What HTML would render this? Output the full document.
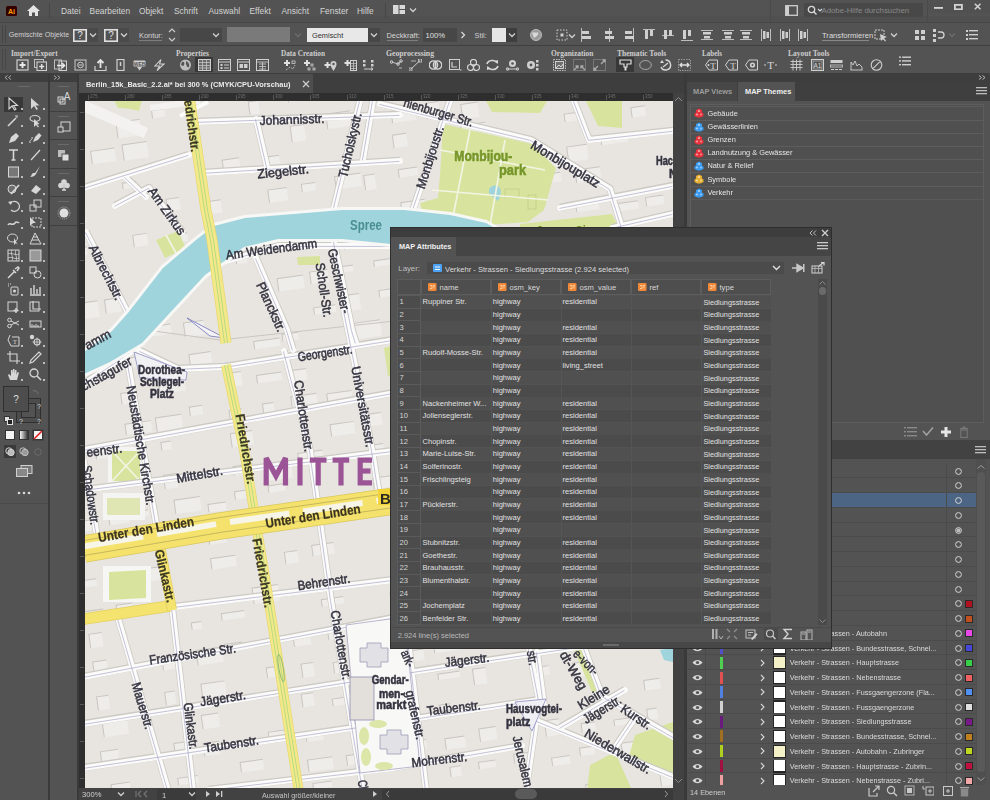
<!DOCTYPE html>
<html><head><meta charset="utf-8">
<style>
*{margin:0;padding:0;box-sizing:border-box}
html,body{width:990px;height:800px;overflow:hidden;background:#535353;font-family:"Liberation Sans",sans-serif;color:#d6d6d6}
.a{position:absolute}
.t{position:absolute;white-space:nowrap;line-height:1}
#menubar{left:0;top:0;width:990px;height:21px;background:#535353}
#ctrl{left:0;top:22px;width:990px;height:23px;background:#535353}
#mapbar{left:0;top:46px;width:990px;height:27px;background:#535353}
.sep{background:#3c3c3c}
</style></head><body>
<!-- separators -->
<div class="a sep" style="left:0;top:21px;width:990px;height:1px"></div>
<div class="a sep" style="left:0;top:45px;width:990px;height:1px"></div>
<div class="a" id="menubar"></div>
<div class="a" id="ctrl"></div>
<div class="a" id="mapbar"></div>
<!-- dark strip below toolbars -->
<div class="a" style="left:0;top:73px;width:990px;height:9px;background:#3e3e3e"></div>
<!-- left tool panel -->
<div class="a" style="left:0;top:82px;width:48px;height:718px;background:#535353"></div>
<div class="a" style="left:48px;top:73px;width:2px;height:727px;background:#3a3a3a"></div>
<div class="a" style="left:50px;top:82px;width:27px;height:718px;background:#535353"></div>
<div class="a" style="left:77px;top:73px;width:2px;height:727px;background:#3a3a3a"></div>
<!-- doc area -->
<div class="a" style="left:79px;top:73px;width:605px;height:20px;background:#3e3e3e"></div>
<div class="a" style="left:79px;top:74px;width:234px;height:19px;background:#4e4e4e"></div>
<div class="a" style="left:79px;top:93px;width:605px;height:8px;background:#2e2e2e"></div>
<div class="a" style="left:79px;top:93px;width:6px;height:695px;background:#2e2e2e"></div>
<svg class="a" style="left:85px;top:101px" width="588" height="687" viewBox="85 101 588 687">
<rect x="0" y="0" width="990" height="800" fill="#e8e5e1"/>
<g transform="rotate(-8 380 450)">
<rect x="61" y="145" width="12" height="14" fill="#eeedea"/>
<polyline points="61,159 61,145 73,145" fill="none" stroke="#c9c5c0" stroke-width="1"/>
<rect x="60" y="171" width="26" height="9" fill="#eeedea"/>
<polyline points="60,180 60,171 86,171" fill="none" stroke="#c9c5c0" stroke-width="1"/>
<rect x="61" y="208" width="12" height="9" fill="#eeedea"/>
<polyline points="61,217 61,208 73,208" fill="none" stroke="#c9c5c0" stroke-width="1"/>
<rect x="60" y="239" width="13" height="9" fill="#eeedea"/>
<polyline points="60,248 60,239 73,239" fill="none" stroke="#c9c5c0" stroke-width="1"/>
<rect x="60" y="268" width="11" height="9" fill="#eeedea"/>
<polyline points="60,277 60,268 71,268" fill="none" stroke="#c9c5c0" stroke-width="1"/>
<rect x="62" y="298" width="19" height="12" fill="#eeedea"/>
<polyline points="62,310 62,298 81,298" fill="none" stroke="#c9c5c0" stroke-width="1"/>
<rect x="63" y="385" width="15" height="7" fill="#eeedea"/>
<polyline points="63,392 63,385 78,385" fill="none" stroke="#c9c5c0" stroke-width="1"/>
<rect x="63" y="447" width="11" height="15" fill="#eeedea"/>
<polyline points="63,462 63,447 74,447" fill="none" stroke="#c9c5c0" stroke-width="1"/>
<rect x="67" y="479" width="23" height="11" fill="#eeedea"/>
<polyline points="67,490 67,479 90,479" fill="none" stroke="#c9c5c0" stroke-width="1"/>
<rect x="63" y="502" width="21" height="10" fill="#eeedea"/>
<polyline points="63,512 63,502 84,502" fill="none" stroke="#c9c5c0" stroke-width="1"/>
<rect x="64" y="538" width="17" height="7" fill="#eeedea"/>
<polyline points="64,545 64,538 81,538" fill="none" stroke="#c9c5c0" stroke-width="1"/>
<rect x="64" y="569" width="20" height="13" fill="#eeedea"/>
<polyline points="64,582 64,569 84,569" fill="none" stroke="#c9c5c0" stroke-width="1"/>
<rect x="66" y="592" width="13" height="14" fill="#eeedea"/>
<polyline points="66,606 66,592 79,592" fill="none" stroke="#c9c5c0" stroke-width="1"/>
<rect x="66" y="620" width="14" height="13" fill="#eeedea"/>
<polyline points="66,633 66,620 80,620" fill="none" stroke="#c9c5c0" stroke-width="1"/>
<rect x="65" y="655" width="12" height="14" fill="#eeedea"/>
<polyline points="65,669 65,655 77,655" fill="none" stroke="#c9c5c0" stroke-width="1"/>
<rect x="67" y="681" width="25" height="15" fill="#eeedea"/>
<polyline points="67,696 67,681 92,681" fill="none" stroke="#c9c5c0" stroke-width="1"/>
<rect x="61" y="710" width="18" height="13" fill="#eeedea"/>
<polyline points="61,723 61,710 79,710" fill="none" stroke="#c9c5c0" stroke-width="1"/>
<rect x="67" y="744" width="19" height="16" fill="#eeedea"/>
<polyline points="67,760 67,744 86,744" fill="none" stroke="#c9c5c0" stroke-width="1"/>
<rect x="67" y="775" width="21" height="6" fill="#eeedea"/>
<polyline points="67,781 67,775 88,775" fill="none" stroke="#c9c5c0" stroke-width="1"/>
<rect x="100" y="146" width="14" height="9" fill="#eeedea"/>
<polyline points="100,155 100,146 114,146" fill="none" stroke="#c9c5c0" stroke-width="1"/>
<rect x="96" y="177" width="25" height="7" fill="#eeedea"/>
<polyline points="96,184 96,177 121,177" fill="none" stroke="#c9c5c0" stroke-width="1"/>
<rect x="100" y="208" width="18" height="8" fill="#eeedea"/>
<polyline points="100,216 100,208 118,208" fill="none" stroke="#c9c5c0" stroke-width="1"/>
<rect x="100" y="263" width="21" height="16" fill="#eeedea"/>
<polyline points="100,279 100,263 121,263" fill="none" stroke="#c9c5c0" stroke-width="1"/>
<rect x="98" y="410" width="15" height="10" fill="#eeedea"/>
<polyline points="98,420 98,410 113,410" fill="none" stroke="#c9c5c0" stroke-width="1"/>
<rect x="102" y="479" width="20" height="8" fill="#eeedea"/>
<polyline points="102,487 102,479 122,479" fill="none" stroke="#c9c5c0" stroke-width="1"/>
<rect x="102" y="506" width="11" height="13" fill="#eeedea"/>
<polyline points="102,519 102,506 113,506" fill="none" stroke="#c9c5c0" stroke-width="1"/>
<rect x="101" y="540" width="22" height="7" fill="#eeedea"/>
<polyline points="101,547 101,540 123,540" fill="none" stroke="#c9c5c0" stroke-width="1"/>
<rect x="97" y="567" width="16" height="7" fill="#eeedea"/>
<polyline points="97,574 97,567 113,567" fill="none" stroke="#c9c5c0" stroke-width="1"/>
<rect x="97" y="779" width="10" height="7" fill="#eeedea"/>
<polyline points="97,786 97,779 107,779" fill="none" stroke="#c9c5c0" stroke-width="1"/>
<rect x="99" y="807" width="18" height="11" fill="#eeedea"/>
<polyline points="99,818 99,807 117,807" fill="none" stroke="#c9c5c0" stroke-width="1"/>
<rect x="135" y="114" width="24" height="13" fill="#eeedea"/>
<polyline points="135,127 135,114 159,114" fill="none" stroke="#c9c5c0" stroke-width="1"/>
<rect x="128" y="263" width="15" height="14" fill="#eeedea"/>
<polyline points="128,277 128,263 143,263" fill="none" stroke="#c9c5c0" stroke-width="1"/>
<rect x="130" y="298" width="26" height="11" fill="#eeedea"/>
<polyline points="130,309 130,298 156,298" fill="none" stroke="#c9c5c0" stroke-width="1"/>
<rect x="129" y="324" width="26" height="10" fill="#eeedea"/>
<polyline points="129,334 129,324 155,324" fill="none" stroke="#c9c5c0" stroke-width="1"/>
<rect x="131" y="358" width="15" height="11" fill="#eeedea"/>
<polyline points="131,369 131,358 146,358" fill="none" stroke="#c9c5c0" stroke-width="1"/>
<rect x="131" y="389" width="26" height="11" fill="#eeedea"/>
<polyline points="131,400 131,389 157,389" fill="none" stroke="#c9c5c0" stroke-width="1"/>
<rect x="134" y="413" width="16" height="9" fill="#eeedea"/>
<polyline points="134,422 134,413 150,413" fill="none" stroke="#c9c5c0" stroke-width="1"/>
<rect x="132" y="477" width="10" height="6" fill="#eeedea"/>
<polyline points="132,483 132,477 142,477" fill="none" stroke="#c9c5c0" stroke-width="1"/>
<rect x="133" y="535" width="21" height="13" fill="#eeedea"/>
<polyline points="133,548 133,535 154,535" fill="none" stroke="#c9c5c0" stroke-width="1"/>
<rect x="135" y="629" width="20" height="9" fill="#eeedea"/>
<polyline points="135,638 135,629 155,629" fill="none" stroke="#c9c5c0" stroke-width="1"/>
<rect x="133" y="660" width="10" height="13" fill="#eeedea"/>
<polyline points="133,673 133,660 143,660" fill="none" stroke="#c9c5c0" stroke-width="1"/>
<rect x="135" y="712" width="22" height="9" fill="#eeedea"/>
<polyline points="135,721 135,712 157,712" fill="none" stroke="#c9c5c0" stroke-width="1"/>
<rect x="134" y="747" width="20" height="7" fill="#eeedea"/>
<polyline points="134,754 134,747 154,747" fill="none" stroke="#c9c5c0" stroke-width="1"/>
<rect x="130" y="772" width="12" height="8" fill="#eeedea"/>
<polyline points="130,780 130,772 142,772" fill="none" stroke="#c9c5c0" stroke-width="1"/>
<rect x="164" y="89" width="24" height="16" fill="#eeedea"/>
<polyline points="164,105 164,89 188,89" fill="none" stroke="#c9c5c0" stroke-width="1"/>
<rect x="167" y="112" width="25" height="16" fill="#eeedea"/>
<polyline points="167,128 167,112 192,112" fill="none" stroke="#c9c5c0" stroke-width="1"/>
<rect x="162" y="150" width="14" height="6" fill="#eeedea"/>
<polyline points="162,156 162,150 176,150" fill="none" stroke="#c9c5c0" stroke-width="1"/>
<rect x="165" y="203" width="14" height="12" fill="#eeedea"/>
<polyline points="165,215 165,203 179,203" fill="none" stroke="#c9c5c0" stroke-width="1"/>
<rect x="170" y="296" width="20" height="10" fill="#eeedea"/>
<polyline points="170,306 170,296 190,296" fill="none" stroke="#c9c5c0" stroke-width="1"/>
<rect x="169" y="330" width="11" height="11" fill="#eeedea"/>
<polyline points="169,341 169,330 180,330" fill="none" stroke="#c9c5c0" stroke-width="1"/>
<rect x="170" y="352" width="26" height="12" fill="#eeedea"/>
<polyline points="170,364 170,352 196,352" fill="none" stroke="#c9c5c0" stroke-width="1"/>
<rect x="162" y="387" width="26" height="14" fill="#eeedea"/>
<polyline points="162,401 162,387 188,387" fill="none" stroke="#c9c5c0" stroke-width="1"/>
<rect x="164" y="412" width="10" height="8" fill="#eeedea"/>
<polyline points="164,420 164,412 174,412" fill="none" stroke="#c9c5c0" stroke-width="1"/>
<rect x="162" y="445" width="13" height="14" fill="#eeedea"/>
<polyline points="162,459 162,445 175,445" fill="none" stroke="#c9c5c0" stroke-width="1"/>
<rect x="169" y="471" width="26" height="14" fill="#eeedea"/>
<polyline points="169,485 169,471 195,471" fill="none" stroke="#c9c5c0" stroke-width="1"/>
<rect x="165" y="504" width="11" height="9" fill="#eeedea"/>
<polyline points="165,513 165,504 176,504" fill="none" stroke="#c9c5c0" stroke-width="1"/>
<rect x="169" y="595" width="10" height="7" fill="#eeedea"/>
<polyline points="169,602 169,595 179,595" fill="none" stroke="#c9c5c0" stroke-width="1"/>
<rect x="170" y="623" width="26" height="15" fill="#eeedea"/>
<polyline points="170,638 170,623 196,623" fill="none" stroke="#c9c5c0" stroke-width="1"/>
<rect x="170" y="657" width="24" height="14" fill="#eeedea"/>
<polyline points="170,671 170,657 194,657" fill="none" stroke="#c9c5c0" stroke-width="1"/>
<rect x="166" y="688" width="17" height="14" fill="#eeedea"/>
<polyline points="166,702 166,688 183,688" fill="none" stroke="#c9c5c0" stroke-width="1"/>
<rect x="164" y="716" width="16" height="13" fill="#eeedea"/>
<polyline points="164,729 164,716 180,716" fill="none" stroke="#c9c5c0" stroke-width="1"/>
<rect x="165" y="776" width="12" height="16" fill="#eeedea"/>
<polyline points="165,792 165,776 177,776" fill="none" stroke="#c9c5c0" stroke-width="1"/>
<rect x="201" y="82" width="13" height="8" fill="#eeedea"/>
<polyline points="201,90 201,82 214,82" fill="none" stroke="#c9c5c0" stroke-width="1"/>
<rect x="203" y="172" width="13" height="12" fill="#eeedea"/>
<polyline points="203,184 203,172 216,172" fill="none" stroke="#c9c5c0" stroke-width="1"/>
<rect x="202" y="208" width="17" height="8" fill="#eeedea"/>
<polyline points="202,216 202,208 219,208" fill="none" stroke="#c9c5c0" stroke-width="1"/>
<rect x="201" y="235" width="23" height="9" fill="#eeedea"/>
<polyline points="201,244 201,235 224,235" fill="none" stroke="#c9c5c0" stroke-width="1"/>
<rect x="203" y="297" width="20" height="14" fill="#eeedea"/>
<polyline points="203,311 203,297 223,297" fill="none" stroke="#c9c5c0" stroke-width="1"/>
<rect x="204" y="329" width="22" height="11" fill="#eeedea"/>
<polyline points="204,340 204,329 226,329" fill="none" stroke="#c9c5c0" stroke-width="1"/>
<rect x="197" y="381" width="13" height="9" fill="#eeedea"/>
<polyline points="197,390 197,381 210,381" fill="none" stroke="#c9c5c0" stroke-width="1"/>
<rect x="202" y="480" width="18" height="8" fill="#eeedea"/>
<polyline points="202,488 202,480 220,480" fill="none" stroke="#c9c5c0" stroke-width="1"/>
<rect x="198" y="508" width="18" height="12" fill="#eeedea"/>
<polyline points="198,520 198,508 216,508" fill="none" stroke="#c9c5c0" stroke-width="1"/>
<rect x="197" y="534" width="25" height="11" fill="#eeedea"/>
<polyline points="197,545 197,534 222,534" fill="none" stroke="#c9c5c0" stroke-width="1"/>
<rect x="200" y="590" width="23" height="7" fill="#eeedea"/>
<polyline points="200,597 200,590 223,590" fill="none" stroke="#c9c5c0" stroke-width="1"/>
<rect x="199" y="621" width="18" height="7" fill="#eeedea"/>
<polyline points="199,628 199,621 217,621" fill="none" stroke="#c9c5c0" stroke-width="1"/>
<rect x="198" y="740" width="23" height="10" fill="#eeedea"/>
<polyline points="198,750 198,740 221,740" fill="none" stroke="#c9c5c0" stroke-width="1"/>
<rect x="198" y="774" width="17" height="7" fill="#eeedea"/>
<polyline points="198,781 198,774 215,774" fill="none" stroke="#c9c5c0" stroke-width="1"/>
<rect x="238" y="180" width="19" height="13" fill="#eeedea"/>
<polyline points="238,193 238,180 257,180" fill="none" stroke="#c9c5c0" stroke-width="1"/>
<rect x="237" y="353" width="16" height="14" fill="#eeedea"/>
<polyline points="237,367 237,353 253,353" fill="none" stroke="#c9c5c0" stroke-width="1"/>
<rect x="236" y="390" width="13" height="16" fill="#eeedea"/>
<polyline points="236,406 236,390 249,390" fill="none" stroke="#c9c5c0" stroke-width="1"/>
<rect x="234" y="413" width="22" height="14" fill="#eeedea"/>
<polyline points="234,427 234,413 256,413" fill="none" stroke="#c9c5c0" stroke-width="1"/>
<rect x="232" y="446" width="20" height="9" fill="#eeedea"/>
<polyline points="232,455 232,446 252,446" fill="none" stroke="#c9c5c0" stroke-width="1"/>
<rect x="230" y="471" width="11" height="8" fill="#eeedea"/>
<polyline points="230,479 230,471 241,471" fill="none" stroke="#c9c5c0" stroke-width="1"/>
<rect x="232" y="500" width="18" height="12" fill="#eeedea"/>
<polyline points="232,512 232,500 250,500" fill="none" stroke="#c9c5c0" stroke-width="1"/>
<rect x="234" y="569" width="26" height="16" fill="#eeedea"/>
<polyline points="234,585 234,569 260,569" fill="none" stroke="#c9c5c0" stroke-width="1"/>
<rect x="237" y="650" width="15" height="10" fill="#eeedea"/>
<polyline points="237,660 237,650 252,650" fill="none" stroke="#c9c5c0" stroke-width="1"/>
<rect x="230" y="714" width="20" height="9" fill="#eeedea"/>
<polyline points="230,723 230,714 250,714" fill="none" stroke="#c9c5c0" stroke-width="1"/>
<rect x="264" y="141" width="17" height="14" fill="#eeedea"/>
<polyline points="264,155 264,141 281,141" fill="none" stroke="#c9c5c0" stroke-width="1"/>
<rect x="264" y="234" width="11" height="12" fill="#eeedea"/>
<polyline points="264,246 264,234 275,234" fill="none" stroke="#c9c5c0" stroke-width="1"/>
<rect x="270" y="325" width="26" height="8" fill="#eeedea"/>
<polyline points="270,333 270,325 296,325" fill="none" stroke="#c9c5c0" stroke-width="1"/>
<rect x="268" y="359" width="25" height="8" fill="#eeedea"/>
<polyline points="268,367 268,359 293,359" fill="none" stroke="#c9c5c0" stroke-width="1"/>
<rect x="270" y="388" width="11" height="14" fill="#eeedea"/>
<polyline points="270,402 270,388 281,388" fill="none" stroke="#c9c5c0" stroke-width="1"/>
<rect x="264" y="450" width="26" height="15" fill="#eeedea"/>
<polyline points="264,465 264,450 290,450" fill="none" stroke="#c9c5c0" stroke-width="1"/>
<rect x="264" y="470" width="17" height="7" fill="#eeedea"/>
<polyline points="264,477 264,470 281,470" fill="none" stroke="#c9c5c0" stroke-width="1"/>
<rect x="271" y="538" width="13" height="12" fill="#eeedea"/>
<polyline points="271,550 271,538 284,538" fill="none" stroke="#c9c5c0" stroke-width="1"/>
<rect x="268" y="620" width="17" height="13" fill="#eeedea"/>
<polyline points="268,633 268,620 285,620" fill="none" stroke="#c9c5c0" stroke-width="1"/>
<rect x="272" y="651" width="12" height="14" fill="#eeedea"/>
<polyline points="272,665 272,651 284,651" fill="none" stroke="#c9c5c0" stroke-width="1"/>
<rect x="268" y="681" width="12" height="13" fill="#eeedea"/>
<polyline points="268,694 268,681 280,681" fill="none" stroke="#c9c5c0" stroke-width="1"/>
<rect x="267" y="720" width="17" height="9" fill="#eeedea"/>
<polyline points="267,729 267,720 284,720" fill="none" stroke="#c9c5c0" stroke-width="1"/>
<rect x="265" y="747" width="25" height="12" fill="#eeedea"/>
<polyline points="265,759 265,747 290,747" fill="none" stroke="#c9c5c0" stroke-width="1"/>
<rect x="267" y="771" width="19" height="6" fill="#eeedea"/>
<polyline points="267,777 267,771 286,771" fill="none" stroke="#c9c5c0" stroke-width="1"/>
<rect x="268" y="809" width="20" height="10" fill="#eeedea"/>
<polyline points="268,819 268,809 288,809" fill="none" stroke="#c9c5c0" stroke-width="1"/>
<rect x="298" y="87" width="10" height="13" fill="#eeedea"/>
<polyline points="298,100 298,87 308,87" fill="none" stroke="#c9c5c0" stroke-width="1"/>
<rect x="305" y="144" width="16" height="16" fill="#eeedea"/>
<polyline points="305,160 305,144 321,144" fill="none" stroke="#c9c5c0" stroke-width="1"/>
<rect x="305" y="177" width="19" height="13" fill="#eeedea"/>
<polyline points="305,190 305,177 324,177" fill="none" stroke="#c9c5c0" stroke-width="1"/>
<rect x="299" y="207" width="16" height="10" fill="#eeedea"/>
<polyline points="299,217 299,207 315,207" fill="none" stroke="#c9c5c0" stroke-width="1"/>
<rect x="302" y="266" width="26" height="13" fill="#eeedea"/>
<polyline points="302,279 302,266 328,266" fill="none" stroke="#c9c5c0" stroke-width="1"/>
<rect x="299" y="322" width="16" height="7" fill="#eeedea"/>
<polyline points="299,329 299,322 315,322" fill="none" stroke="#c9c5c0" stroke-width="1"/>
<rect x="300" y="359" width="18" height="11" fill="#eeedea"/>
<polyline points="300,370 300,359 318,359" fill="none" stroke="#c9c5c0" stroke-width="1"/>
<rect x="299" y="385" width="26" height="10" fill="#eeedea"/>
<polyline points="299,395 299,385 325,385" fill="none" stroke="#c9c5c0" stroke-width="1"/>
<rect x="298" y="442" width="25" height="12" fill="#eeedea"/>
<polyline points="298,454 298,442 323,442" fill="none" stroke="#c9c5c0" stroke-width="1"/>
<rect x="302" y="502" width="24" height="12" fill="#eeedea"/>
<polyline points="302,514 302,502 326,502" fill="none" stroke="#c9c5c0" stroke-width="1"/>
<rect x="299" y="535" width="22" height="11" fill="#eeedea"/>
<polyline points="299,546 299,535 321,535" fill="none" stroke="#c9c5c0" stroke-width="1"/>
<rect x="301" y="590" width="22" height="7" fill="#eeedea"/>
<polyline points="301,597 301,590 323,590" fill="none" stroke="#c9c5c0" stroke-width="1"/>
<rect x="303" y="621" width="19" height="10" fill="#eeedea"/>
<polyline points="303,631 303,621 322,621" fill="none" stroke="#c9c5c0" stroke-width="1"/>
<rect x="304" y="654" width="12" height="11" fill="#eeedea"/>
<polyline points="304,665 304,654 316,654" fill="none" stroke="#c9c5c0" stroke-width="1"/>
<rect x="298" y="690" width="18" height="7" fill="#eeedea"/>
<polyline points="298,697 298,690 316,690" fill="none" stroke="#c9c5c0" stroke-width="1"/>
<rect x="304" y="748" width="17" height="10" fill="#eeedea"/>
<polyline points="304,758 304,748 321,748" fill="none" stroke="#c9c5c0" stroke-width="1"/>
<rect x="304" y="808" width="23" height="6" fill="#eeedea"/>
<polyline points="304,814 304,808 327,808" fill="none" stroke="#c9c5c0" stroke-width="1"/>
<rect x="338" y="87" width="12" height="6" fill="#eeedea"/>
<polyline points="338,93 338,87 350,87" fill="none" stroke="#c9c5c0" stroke-width="1"/>
<rect x="336" y="117" width="14" height="16" fill="#eeedea"/>
<polyline points="336,133 336,117 350,117" fill="none" stroke="#c9c5c0" stroke-width="1"/>
<rect x="339" y="176" width="14" height="8" fill="#eeedea"/>
<polyline points="339,184 339,176 353,176" fill="none" stroke="#c9c5c0" stroke-width="1"/>
<rect x="335" y="264" width="18" height="12" fill="#eeedea"/>
<polyline points="335,276 335,264 353,264" fill="none" stroke="#c9c5c0" stroke-width="1"/>
<rect x="334" y="300" width="22" height="7" fill="#eeedea"/>
<polyline points="334,307 334,300 356,300" fill="none" stroke="#c9c5c0" stroke-width="1"/>
<rect x="335" y="387" width="25" height="14" fill="#eeedea"/>
<polyline points="335,401 335,387 360,387" fill="none" stroke="#c9c5c0" stroke-width="1"/>
<rect x="334" y="418" width="24" height="12" fill="#eeedea"/>
<polyline points="334,430 334,418 358,418" fill="none" stroke="#c9c5c0" stroke-width="1"/>
<rect x="338" y="626" width="10" height="12" fill="#eeedea"/>
<polyline points="338,638 338,626 348,626" fill="none" stroke="#c9c5c0" stroke-width="1"/>
<rect x="336" y="655" width="16" height="12" fill="#eeedea"/>
<polyline points="336,667 336,655 352,655" fill="none" stroke="#c9c5c0" stroke-width="1"/>
<rect x="337" y="682" width="25" height="10" fill="#eeedea"/>
<polyline points="337,692 337,682 362,682" fill="none" stroke="#c9c5c0" stroke-width="1"/>
<rect x="335" y="711" width="26" height="16" fill="#eeedea"/>
<polyline points="335,727 335,711 361,711" fill="none" stroke="#c9c5c0" stroke-width="1"/>
<rect x="336" y="800" width="24" height="12" fill="#eeedea"/>
<polyline points="336,812 336,800 360,800" fill="none" stroke="#c9c5c0" stroke-width="1"/>
<rect x="373" y="110" width="25" height="15" fill="#eeedea"/>
<polyline points="373,125 373,110 398,110" fill="none" stroke="#c9c5c0" stroke-width="1"/>
<rect x="373" y="173" width="26" height="13" fill="#eeedea"/>
<polyline points="373,186 373,173 399,173" fill="none" stroke="#c9c5c0" stroke-width="1"/>
<rect x="368" y="208" width="17" height="8" fill="#eeedea"/>
<polyline points="368,216 368,208 385,208" fill="none" stroke="#c9c5c0" stroke-width="1"/>
<rect x="373" y="231" width="13" height="16" fill="#eeedea"/>
<polyline points="373,247 373,231 386,231" fill="none" stroke="#c9c5c0" stroke-width="1"/>
<rect x="368" y="263" width="11" height="6" fill="#eeedea"/>
<polyline points="368,269 368,263 379,263" fill="none" stroke="#c9c5c0" stroke-width="1"/>
<rect x="370" y="292" width="11" height="16" fill="#eeedea"/>
<polyline points="370,308 370,292 381,292" fill="none" stroke="#c9c5c0" stroke-width="1"/>
<rect x="372" y="321" width="26" height="16" fill="#eeedea"/>
<polyline points="372,337 372,321 398,321" fill="none" stroke="#c9c5c0" stroke-width="1"/>
<rect x="370" y="413" width="16" height="12" fill="#eeedea"/>
<polyline points="370,425 370,413 386,413" fill="none" stroke="#c9c5c0" stroke-width="1"/>
<rect x="374" y="444" width="10" height="6" fill="#eeedea"/>
<polyline points="374,450 374,444 384,444" fill="none" stroke="#c9c5c0" stroke-width="1"/>
<rect x="369" y="477" width="18" height="11" fill="#eeedea"/>
<polyline points="369,488 369,477 387,477" fill="none" stroke="#c9c5c0" stroke-width="1"/>
<rect x="372" y="510" width="17" height="6" fill="#eeedea"/>
<polyline points="372,516 372,510 389,510" fill="none" stroke="#c9c5c0" stroke-width="1"/>
<rect x="370" y="593" width="23" height="7" fill="#eeedea"/>
<polyline points="370,600 370,593 393,593" fill="none" stroke="#c9c5c0" stroke-width="1"/>
<rect x="373" y="620" width="21" height="9" fill="#eeedea"/>
<polyline points="373,629 373,620 394,620" fill="none" stroke="#c9c5c0" stroke-width="1"/>
<rect x="372" y="653" width="23" height="11" fill="#eeedea"/>
<polyline points="372,664 372,653 395,653" fill="none" stroke="#c9c5c0" stroke-width="1"/>
<rect x="373" y="743" width="12" height="9" fill="#eeedea"/>
<polyline points="373,752 373,743 385,743" fill="none" stroke="#c9c5c0" stroke-width="1"/>
<rect x="369" y="804" width="17" height="13" fill="#eeedea"/>
<polyline points="369,817 369,804 386,804" fill="none" stroke="#c9c5c0" stroke-width="1"/>
<rect x="407" y="89" width="19" height="7" fill="#eeedea"/>
<polyline points="407,96 407,89 426,89" fill="none" stroke="#c9c5c0" stroke-width="1"/>
<rect x="402" y="176" width="11" height="15" fill="#eeedea"/>
<polyline points="402,191 402,176 413,176" fill="none" stroke="#c9c5c0" stroke-width="1"/>
<rect x="400" y="262" width="23" height="6" fill="#eeedea"/>
<polyline points="400,268 400,262 423,262" fill="none" stroke="#c9c5c0" stroke-width="1"/>
<rect x="401" y="292" width="20" height="7" fill="#eeedea"/>
<polyline points="401,299 401,292 421,292" fill="none" stroke="#c9c5c0" stroke-width="1"/>
<rect x="404" y="390" width="24" height="6" fill="#eeedea"/>
<polyline points="404,396 404,390 428,390" fill="none" stroke="#c9c5c0" stroke-width="1"/>
<rect x="407" y="412" width="21" height="11" fill="#eeedea"/>
<polyline points="407,423 407,412 428,412" fill="none" stroke="#c9c5c0" stroke-width="1"/>
<rect x="403" y="536" width="13" height="14" fill="#eeedea"/>
<polyline points="403,550 403,536 416,536" fill="none" stroke="#c9c5c0" stroke-width="1"/>
<rect x="401" y="560" width="19" height="12" fill="#eeedea"/>
<polyline points="401,572 401,560 420,560" fill="none" stroke="#c9c5c0" stroke-width="1"/>
<rect x="408" y="597" width="16" height="11" fill="#eeedea"/>
<polyline points="408,608 408,597 424,597" fill="none" stroke="#c9c5c0" stroke-width="1"/>
<rect x="406" y="653" width="25" height="6" fill="#eeedea"/>
<polyline points="406,659 406,653 431,653" fill="none" stroke="#c9c5c0" stroke-width="1"/>
<rect x="406" y="680" width="22" height="6" fill="#eeedea"/>
<polyline points="406,686 406,680 428,680" fill="none" stroke="#c9c5c0" stroke-width="1"/>
<rect x="403" y="711" width="11" height="10" fill="#eeedea"/>
<polyline points="403,721 403,711 414,711" fill="none" stroke="#c9c5c0" stroke-width="1"/>
<rect x="404" y="745" width="20" height="11" fill="#eeedea"/>
<polyline points="404,756 404,745 424,745" fill="none" stroke="#c9c5c0" stroke-width="1"/>
<rect x="405" y="774" width="11" height="10" fill="#eeedea"/>
<polyline points="405,784 405,774 416,774" fill="none" stroke="#c9c5c0" stroke-width="1"/>
<rect x="437" y="81" width="12" height="6" fill="#eeedea"/>
<polyline points="437,87 437,81 449,81" fill="none" stroke="#c9c5c0" stroke-width="1"/>
<rect x="438" y="116" width="24" height="12" fill="#eeedea"/>
<polyline points="438,128 438,116 462,116" fill="none" stroke="#c9c5c0" stroke-width="1"/>
<rect x="436" y="140" width="14" height="13" fill="#eeedea"/>
<polyline points="436,153 436,140 450,140" fill="none" stroke="#c9c5c0" stroke-width="1"/>
<rect x="437" y="175" width="19" height="8" fill="#eeedea"/>
<polyline points="437,183 437,175 456,175" fill="none" stroke="#c9c5c0" stroke-width="1"/>
<rect x="435" y="208" width="24" height="11" fill="#eeedea"/>
<polyline points="435,219 435,208 459,208" fill="none" stroke="#c9c5c0" stroke-width="1"/>
<rect x="435" y="270" width="17" height="12" fill="#eeedea"/>
<polyline points="435,282 435,270 452,270" fill="none" stroke="#c9c5c0" stroke-width="1"/>
<rect x="440" y="321" width="20" height="8" fill="#eeedea"/>
<polyline points="440,329 440,321 460,321" fill="none" stroke="#c9c5c0" stroke-width="1"/>
<rect x="435" y="353" width="18" height="15" fill="#eeedea"/>
<polyline points="435,368 435,353 453,353" fill="none" stroke="#c9c5c0" stroke-width="1"/>
<rect x="437" y="412" width="24" height="8" fill="#eeedea"/>
<polyline points="437,420 437,412 461,412" fill="none" stroke="#c9c5c0" stroke-width="1"/>
<rect x="435" y="444" width="17" height="14" fill="#eeedea"/>
<polyline points="435,458 435,444 452,444" fill="none" stroke="#c9c5c0" stroke-width="1"/>
<rect x="438" y="503" width="21" height="10" fill="#eeedea"/>
<polyline points="438,513 438,503 459,503" fill="none" stroke="#c9c5c0" stroke-width="1"/>
<rect x="437" y="532" width="15" height="9" fill="#eeedea"/>
<polyline points="437,541 437,532 452,532" fill="none" stroke="#c9c5c0" stroke-width="1"/>
<rect x="435" y="596" width="16" height="11" fill="#eeedea"/>
<polyline points="435,607 435,596 451,596" fill="none" stroke="#c9c5c0" stroke-width="1"/>
<rect x="441" y="680" width="13" height="16" fill="#eeedea"/>
<polyline points="441,696 441,680 454,680" fill="none" stroke="#c9c5c0" stroke-width="1"/>
<rect x="439" y="740" width="17" height="13" fill="#eeedea"/>
<polyline points="439,753 439,740 456,740" fill="none" stroke="#c9c5c0" stroke-width="1"/>
<rect x="434" y="773" width="17" height="7" fill="#eeedea"/>
<polyline points="434,780 434,773 451,773" fill="none" stroke="#c9c5c0" stroke-width="1"/>
<rect x="439" y="808" width="16" height="7" fill="#eeedea"/>
<polyline points="439,815 439,808 455,808" fill="none" stroke="#c9c5c0" stroke-width="1"/>
<rect x="472" y="90" width="24" height="15" fill="#eeedea"/>
<polyline points="472,105 472,90 496,90" fill="none" stroke="#c9c5c0" stroke-width="1"/>
<rect x="473" y="113" width="13" height="16" fill="#eeedea"/>
<polyline points="473,129 473,113 486,113" fill="none" stroke="#c9c5c0" stroke-width="1"/>
<rect x="471" y="230" width="11" height="15" fill="#eeedea"/>
<polyline points="471,245 471,230 482,230" fill="none" stroke="#c9c5c0" stroke-width="1"/>
<rect x="473" y="262" width="23" height="16" fill="#eeedea"/>
<polyline points="473,278 473,262 496,262" fill="none" stroke="#c9c5c0" stroke-width="1"/>
<rect x="468" y="297" width="12" height="9" fill="#eeedea"/>
<polyline points="468,306 468,297 480,297" fill="none" stroke="#c9c5c0" stroke-width="1"/>
<rect x="469" y="326" width="12" height="12" fill="#eeedea"/>
<polyline points="469,338 469,326 481,326" fill="none" stroke="#c9c5c0" stroke-width="1"/>
<rect x="476" y="351" width="14" height="16" fill="#eeedea"/>
<polyline points="476,367 476,351 490,351" fill="none" stroke="#c9c5c0" stroke-width="1"/>
<rect x="474" y="384" width="22" height="10" fill="#eeedea"/>
<polyline points="474,394 474,384 496,384" fill="none" stroke="#c9c5c0" stroke-width="1"/>
<rect x="472" y="419" width="23" height="6" fill="#eeedea"/>
<polyline points="472,425 472,419 495,419" fill="none" stroke="#c9c5c0" stroke-width="1"/>
<rect x="468" y="445" width="23" height="12" fill="#eeedea"/>
<polyline points="468,457 468,445 491,445" fill="none" stroke="#c9c5c0" stroke-width="1"/>
<rect x="471" y="470" width="22" height="12" fill="#eeedea"/>
<polyline points="471,482 471,470 493,470" fill="none" stroke="#c9c5c0" stroke-width="1"/>
<rect x="469" y="501" width="15" height="12" fill="#eeedea"/>
<polyline points="469,513 469,501 484,501" fill="none" stroke="#c9c5c0" stroke-width="1"/>
<rect x="470" y="532" width="21" height="13" fill="#eeedea"/>
<polyline points="470,545 470,532 491,532" fill="none" stroke="#c9c5c0" stroke-width="1"/>
<rect x="473" y="598" width="22" height="7" fill="#eeedea"/>
<polyline points="473,605 473,598 495,598" fill="none" stroke="#c9c5c0" stroke-width="1"/>
<rect x="470" y="770" width="16" height="10" fill="#eeedea"/>
<polyline points="470,780 470,770 486,770" fill="none" stroke="#c9c5c0" stroke-width="1"/>
<rect x="468" y="809" width="25" height="11" fill="#eeedea"/>
<polyline points="468,820 468,809 493,809" fill="none" stroke="#c9c5c0" stroke-width="1"/>
<rect x="504" y="90" width="22" height="7" fill="#eeedea"/>
<polyline points="504,97 504,90 526,90" fill="none" stroke="#c9c5c0" stroke-width="1"/>
<rect x="508" y="119" width="17" height="15" fill="#eeedea"/>
<polyline points="508,134 508,119 525,119" fill="none" stroke="#c9c5c0" stroke-width="1"/>
<rect x="505" y="140" width="25" height="8" fill="#eeedea"/>
<polyline points="505,148 505,140 530,140" fill="none" stroke="#c9c5c0" stroke-width="1"/>
<rect x="508" y="175" width="26" height="8" fill="#eeedea"/>
<polyline points="508,183 508,175 534,175" fill="none" stroke="#c9c5c0" stroke-width="1"/>
<rect x="510" y="270" width="16" height="6" fill="#eeedea"/>
<polyline points="510,276 510,270 526,270" fill="none" stroke="#c9c5c0" stroke-width="1"/>
<rect x="509" y="328" width="13" height="12" fill="#eeedea"/>
<polyline points="509,340 509,328 522,328" fill="none" stroke="#c9c5c0" stroke-width="1"/>
<rect x="508" y="354" width="19" height="16" fill="#eeedea"/>
<polyline points="508,370 508,354 527,354" fill="none" stroke="#c9c5c0" stroke-width="1"/>
<rect x="507" y="387" width="23" height="12" fill="#eeedea"/>
<polyline points="507,399 507,387 530,387" fill="none" stroke="#c9c5c0" stroke-width="1"/>
<rect x="502" y="419" width="15" height="6" fill="#eeedea"/>
<polyline points="502,425 502,419 517,419" fill="none" stroke="#c9c5c0" stroke-width="1"/>
<rect x="509" y="449" width="24" height="9" fill="#eeedea"/>
<polyline points="509,458 509,449 533,449" fill="none" stroke="#c9c5c0" stroke-width="1"/>
<rect x="509" y="476" width="24" height="8" fill="#eeedea"/>
<polyline points="509,484 509,476 533,476" fill="none" stroke="#c9c5c0" stroke-width="1"/>
<rect x="510" y="568" width="12" height="13" fill="#eeedea"/>
<polyline points="510,581 510,568 522,568" fill="none" stroke="#c9c5c0" stroke-width="1"/>
<rect x="504" y="591" width="11" height="16" fill="#eeedea"/>
<polyline points="504,607 504,591 515,591" fill="none" stroke="#c9c5c0" stroke-width="1"/>
<rect x="503" y="620" width="20" height="14" fill="#eeedea"/>
<polyline points="503,634 503,620 523,620" fill="none" stroke="#c9c5c0" stroke-width="1"/>
<rect x="504" y="650" width="22" height="16" fill="#eeedea"/>
<polyline points="504,666 504,650 526,650" fill="none" stroke="#c9c5c0" stroke-width="1"/>
<rect x="504" y="687" width="13" height="9" fill="#eeedea"/>
<polyline points="504,696 504,687 517,687" fill="none" stroke="#c9c5c0" stroke-width="1"/>
<rect x="505" y="741" width="15" height="16" fill="#eeedea"/>
<polyline points="505,757 505,741 520,741" fill="none" stroke="#c9c5c0" stroke-width="1"/>
<rect x="507" y="779" width="18" height="8" fill="#eeedea"/>
<polyline points="507,787 507,779 525,779" fill="none" stroke="#c9c5c0" stroke-width="1"/>
<rect x="544" y="87" width="14" height="10" fill="#eeedea"/>
<polyline points="544,97 544,87 558,87" fill="none" stroke="#c9c5c0" stroke-width="1"/>
<rect x="536" y="173" width="20" height="11" fill="#eeedea"/>
<polyline points="536,184 536,173 556,173" fill="none" stroke="#c9c5c0" stroke-width="1"/>
<rect x="538" y="264" width="20" height="12" fill="#eeedea"/>
<polyline points="538,276 538,264 558,264" fill="none" stroke="#c9c5c0" stroke-width="1"/>
<rect x="544" y="328" width="21" height="13" fill="#eeedea"/>
<polyline points="544,341 544,328 565,328" fill="none" stroke="#c9c5c0" stroke-width="1"/>
<rect x="544" y="360" width="13" height="10" fill="#eeedea"/>
<polyline points="544,370 544,360 557,360" fill="none" stroke="#c9c5c0" stroke-width="1"/>
<rect x="542" y="385" width="21" height="10" fill="#eeedea"/>
<polyline points="542,395 542,385 563,385" fill="none" stroke="#c9c5c0" stroke-width="1"/>
<rect x="537" y="417" width="21" height="11" fill="#eeedea"/>
<polyline points="537,428 537,417 558,417" fill="none" stroke="#c9c5c0" stroke-width="1"/>
<rect x="544" y="474" width="11" height="10" fill="#eeedea"/>
<polyline points="544,484 544,474 555,474" fill="none" stroke="#c9c5c0" stroke-width="1"/>
<rect x="536" y="533" width="20" height="6" fill="#eeedea"/>
<polyline points="536,539 536,533 556,533" fill="none" stroke="#c9c5c0" stroke-width="1"/>
<rect x="544" y="595" width="23" height="12" fill="#eeedea"/>
<polyline points="544,607 544,595 567,595" fill="none" stroke="#c9c5c0" stroke-width="1"/>
<rect x="539" y="629" width="14" height="13" fill="#eeedea"/>
<polyline points="539,642 539,629 553,629" fill="none" stroke="#c9c5c0" stroke-width="1"/>
<rect x="536" y="659" width="10" height="6" fill="#eeedea"/>
<polyline points="536,665 536,659 546,659" fill="none" stroke="#c9c5c0" stroke-width="1"/>
<rect x="541" y="688" width="13" height="14" fill="#eeedea"/>
<polyline points="541,702 541,688 554,688" fill="none" stroke="#c9c5c0" stroke-width="1"/>
<rect x="541" y="749" width="14" height="9" fill="#eeedea"/>
<polyline points="541,758 541,749 555,749" fill="none" stroke="#c9c5c0" stroke-width="1"/>
<rect x="536" y="773" width="15" height="8" fill="#eeedea"/>
<polyline points="536,781 536,773 551,773" fill="none" stroke="#c9c5c0" stroke-width="1"/>
<rect x="537" y="810" width="24" height="7" fill="#eeedea"/>
<polyline points="537,817 537,810 561,810" fill="none" stroke="#c9c5c0" stroke-width="1"/>
<rect x="574" y="110" width="18" height="12" fill="#eeedea"/>
<polyline points="574,122 574,110 592,110" fill="none" stroke="#c9c5c0" stroke-width="1"/>
<rect x="577" y="179" width="21" height="15" fill="#eeedea"/>
<polyline points="577,194 577,179 598,179" fill="none" stroke="#c9c5c0" stroke-width="1"/>
<rect x="572" y="200" width="25" height="9" fill="#eeedea"/>
<polyline points="572,209 572,200 597,200" fill="none" stroke="#c9c5c0" stroke-width="1"/>
<rect x="573" y="262" width="22" height="8" fill="#eeedea"/>
<polyline points="573,270 573,262 595,262" fill="none" stroke="#c9c5c0" stroke-width="1"/>
<rect x="578" y="330" width="10" height="15" fill="#eeedea"/>
<polyline points="578,345 578,330 588,330" fill="none" stroke="#c9c5c0" stroke-width="1"/>
<rect x="573" y="358" width="14" height="12" fill="#eeedea"/>
<polyline points="573,370 573,358 587,358" fill="none" stroke="#c9c5c0" stroke-width="1"/>
<rect x="576" y="389" width="26" height="16" fill="#eeedea"/>
<polyline points="576,405 576,389 602,389" fill="none" stroke="#c9c5c0" stroke-width="1"/>
<rect x="570" y="536" width="25" height="14" fill="#eeedea"/>
<polyline points="570,550 570,536 595,536" fill="none" stroke="#c9c5c0" stroke-width="1"/>
<rect x="577" y="562" width="24" height="7" fill="#eeedea"/>
<polyline points="577,569 577,562 601,562" fill="none" stroke="#c9c5c0" stroke-width="1"/>
<rect x="574" y="750" width="18" height="6" fill="#eeedea"/>
<polyline points="574,756 574,750 592,750" fill="none" stroke="#c9c5c0" stroke-width="1"/>
<rect x="578" y="774" width="23" height="16" fill="#eeedea"/>
<polyline points="578,790 578,774 601,774" fill="none" stroke="#c9c5c0" stroke-width="1"/>
<rect x="612" y="80" width="16" height="7" fill="#eeedea"/>
<polyline points="612,87 612,80 628,80" fill="none" stroke="#c9c5c0" stroke-width="1"/>
<rect x="609" y="143" width="16" height="8" fill="#eeedea"/>
<polyline points="609,151 609,143 625,143" fill="none" stroke="#c9c5c0" stroke-width="1"/>
<rect x="607" y="176" width="20" height="15" fill="#eeedea"/>
<polyline points="607,191 607,176 627,176" fill="none" stroke="#c9c5c0" stroke-width="1"/>
<rect x="612" y="200" width="25" height="13" fill="#eeedea"/>
<polyline points="612,213 612,200 637,200" fill="none" stroke="#c9c5c0" stroke-width="1"/>
<rect x="608" y="233" width="23" height="9" fill="#eeedea"/>
<polyline points="608,242 608,233 631,233" fill="none" stroke="#c9c5c0" stroke-width="1"/>
<rect x="606" y="262" width="12" height="15" fill="#eeedea"/>
<polyline points="606,277 606,262 618,262" fill="none" stroke="#c9c5c0" stroke-width="1"/>
<rect x="606" y="350" width="15" height="11" fill="#eeedea"/>
<polyline points="606,361 606,350 621,350" fill="none" stroke="#c9c5c0" stroke-width="1"/>
<rect x="604" y="441" width="11" height="7" fill="#eeedea"/>
<polyline points="604,448 604,441 615,441" fill="none" stroke="#c9c5c0" stroke-width="1"/>
<rect x="612" y="480" width="21" height="9" fill="#eeedea"/>
<polyline points="612,489 612,480 633,480" fill="none" stroke="#c9c5c0" stroke-width="1"/>
<rect x="607" y="533" width="22" height="7" fill="#eeedea"/>
<polyline points="607,540 607,533 629,533" fill="none" stroke="#c9c5c0" stroke-width="1"/>
<rect x="608" y="627" width="12" height="16" fill="#eeedea"/>
<polyline points="608,643 608,627 620,627" fill="none" stroke="#c9c5c0" stroke-width="1"/>
<rect x="609" y="715" width="16" height="10" fill="#eeedea"/>
<polyline points="609,725 609,715 625,715" fill="none" stroke="#c9c5c0" stroke-width="1"/>
<rect x="608" y="744" width="10" height="11" fill="#eeedea"/>
<polyline points="608,755 608,744 618,744" fill="none" stroke="#c9c5c0" stroke-width="1"/>
<rect x="612" y="807" width="20" height="15" fill="#eeedea"/>
<polyline points="612,822 612,807 632,807" fill="none" stroke="#c9c5c0" stroke-width="1"/>
<rect x="638" y="86" width="10" height="12" fill="#eeedea"/>
<polyline points="638,98 638,86 648,86" fill="none" stroke="#c9c5c0" stroke-width="1"/>
<rect x="645" y="110" width="13" height="11" fill="#eeedea"/>
<polyline points="645,121 645,110 658,110" fill="none" stroke="#c9c5c0" stroke-width="1"/>
<rect x="642" y="142" width="16" height="7" fill="#eeedea"/>
<polyline points="642,149 642,142 658,142" fill="none" stroke="#c9c5c0" stroke-width="1"/>
<rect x="642" y="170" width="26" height="9" fill="#eeedea"/>
<polyline points="642,179 642,170 668,170" fill="none" stroke="#c9c5c0" stroke-width="1"/>
<rect x="645" y="239" width="25" height="8" fill="#eeedea"/>
<polyline points="645,247 645,239 670,239" fill="none" stroke="#c9c5c0" stroke-width="1"/>
<rect x="640" y="294" width="18" height="15" fill="#eeedea"/>
<polyline points="640,309 640,294 658,294" fill="none" stroke="#c9c5c0" stroke-width="1"/>
<rect x="640" y="321" width="17" height="13" fill="#eeedea"/>
<polyline points="640,334 640,321 657,321" fill="none" stroke="#c9c5c0" stroke-width="1"/>
<rect x="646" y="351" width="12" height="13" fill="#eeedea"/>
<polyline points="646,364 646,351 658,351" fill="none" stroke="#c9c5c0" stroke-width="1"/>
<rect x="644" y="386" width="21" height="7" fill="#eeedea"/>
<polyline points="644,393 644,386 665,386" fill="none" stroke="#c9c5c0" stroke-width="1"/>
<rect x="638" y="415" width="12" height="12" fill="#eeedea"/>
<polyline points="638,427 638,415 650,415" fill="none" stroke="#c9c5c0" stroke-width="1"/>
<rect x="644" y="510" width="26" height="8" fill="#eeedea"/>
<polyline points="644,518 644,510 670,510" fill="none" stroke="#c9c5c0" stroke-width="1"/>
<rect x="643" y="568" width="11" height="11" fill="#eeedea"/>
<polyline points="643,579 643,568 654,568" fill="none" stroke="#c9c5c0" stroke-width="1"/>
<rect x="645" y="627" width="20" height="8" fill="#eeedea"/>
<polyline points="645,635 645,627 665,627" fill="none" stroke="#c9c5c0" stroke-width="1"/>
<rect x="641" y="652" width="18" height="15" fill="#eeedea"/>
<polyline points="641,667 641,652 659,652" fill="none" stroke="#c9c5c0" stroke-width="1"/>
<rect x="641" y="714" width="17" height="14" fill="#eeedea"/>
<polyline points="641,728 641,714 658,714" fill="none" stroke="#c9c5c0" stroke-width="1"/>
<rect x="641" y="775" width="14" height="8" fill="#eeedea"/>
<polyline points="641,783 641,775 655,775" fill="none" stroke="#c9c5c0" stroke-width="1"/>
<rect x="641" y="805" width="21" height="8" fill="#eeedea"/>
<polyline points="641,813 641,805 662,805" fill="none" stroke="#c9c5c0" stroke-width="1"/>
<rect x="674" y="90" width="18" height="7" fill="#eeedea"/>
<polyline points="674,97 674,90 692,90" fill="none" stroke="#c9c5c0" stroke-width="1"/>
<rect x="676" y="146" width="14" height="10" fill="#eeedea"/>
<polyline points="676,156 676,146 690,146" fill="none" stroke="#c9c5c0" stroke-width="1"/>
<rect x="678" y="237" width="18" height="9" fill="#eeedea"/>
<polyline points="678,246 678,237 696,237" fill="none" stroke="#c9c5c0" stroke-width="1"/>
<rect x="680" y="300" width="23" height="9" fill="#eeedea"/>
<polyline points="680,309 680,300 703,300" fill="none" stroke="#c9c5c0" stroke-width="1"/>
<rect x="678" y="419" width="10" height="9" fill="#eeedea"/>
<polyline points="678,428 678,419 688,419" fill="none" stroke="#c9c5c0" stroke-width="1"/>
<rect x="675" y="450" width="23" height="9" fill="#eeedea"/>
<polyline points="675,459 675,450 698,450" fill="none" stroke="#c9c5c0" stroke-width="1"/>
<rect x="673" y="536" width="18" height="16" fill="#eeedea"/>
<polyline points="673,552 673,536 691,536" fill="none" stroke="#c9c5c0" stroke-width="1"/>
<rect x="678" y="597" width="15" height="10" fill="#eeedea"/>
<polyline points="678,607 678,597 693,597" fill="none" stroke="#c9c5c0" stroke-width="1"/>
<rect x="674" y="630" width="23" height="14" fill="#eeedea"/>
<polyline points="674,644 674,630 697,630" fill="none" stroke="#c9c5c0" stroke-width="1"/>
<rect x="676" y="718" width="13" height="6" fill="#eeedea"/>
<polyline points="676,724 676,718 689,718" fill="none" stroke="#c9c5c0" stroke-width="1"/>
<rect x="677" y="771" width="16" height="14" fill="#eeedea"/>
<polyline points="677,785 677,771 693,771" fill="none" stroke="#c9c5c0" stroke-width="1"/>
<rect x="675" y="807" width="24" height="14" fill="#eeedea"/>
<polyline points="675,821 675,807 699,807" fill="none" stroke="#c9c5c0" stroke-width="1"/>
</g>
<rect x="103" y="566" width="48" height="36" fill="#f6f6f4"/>
<rect x="103" y="493" width="42" height="27" fill="#f4f4f2"/>
<rect x="108" y="447" width="36" height="38" fill="#f4f4f2"/>
<polygon points="443,124 532,144 556,168 544,210 528,222 470,226 422,213 420,203 438,198 440,175" fill="#d8e49e"/>
<polygon points="156,240 178,231 186,248 165,258" fill="#d8e49e"/>
<polygon points="114,100 140,100 138,109 118,108" fill="#d8e49e"/>
<polygon points="112,451 140,451 140,481 112,481" fill="#d8e49e"/>
<polygon points="107,498 140,498 140,515 107,515" fill="#dfe6b4"/>
<polygon points="109,572 146,570 146,598 109,600" fill="#d8e49e"/>
<polygon points="384,348 394,345 394,376 388,376" fill="#d8e49e"/>
<polygon points="486,101 547,101 540,113 492,112" fill="#d8e49e"/>
<polygon points="586,101 622,101 622,128 598,126" fill="#d8e49e"/>
<polygon points="635,735 673,722 673,774 628,760" fill="#d8e49e"/>
<polygon points="590,765 615,752 632,790 587,790" fill="#d8e49e"/>
<polygon points="574,650 586,650 601,690 592,692" fill="#d8e49e"/>
<polygon points="297,257 320,256 320,265 298,265" fill="#d8e49e"/>
<polygon points="520,224 612,214 620,230 520,232" fill="#d8e49e"/>
<path d="M489,190 C490,185 497,184 500,188 C502,192 500,200 497,201 C494,196 488,196 489,190 Z" fill="#9fd4dc"/>
<g fill="none" stroke="#c0cc80" stroke-width="0.8"><rect x="505" y="189" width="14" height="8"/><rect x="528" y="195" width="8" height="14"/></g>
<polygon points="660,650 673,648 673,662 664,660" fill="#9fd4dc"/>
<g stroke="#f2f4e4" stroke-width="1.6" fill="none"><polyline points="440,150 545,170"/><polyline points="432,190 548,200"/><polyline points="470,130 452,222"/><polyline points="505,140 490,225"/><polyline points="112,451 140,481"/><polyline points="140,451 112,481"/><polyline points="166,235 176,253"/></g>
<polyline points="84,106 146,133" fill="none" stroke="#f3f2f0" stroke-width="11"/>
<polyline points="150,108 200,101" fill="none" stroke="#f3f2f0" stroke-width="6"/>
<polygon points="113,100 142,100 139,111 126,108" fill="#d8e49e"/>
<polyline points="180,116 208,102" fill="none" stroke="#fbfbfa" stroke-width="4"/>
<polyline points="139,329 220,340 404,320" fill="none" stroke="#c9c5c0" stroke-width="1"/>
<g fill="none" stroke="#cdc9c4" stroke-width="7.2" stroke-linejoin="round" transform="translate(0,-0.6)">
<polyline points="84,188 189,155"/>
<polyline points="197,122 400,115"/>
<polyline points="203,173 400,161"/>
<polyline points="360,101 334,208"/>
<polyline points="256,119 268,171"/>
<polyline points="373,101 363,160"/>
<polyline points="115,206 149,188 182,232"/>
<polyline points="86,232 128,313 140,335"/>
<polyline points="125,177 146,197"/>
<polyline points="213,265 278,246 391,246"/>
<polyline points="256,258 287,330 293,350"/>
<polyline points="332,232 352,330 356,343"/>
<polyline points="140,351 178,369 225,367 394,340"/>
<polyline points="84,384 137,348"/>
<polyline points="128,363 159,540 172,606 193,790"/>
<polyline points="284,351 310,450 331,600 363,790"/>
<polyline points="344,310 372,450 380,500"/>
<polyline points="84,450 394,393"/>
<polyline points="84,490 394,451"/>
<polyline points="84,462 100,553"/>
<polyline points="175,607 394,580"/>
<polyline points="84,677 394,618"/>
<polyline points="84,724 394,675 532,654 600,644"/>
<polyline points="84,768 394,722 539,700"/>
<polyline points="209,790 394,768 522,746"/>
<polyline points="118,618 168,790"/>
<polyline points="409,648 426,790"/>
<polyline points="529,648 539,700 526,790"/>
<polyline points="532,719 673,777"/>
<polyline points="584,648 602,696 675,738"/>
<polyline points="560,728 625,690"/>
<polyline points="612,752 635,718"/>
<polyline points="380,104 531,140 610,189 622,228"/>
<polyline points="450,101 413,210"/>
<polyline points="574,101 589,140 673,131"/>
<polyline points="560,208 673,186"/>
<polyline points="612,228 673,214"/>
<polyline points="537,652 544,705"/>
</g><g fill="none" stroke="#fbfbfa" stroke-width="5.8" stroke-linejoin="round" stroke-linecap="round">
<polyline points="84,188 189,155"/>
<polyline points="197,122 400,115"/>
<polyline points="203,173 400,161"/>
<polyline points="360,101 334,208"/>
<polyline points="256,119 268,171"/>
<polyline points="373,101 363,160"/>
<polyline points="115,206 149,188 182,232"/>
<polyline points="86,232 128,313 140,335"/>
<polyline points="125,177 146,197"/>
<polyline points="213,265 278,246 391,246"/>
<polyline points="256,258 287,330 293,350"/>
<polyline points="332,232 352,330 356,343"/>
<polyline points="140,351 178,369 225,367 394,340"/>
<polyline points="84,384 137,348"/>
<polyline points="128,363 159,540 172,606 193,790"/>
<polyline points="284,351 310,450 331,600 363,790"/>
<polyline points="344,310 372,450 380,500"/>
<polyline points="84,450 394,393"/>
<polyline points="84,490 394,451"/>
<polyline points="84,462 100,553"/>
<polyline points="175,607 394,580"/>
<polyline points="84,677 394,618"/>
<polyline points="84,724 394,675 532,654 600,644"/>
<polyline points="84,768 394,722 539,700"/>
<polyline points="209,790 394,768 522,746"/>
<polyline points="118,618 168,790"/>
<polyline points="409,648 426,790"/>
<polyline points="529,648 539,700 526,790"/>
<polyline points="532,719 673,777"/>
<polyline points="584,648 602,696 675,738"/>
<polyline points="560,728 625,690"/>
<polyline points="612,752 635,718"/>
<polyline points="380,104 531,140 610,189 622,228"/>
<polyline points="450,101 413,210"/>
<polyline points="574,101 589,140 673,131"/>
<polyline points="560,208 673,186"/>
<polyline points="612,228 673,214"/>
<polyline points="537,652 544,705"/>
</g><g fill="none" stroke="#6c68a0" stroke-width="0.65" stroke-linejoin="round" opacity="0.6">
<polyline points="84,188 189,155" transform="translate(-0.6,0.4)"/>
<polyline points="197,122 400,115" transform="translate(-0.6,0.4)"/>
<polyline points="203,173 400,161" transform="translate(-0.6,0.4)"/>
<polyline points="360,101 334,208" transform="translate(-0.6,0.4)"/>
<polyline points="256,119 268,171" transform="translate(-0.6,0.4)"/>
<polyline points="373,101 363,160" transform="translate(-0.6,0.4)"/>
<polyline points="115,206 149,188 182,232" transform="translate(-0.6,0.4)"/>
<polyline points="86,232 128,313 140,335" transform="translate(-0.6,0.4)"/>
<polyline points="125,177 146,197" transform="translate(-0.6,0.4)"/>
<polyline points="213,265 278,246 391,246" transform="translate(-0.6,0.4)"/>
<polyline points="256,258 287,330 293,350" transform="translate(-0.6,0.4)"/>
<polyline points="332,232 352,330 356,343" transform="translate(-0.6,0.4)"/>
<polyline points="140,351 178,369 225,367 394,340" transform="translate(-0.6,0.4)"/>
<polyline points="84,384 137,348" transform="translate(-0.6,0.4)"/>
<polyline points="128,363 159,540 172,606 193,790" transform="translate(-0.6,0.4)"/>
<polyline points="284,351 310,450 331,600 363,790" transform="translate(-0.6,0.4)"/>
<polyline points="344,310 372,450 380,500" transform="translate(-0.6,0.4)"/>
<polyline points="84,450 394,393" transform="translate(-0.6,0.4)"/>
<polyline points="84,490 394,451" transform="translate(-0.6,0.4)"/>
<polyline points="84,462 100,553" transform="translate(-0.6,0.4)"/>
<polyline points="175,607 394,580" transform="translate(-0.6,0.4)"/>
<polyline points="84,677 394,618" transform="translate(-0.6,0.4)"/>
<polyline points="84,724 394,675 532,654 600,644" transform="translate(-0.6,0.4)"/>
<polyline points="84,768 394,722 539,700" transform="translate(-0.6,0.4)"/>
<polyline points="209,790 394,768 522,746" transform="translate(-0.6,0.4)"/>
<polyline points="118,618 168,790" transform="translate(-0.6,0.4)"/>
<polyline points="409,648 426,790" transform="translate(-0.6,0.4)"/>
<polyline points="529,648 539,700 526,790" transform="translate(-0.6,0.4)"/>
<polyline points="532,719 673,777" transform="translate(-0.6,0.4)"/>
<polyline points="584,648 602,696 675,738" transform="translate(-0.6,0.4)"/>
<polyline points="560,728 625,690" transform="translate(-0.6,0.4)"/>
<polyline points="612,752 635,718" transform="translate(-0.6,0.4)"/>
<polyline points="380,104 531,140 610,189 622,228" transform="translate(-0.6,0.4)"/>
<polyline points="450,101 413,210" transform="translate(-0.6,0.4)"/>
<polyline points="574,101 589,140 673,131" transform="translate(-0.6,0.4)"/>
<polyline points="560,208 673,186" transform="translate(-0.6,0.4)"/>
<polyline points="612,228 673,214" transform="translate(-0.6,0.4)"/>
<polyline points="537,652 544,705" transform="translate(-0.6,0.4)"/>
</g>
<polygon points="346,625 404,617 420,766 360,773" fill="#f8f8f7" stroke="#8e8cb0" stroke-width="0.6"/>
<path d="M360,648 h7 v-5 h14 v5 h7 v14 h-7 v5 h-14 v-5 h-7z" fill="#e2e2e6" stroke="#9c9cb6" stroke-width="0.8"/>
<path d="M380,735 h7 v-5 h14 v5 h7 v14 h-7 v5 h-14 v-5 h-7z" fill="#e2e2e6" stroke="#9c9cb6" stroke-width="0.8"/>
<g fill="#dbe6a8"><ellipse cx="364" cy="736" rx="5" ry="9"/><ellipse cx="378" cy="724" rx="9" ry="4"/><ellipse cx="366" cy="757" rx="5" ry="9"/><ellipse cx="384" cy="766" rx="9" ry="4"/></g>
<polygon points="187,318 225,338 210,336" fill="#f4f4f6" stroke="#6f72b8" stroke-width="0.8"/>
<polygon points="134,352 187,372 186,380 140,378" fill="#f1f1f3" stroke="#8c8cc0" stroke-width="0.8"/>
<rect x="350" y="677" width="24" height="43" fill="#e3e0dc" stroke="#8e8cb0" stroke-width="0.8"/>
<polygon points="515,702 546,699 532,731" fill="#f0f0f4" stroke="#8c8cc0" stroke-width="0.8"/>
<polygon points="84,352 112,331 128,313 163,268 196,240 214,226 245,218 342,210 404,210 450,215 486,223 505,234 391,244 342,239 278,239 244,247 205,275 142,343 110,362 84,374" fill="#f7f7f5" stroke="#f7f7f5" stroke-width="6" stroke-linejoin="round"/>
<polygon points="84,352 112,331 128,313 163,268 196,240 214,226 245,218 342,210 404,210 450,215 486,223 505,234 391,244 342,239 278,239 244,247 205,275 142,343 110,362 84,374" fill="#9fd4dc"/>
<polyline points="189,96 206,210 212,240 226,343" fill="none" stroke="#e6d86e" stroke-width="11.0" stroke-linejoin="round"/>
<polyline points="189,96 206,210 212,240 226,343" fill="none" stroke="#f4e98a" stroke-width="9.5" stroke-linejoin="round"/>
<polyline points="189,96 206,210 212,240 226,343" fill="none" stroke="#8fd07a" stroke-width="0.6" stroke-linejoin="round" transform="translate(-1.5,0)"/>
<polyline points="189,96 206,210 212,240 226,343" fill="none" stroke="#8fd07a" stroke-width="0.6" stroke-linejoin="round" transform="translate(1.5,0)"/>
<polyline points="226,365 244,450 267,590 299,792" fill="none" stroke="#e6d86e" stroke-width="10.0" stroke-linejoin="round"/>
<polyline points="226,365 244,450 267,590 299,792" fill="none" stroke="#f4e98a" stroke-width="8.5" stroke-linejoin="round"/>
<polyline points="226,365 244,450 267,590 299,792" fill="none" stroke="#8fd07a" stroke-width="0.6" stroke-linejoin="round" transform="translate(-1.5,0)"/>
<polyline points="226,365 244,450 267,590 299,792" fill="none" stroke="#8fd07a" stroke-width="0.6" stroke-linejoin="round" transform="translate(1.5,0)"/>
<polyline points="84,619 170,606" fill="none" stroke="#e0cf62" stroke-width="11.5" stroke-linejoin="round"/>
<polyline points="84,619 170,606" fill="none" stroke="#f4e36e" stroke-width="10" stroke-linejoin="round"/>
<polyline points="159,540 172,610" fill="none" stroke="#e0cf62" stroke-width="10.0" stroke-linejoin="round"/>
<polyline points="159,540 172,610" fill="none" stroke="#f4e36e" stroke-width="8.5" stroke-linejoin="round"/>
<polyline points="84,549 220,526 394,501" fill="none" stroke="#d9c75c" stroke-width="27.5" stroke-linejoin="round"/>
<polyline points="84,549 220,526 394,501" fill="none" stroke="#f4e26c" stroke-width="26" stroke-linejoin="round"/>
<polyline points="84,549 220,526 394,501" fill="none" stroke="#f7f5e8" stroke-width="6" stroke-linejoin="round" transform="translate(0,-2.5)" stroke-dasharray="60,14"/>
<polyline points="84,549 220,526 394,501" fill="none" stroke="#a89a50" stroke-width="0.6" transform="translate(0,-8.5)"/>
<polyline points="84,549 220,526 394,501" fill="none" stroke="#a89a50" stroke-width="0.6" transform="translate(0,6.5)"/>
<ellipse cx="0" cy="0" rx="2.2" ry="14" fill="none" stroke="#7fb070" stroke-width="0.8" transform="translate(281 668) rotate(-10)"/>
<g font-family="Liberation Sans">
<text x="0" y="0" textLength="65" lengthAdjust="spacingAndGlyphs" text-anchor="middle" transform="translate(292.2 123.9) rotate(-2)" font-size="13" font-weight="normal" fill="#34333f" stroke="#34333f" stroke-width="0.5">Johannisstr.</text>
<text x="0" y="0" textLength="52" lengthAdjust="spacingAndGlyphs" text-anchor="middle" transform="translate(283.5 175.9) rotate(-6)" font-size="13" font-weight="normal" fill="#34333f" stroke="#34333f" stroke-width="0.5">Ziegelstr.</text>
<text x="0" y="0" textLength="66" lengthAdjust="spacingAndGlyphs" text-anchor="middle" transform="translate(354.3 146.0) rotate(-77)" font-size="13" font-weight="normal" fill="#34333f" stroke="#34333f" stroke-width="0.5">Tucholskystr.</text>
<text x="0" y="0" textLength="52" lengthAdjust="spacingAndGlyphs" text-anchor="middle" transform="translate(187.6 126.6) rotate(82)" font-size="13" font-weight="bold" fill="#3a3824" stroke="#3a3824" stroke-width="0.2">edrichstr.</text>
<text x="0" y="0" textLength="55" lengthAdjust="spacingAndGlyphs" text-anchor="middle" transform="translate(163.4 213.6) rotate(54.5)" font-size="13" font-weight="normal" fill="#34333f" stroke="#34333f" stroke-width="0.5">Am Zirkus</text>
<text x="0" y="0" textLength="60" lengthAdjust="spacingAndGlyphs" text-anchor="middle" transform="translate(102.1 274.5) rotate(63)" font-size="13" font-weight="normal" fill="#34333f" stroke="#34333f" stroke-width="0.5">Albrechtstr.</text>
<text x="0" y="0" textLength="92" lengthAdjust="spacingAndGlyphs" text-anchor="middle" transform="translate(272.1 253.4) rotate(-7.5)" font-size="13" font-weight="normal" fill="#34333f" stroke="#34333f" stroke-width="0.5">Am Weidendamm</text>
<text x="0" y="0" textLength="66" lengthAdjust="spacingAndGlyphs" text-anchor="middle" transform="translate(334.7 281.9) rotate(77.7)" font-size="13" font-weight="normal" fill="#34333f" stroke="#34333f" stroke-width="0.5">Geschwister-</text>
<text x="0" y="0" textLength="55" lengthAdjust="spacingAndGlyphs" text-anchor="middle" transform="translate(319.6 290.6) rotate(81.6)" font-size="13" font-weight="normal" fill="#34333f" stroke="#34333f" stroke-width="0.5">Scholl-Str.</text>
<text x="0" y="0" textLength="53" lengthAdjust="spacingAndGlyphs" text-anchor="middle" transform="translate(267.0 308.8) rotate(65.4)" font-size="13" font-weight="normal" fill="#34333f" stroke="#34333f" stroke-width="0.5">Planckstr.</text>
<text x="0" y="0" textLength="55" lengthAdjust="spacingAndGlyphs" text-anchor="middle" transform="translate(325.6 357.4) rotate(-8.4)" font-size="13" font-weight="normal" fill="#34333f" stroke="#34333f" stroke-width="0.5">Georgenstr.</text>
<text x="0" y="0" textLength="56" lengthAdjust="spacingAndGlyphs" text-anchor="end" transform="translate(133.1 363.9) rotate(-29)" font-size="13" font-weight="normal" fill="#34333f" stroke="#34333f" stroke-width="0.5">chstagufer</text>
<text x="0" y="0" textLength="28" lengthAdjust="spacingAndGlyphs" text-anchor="end" transform="translate(112.1 336.9) rotate(-28)" font-size="13" font-weight="normal" fill="#34333f" stroke="#34333f" stroke-width="0.5">amm</text>
<text x="0" y="0" textLength="121" lengthAdjust="spacingAndGlyphs" text-anchor="middle" transform="translate(136.6 446.2) rotate(80.5)" font-size="13" font-weight="normal" fill="#34333f" stroke="#34333f" stroke-width="0.5">Neustädtische Kirchstr.</text>
<text x="0" y="0" textLength="72" lengthAdjust="spacingAndGlyphs" text-anchor="middle" transform="translate(299.3 416.7) rotate(81.4)" font-size="13" font-weight="normal" fill="#34333f" stroke="#34333f" stroke-width="0.5">Charlottenstr.</text>
<text x="0" y="0" textLength="82" lengthAdjust="spacingAndGlyphs" text-anchor="middle" transform="translate(358.7 407.5) rotate(79.5)" font-size="13" font-weight="normal" fill="#34333f" stroke="#34333f" stroke-width="0.5">Universitätsstr.</text>
<text x="0" y="0" textLength="36" lengthAdjust="spacingAndGlyphs" text-anchor="end" transform="translate(122.6 452.4) rotate(-7.5)" font-size="13" font-weight="normal" fill="#34333f" stroke="#34333f" stroke-width="0.5">eenstr.</text>
<text x="0" y="0" textLength="60" lengthAdjust="spacingAndGlyphs" text-anchor="middle" transform="translate(86.6 495.6) rotate(82)" font-size="13" font-weight="normal" fill="#34333f" stroke="#34333f" stroke-width="0.5">Schadowstr.</text>
<text x="0" y="0" textLength="47" lengthAdjust="spacingAndGlyphs" text-anchor="middle" transform="translate(200.4 478.8) rotate(-10)" font-size="13" font-weight="normal" fill="#34333f" stroke="#34333f" stroke-width="0.5">Mittelstr.</text>
<text x="0" y="0" textLength="53" lengthAdjust="spacingAndGlyphs" text-anchor="middle" transform="translate(324.4 586.4) rotate(-8.1)" font-size="13" font-weight="normal" fill="#34333f" stroke="#34333f" stroke-width="0.5">Behrenstr.</text>
<text x="0" y="0" textLength="70" lengthAdjust="spacingAndGlyphs" text-anchor="middle" transform="translate(336.6 645.8) rotate(79.8)" font-size="13" font-weight="normal" fill="#34333f" stroke="#34333f" stroke-width="0.5">Charlottenstr.</text>
<text x="0" y="0" textLength="87" lengthAdjust="spacingAndGlyphs" text-anchor="middle" transform="translate(193.2 658.4) rotate(-8)" font-size="13" font-weight="normal" fill="#34333f" stroke="#34333f" stroke-width="0.5">Französische Str.</text>
<text x="0" y="0" textLength="48" lengthAdjust="spacingAndGlyphs" text-anchor="middle" transform="translate(138.4 707.0) rotate(73)" font-size="13" font-weight="normal" fill="#34333f" stroke="#34333f" stroke-width="0.5">Mauerstr.</text>
<text x="0" y="0" textLength="47" lengthAdjust="spacingAndGlyphs" text-anchor="middle" transform="translate(186.6 726.6) rotate(82.6)" font-size="13" font-weight="normal" fill="#34333f" stroke="#34333f" stroke-width="0.5">Glinkastr.</text>
<text x="0" y="0" textLength="46" lengthAdjust="spacingAndGlyphs" text-anchor="middle" transform="translate(223.5 702.6) rotate(-8.9)" font-size="13" font-weight="normal" fill="#34333f" stroke="#34333f" stroke-width="0.5">Jägerstr.</text>
<text x="0" y="0" textLength="55" lengthAdjust="spacingAndGlyphs" text-anchor="middle" transform="translate(232.2 748.4) rotate(-8.5)" font-size="13" font-weight="normal" fill="#34333f" stroke="#34333f" stroke-width="0.5">Taubenstr.</text>
<text x="0" y="0" textLength="45" lengthAdjust="spacingAndGlyphs" text-anchor="middle" transform="translate(467.5 664.4) rotate(-6.8)" font-size="13" font-weight="normal" fill="#34333f" stroke="#34333f" stroke-width="0.5">Jägerstr.</text>
<text x="0" y="0" textLength="54" lengthAdjust="spacingAndGlyphs" text-anchor="middle" transform="translate(454.2 712.4) rotate(-6.6)" font-size="13" font-weight="normal" fill="#34333f" stroke="#34333f" stroke-width="0.5">Taubenstr.</text>
<text x="0" y="0" textLength="56" lengthAdjust="spacingAndGlyphs" text-anchor="middle" transform="translate(439.7 764.0) rotate(-6.6)" font-size="13" font-weight="normal" fill="#34333f" stroke="#34333f" stroke-width="0.5">Mohrenstr.</text>
<text x="0" y="0" textLength="50" lengthAdjust="spacingAndGlyphs" text-anchor="middle" transform="translate(411.0 715.8) rotate(77.4)" font-size="13" font-weight="normal" fill="#34333f" stroke="#34333f" stroke-width="0.5">grafenstr.</text>
<text x="0" y="0" textLength="17" lengthAdjust="spacingAndGlyphs" text-anchor="middle" transform="translate(404.0 660.3) rotate(66)" font-size="13" font-weight="normal" fill="#34333f" stroke="#34333f" stroke-width="0.5">ark-</text>
<text x="0" y="0" textLength="52" lengthAdjust="spacingAndGlyphs" text-anchor="middle" transform="translate(518.4 762.4) rotate(77)" font-size="13" font-weight="normal" fill="#34333f" stroke="#34333f" stroke-width="0.5">Jerusalem</text>
<text x="0" y="0" textLength="15" lengthAdjust="spacingAndGlyphs" text-anchor="middle" transform="translate(528.1 658.8) rotate(80)" font-size="13" font-weight="normal" fill="#34333f" stroke="#34333f" stroke-width="0.5">str.</text>
<text x="0" y="0" textLength="35" lengthAdjust="spacingAndGlyphs" text-anchor="middle" transform="translate(595.9 700.8) rotate(-31.4)" font-size="13" font-weight="normal" fill="#34333f" stroke="#34333f" stroke-width="0.5">Kleine</text>
<text x="0" y="0" textLength="42" lengthAdjust="spacingAndGlyphs" text-anchor="middle" transform="translate(604.3 713.3) rotate(-31)" font-size="13" font-weight="normal" fill="#34333f" stroke="#34333f" stroke-width="0.5">Jägerstr.</text>
<text x="0" y="0" textLength="34" lengthAdjust="spacingAndGlyphs" text-anchor="middle" transform="translate(633.9 720.7) rotate(34)" font-size="13" font-weight="normal" fill="#34333f" stroke="#34333f" stroke-width="0.5">Kurstr.</text>
<text x="0" y="0" textLength="75" lengthAdjust="spacingAndGlyphs" text-anchor="middle" transform="translate(615.8 755.2) rotate(30.6)" font-size="13" font-weight="normal" fill="#34333f" stroke="#34333f" stroke-width="0.5">Niederwallstr.</text>
<text x="0" y="0" textLength="42" lengthAdjust="spacingAndGlyphs" text-anchor="middle" transform="translate(569.7 672.7) rotate(60)" font-size="13" font-weight="normal" fill="#34333f" stroke="#34333f" stroke-width="0.5">dt-Weg</text>
<text x="0" y="0" textLength="30" lengthAdjust="spacingAndGlyphs" text-anchor="middle" transform="translate(582.9 665.4) rotate(45)" font-size="13" font-weight="normal" fill="#34333f" stroke="#34333f" stroke-width="0.5">e-von-</text>
<text x="0" y="0" textLength="72" lengthAdjust="spacingAndGlyphs" text-anchor="end" transform="translate(471.8 126.6) rotate(16.4)" font-size="13" font-weight="normal" fill="#34333f" stroke="#34333f" stroke-width="0.5">nienburger Str.</text>
<text x="0" y="0" textLength="65" lengthAdjust="spacingAndGlyphs" text-anchor="middle" transform="translate(434.2 158.7) rotate(-72.5)" font-size="13" font-weight="normal" fill="#34333f" stroke="#34333f" stroke-width="0.5">Monbijoustr.</text>
<text x="0" y="0" textLength="78" lengthAdjust="spacingAndGlyphs" text-anchor="middle" transform="translate(563.3 167.8) rotate(31)" font-size="13" font-weight="normal" fill="#34333f" stroke="#34333f" stroke-width="0.5">Monbijouplatz</text>
<text x="0" y="0" textLength="12" lengthAdjust="spacingAndGlyphs" text-anchor="middle" transform="translate(358.6 786.6) rotate(82)" font-size="13" font-weight="normal" fill="#34333f" stroke="#34333f" stroke-width="0.5">Ch</text>
<text x="0" y="0" textLength="71" lengthAdjust="spacingAndGlyphs" text-anchor="middle" transform="translate(241.4 449.7) rotate(80.6)" font-size="13" font-weight="bold" fill="#3a3824" stroke="#3a3824" stroke-width="0.2">Friedrichstr.</text>
<text x="0" y="0" textLength="70" lengthAdjust="spacingAndGlyphs" text-anchor="middle" transform="translate(258.4 573.8) rotate(79.7)" font-size="13" font-weight="bold" fill="#3a3824" stroke="#3a3824" stroke-width="0.2">Friedrichstr.</text>
<text x="0" y="0" textLength="54" lengthAdjust="spacingAndGlyphs" text-anchor="middle" transform="translate(160.7 577.0) rotate(76.6)" font-size="13" font-weight="bold" fill="#3a3824" stroke="#3a3824" stroke-width="0.2">Glinkastr.</text>
<text x="0" y="0" textLength="97" lengthAdjust="spacingAndGlyphs" text-anchor="middle" transform="translate(146.8 534.0) rotate(-9.7)" font-size="13.5" font-weight="bold" fill="#3a3320" stroke="#3a3320" stroke-width="0.2">Unter den Linden</text>
<text x="0" y="0" textLength="96" lengthAdjust="spacingAndGlyphs" text-anchor="middle" transform="translate(313.7 520.5) rotate(-8.9)" font-size="13.5" font-weight="bold" fill="#3a3320" stroke="#3a3320" stroke-width="0.2">Unter den Linden</text>
<text x="138" y="373.5" text-anchor="start" textLength="47" lengthAdjust="spacingAndGlyphs" font-size="12.5" font-weight="bold" fill="#34333f" stroke="#34333f" stroke-width="0.55">Dorothea-</text>
<text x="140" y="385.5" text-anchor="start" textLength="44" lengthAdjust="spacingAndGlyphs" font-size="12.5" font-weight="bold" fill="#34333f" stroke="#34333f" stroke-width="0.55">Schlegel-</text>
<text x="150" y="397.5" text-anchor="start" textLength="24" lengthAdjust="spacingAndGlyphs" font-size="12.5" font-weight="bold" fill="#34333f" stroke="#34333f" stroke-width="0.55">Platz</text>
<text x="371.7" y="683.9" text-anchor="start" textLength="37" lengthAdjust="spacingAndGlyphs" font-size="12.5" font-weight="bold" fill="#34333f" stroke="#34333f" stroke-width="0.55">Gendar-</text>
<text x="379" y="697.5" text-anchor="start" textLength="25" lengthAdjust="spacingAndGlyphs" font-size="12.5" font-weight="bold" fill="#34333f" stroke="#34333f" stroke-width="0.55">men-</text>
<text x="376.3" y="709.3" text-anchor="start" textLength="30" lengthAdjust="spacingAndGlyphs" font-size="12.5" font-weight="bold" fill="#34333f" stroke="#34333f" stroke-width="0.55">markt</text>
<text x="506" y="713.1" text-anchor="start" textLength="56" lengthAdjust="spacingAndGlyphs" font-size="12.5" font-weight="bold" fill="#34333f" stroke="#34333f" stroke-width="0.55">Hausvogtei-</text>
<text x="506" y="725.9" text-anchor="start" textLength="24.5" lengthAdjust="spacingAndGlyphs" font-size="12.5" font-weight="bold" fill="#34333f" stroke="#34333f" stroke-width="0.55">platz</text>
<text x="656" y="164.9" text-anchor="start" textLength="17" lengthAdjust="spacingAndGlyphs" font-size="13.5" font-weight="bold" fill="#34333f" stroke="#34333f" stroke-width="0.55">Hac</text>
<text x="669" y="177.9" text-anchor="start" textLength="8" lengthAdjust="spacingAndGlyphs" font-size="13.5" font-weight="bold" fill="#34333f" stroke="#34333f" stroke-width="0.55">N</text>
<text x="454.3" y="160.7" text-anchor="start" textLength="58" lengthAdjust="spacingAndGlyphs" font-size="14" font-weight="bold" fill="#76962a" stroke="#76962a" stroke-width="0.55">Monbijou-</text>
<text x="499" y="174.5" text-anchor="start" textLength="27" lengthAdjust="spacingAndGlyphs" font-size="14" font-weight="bold" fill="#76962a" stroke="#76962a" stroke-width="0.55">park</text>
<text x="536" y="236" font-size="14" font-weight="bold" fill="#76962a" textLength="74" lengthAdjust="spacingAndGlyphs">James-Simon</text>
<text x="350" y="229.5" font-size="14" font-weight="bold" fill="#4a8f90" textLength="32" lengthAdjust="spacingAndGlyphs">Spree</text>
</g>
<g fill="none" stroke="#9b5596" stroke-width="5.2" stroke-linejoin="miter">
<polyline points="266.2,485.5 266.2,458 276,476 285.5,458 285.5,485.5"/>
<line x1="300" y1="457.5" x2="300" y2="485.5"/>
<line x1="309.8" y1="460.1" x2="326.5" y2="460.1"/><line x1="318.2" y1="460" x2="318.2" y2="485.5"/>
<line x1="332.6" y1="460.1" x2="349.2" y2="460.1"/><line x1="341" y1="460" x2="341" y2="485.5"/>
<polyline points="372,460.1 360.2,460.1 360.2,482.9 372,482.9"/><line x1="360" y1="471" x2="370.5" y2="471"/>
</g>
<rect x="378" y="489" width="16" height="16" fill="#f2d43a"/>
<text x="380" y="503.5" font-family="Liberation Sans" font-weight="bold" font-size="15" fill="#2a2a20">B</text>
</svg>
<div class="a" style="left:673px;top:93px;width:11px;height:695px;background:#424242"></div>
<div class="a" style="left:79px;top:788px;width:605px;height:12px;background:#424242"></div>
<!-- right panel -->
<div class="a" style="left:684px;top:73px;width:3px;height:727px;background:#3a3a3a"></div>
<div class="a" style="left:687px;top:82px;width:303px;height:19px;background:#3f3f3f"></div>
<div class="a" style="left:687px;top:101px;width:303px;height:339px;background:#535353"></div>
<div class="a" style="left:687px;top:440px;width:303px;height:20px;background:#434343"></div>
<div class="a" style="left:687px;top:460px;width:303px;height:340px;background:#535353"></div>
<!-- floating panel -->

<div class="a" style="left:0px;top:16px;width:990px;height:6px;background:#505050;"></div>
<div class="a" style="left:0px;top:22px;width:990px;height:1px;background:#464646;"></div>
<svg class="a" style="left:6px;top:6px;" width="11" height="10" viewBox="0 0 11 10"><rect width="11" height="10" rx="1.5" fill="#330000"/><text x="5.5" y="8" font-family="Liberation Sans" font-weight="bold" font-size="7" fill="#ff9a00" text-anchor="middle">Ai</text></svg>
<svg class="a" style="left:27px;top:5px;" width="13" height="11" viewBox="0 0 13 11"><path d="M6.5,0 L13,6 L11,6 L11,11 L8,11 L8,7.5 L5,7.5 L5,11 L2,11 L2,6 L0,6 Z" fill="#e4e4e4"/></svg>
<div class="a" style="left:49px;top:3px;width:1px;height:15px;background:#464646;"></div>
<div class="t" style="left:61.0px;top:7.1px;font-size:8.4px;color:#d4d4d4;font-weight:normal;">Datei</div>
<div class="t" style="left:89.6px;top:7.1px;font-size:8.4px;color:#d4d4d4;font-weight:normal;">Bearbeiten</div>
<div class="t" style="left:139.0px;top:7.1px;font-size:8.4px;color:#d4d4d4;font-weight:normal;">Objekt</div>
<div class="t" style="left:174.0px;top:7.1px;font-size:8.4px;color:#d4d4d4;font-weight:normal;">Schrift</div>
<div class="t" style="left:208.5px;top:7.1px;font-size:8.4px;color:#d4d4d4;font-weight:normal;">Auswahl</div>
<div class="t" style="left:249.5px;top:7.1px;font-size:8.4px;color:#d4d4d4;font-weight:normal;">Effekt</div>
<div class="t" style="left:281.5px;top:7.1px;font-size:8.4px;color:#d4d4d4;font-weight:normal;">Ansicht</div>
<div class="t" style="left:320.0px;top:7.1px;font-size:8.4px;color:#d4d4d4;font-weight:normal;">Fenster</div>
<div class="t" style="left:357.0px;top:7.1px;font-size:8.4px;color:#d4d4d4;font-weight:normal;">Hilfe</div>
<div class="a" style="left:385px;top:3px;width:1px;height:15px;background:#464646;"></div>
<svg class="a" style="left:393px;top:5px;" width="12" height="9" viewBox="0 0 12 9"><rect x="0" y="0" width="5.5" height="9" fill="#d8d8d8"/><rect x="6.5" y="0" width="5.5" height="4" fill="#d8d8d8"/><rect x="6.5" y="5" width="5.5" height="4" fill="#d8d8d8"/></svg>
<svg class="a" style="left:409px;top:7px;" width="8" height="6" viewBox="0 0 8 6"><path d="M1,1.5 L4,4.5 L7,1.5" fill="none" stroke="#cfcfcf" stroke-width="1.3"/></svg>
<div class="a" style="left:770px;top:0px;width:1px;height:22px;background:#4a4a4a;"></div>
<svg class="a" style="left:785px;top:5px;" width="13" height="11" viewBox="0 0 13 11"><rect x="0.7" y="0.7" width="11.6" height="9.6" fill="none" stroke="#cfcfcf" stroke-width="1.3"/><rect x="1" y="1" width="3" height="9" fill="#cfcfcf"/></svg>
<div class="a" style="left:804px;top:3px;width:119px;height:14px;background:#484848;border-radius:1px"></div>
<svg class="a" style="left:807px;top:5px;" width="18" height="10" viewBox="0 0 18 10"><circle cx="4.5" cy="4.5" r="3.2" fill="none" stroke="#d8d8d8" stroke-width="1.3"/><path d="M7,7 L9.5,9.5" stroke="#d8d8d8" stroke-width="1.4"/><path d="M11,4 L13,6 L15,4" fill="none" stroke="#d8d8d8" stroke-width="1.1"/></svg>
<div class="t" style="left:821.5px;top:7.4px;font-size:7.8px;color:#8a8a8a;font-weight:normal;">Adobe-Hilfe durchsuchen</div>
<div class="a" style="left:927px;top:0px;width:1px;height:22px;background:#4a4a4a;"></div>
<div class="a" style="left:928px;top:0px;width:62px;height:13px;background:#515151;"></div>
<svg class="a" style="left:934px;top:7px;" width="9" height="2" viewBox="0 0 9 2"><rect width="9" height="1.8" fill="#d4d4d4"/></svg>
<svg class="a" style="left:953.5px;top:3.5px;" width="9" height="6" viewBox="0 0 9 6"><rect x="0.9" y="0.9" width="7" height="4.4" fill="none" stroke="#d4d4d4" stroke-width="1.8"/></svg>
<svg class="a" style="left:973.5px;top:2.5px;" width="8" height="7" viewBox="0 0 8 7"><path d="M0.8,0.8 L6.5,6.2 M6.5,0.8 L0.8,6.2" stroke="#d4d4d4" stroke-width="1.5"/></svg>
<div class="a" style="left:2px;top:25px;width:1px;height:18px;background:#454545;"></div>
<div class="a" style="left:5px;top:25px;width:1px;height:18px;background:#454545;"></div>
<div class="t" style="left:8.8px;top:32.2px;font-size:7.1px;color:#d0d0d0;font-weight:normal;">Gemischte Objekte</div>
<svg class="a" style="left:73px;top:28.5px;" width="14" height="13" viewBox="0 0 14 13"><rect x="0.8" y="0.8" width="12.4" height="11.4" fill="none" stroke="#e0e0e0" stroke-width="1.6"/><text x="7" y="10.3" font-family="Liberation Sans" font-size="10" fill="#e0e0e0" text-anchor="middle">?</text></svg>
<div class="a" style="left:88px;top:28px;width:10px;height:14px;background:#4a4a4a;"></div>
<svg class="a" style="left:89px;top:32px;" width="8" height="6" viewBox="0 0 8 6"><path d="M1,1.5 L4,4.5 L7,1.5" fill="none" stroke="#cfcfcf" stroke-width="1.3"/></svg>
<svg class="a" style="left:103.5px;top:28.5px;" width="14" height="13" viewBox="0 0 14 13"><rect x="0.8" y="0.8" width="12.4" height="11.4" fill="none" stroke="#e0e0e0" stroke-width="1.6"/><text x="7" y="10.3" font-family="Liberation Sans" font-size="10" fill="#e0e0e0" text-anchor="middle">?</text></svg>
<div class="a" style="left:118.5px;top:28px;width:10px;height:14px;background:#4a4a4a;"></div>
<svg class="a" style="left:120px;top:32px;" width="8" height="6" viewBox="0 0 8 6"><path d="M1,1.5 L4,4.5 L7,1.5" fill="none" stroke="#cfcfcf" stroke-width="1.3"/></svg>
<div class="t" style="left:139.0px;top:31.9px;font-size:7.4px;color:#d6d6d6;font-weight:normal;">Kontur:</div>
<div class="a" style="left:139px;top:40px;width:22.5px;height:1px;background:#9a9a9a;opacity:.6"></div>
<svg class="a" style="left:168px;top:28px;" width="8" height="14" viewBox="0 0 8 14"><path d="M1,4 L4,1 L7,4 M1,10 L4,13 L7,10" fill="none" stroke="#cfcfcf" stroke-width="1.1"/></svg>
<div class="a" style="left:180px;top:28px;width:30px;height:14px;background:#474747;"></div>
<div class="a" style="left:210px;top:28px;width:12px;height:14px;background:#474747;"></div>
<svg class="a" style="left:212px;top:32px;" width="8" height="6" viewBox="0 0 8 6"><path d="M1,1.5 L4,4.5 L7,1.5" fill="none" stroke="#cfcfcf" stroke-width="1.3"/></svg>
<div class="a" style="left:227px;top:27px;width:63px;height:15px;background:#7a7a7a;"></div>
<svg class="a" style="left:293.5px;top:32px;" width="8" height="6" viewBox="0 0 8 6"><path d="M1,1.5 L4,4.5 L7,1.5" fill="none" stroke="#6c6c6c" stroke-width="1.3"/></svg>
<div class="a" style="left:307px;top:28px;width:61px;height:14px;background:#e8e8e8;"></div>
<div class="t" style="left:312.0px;top:32.0px;font-size:7.4px;color:#303030;font-weight:normal;">Gemischt</div>
<div class="a" style="left:368px;top:28px;width:12px;height:14px;background:#474747;"></div>
<svg class="a" style="left:370px;top:32px;" width="8" height="6" viewBox="0 0 8 6"><path d="M1,1.5 L4,4.5 L7,1.5" fill="none" stroke="#cfcfcf" stroke-width="1.3"/></svg>
<div class="t" style="left:386.5px;top:31.9px;font-size:7.4px;color:#d6d6d6;font-weight:normal;">Deckkraft:</div>
<div class="a" style="left:386.5px;top:40px;width:31px;height:1px;background:#9a9a9a;opacity:.6"></div>
<div class="a" style="left:423px;top:28px;width:34px;height:14px;background:#474747;"></div>
<div class="t" style="left:425.5px;top:31.9px;font-size:7.6px;color:#e0e0e0;font-weight:normal;">100%</div>
<svg class="a" style="left:460px;top:31px;" width="6" height="8" viewBox="0 0 6 8"><path d="M1.5,1 L4.5,4 L1.5,7" fill="none" stroke="#d8d8d8" stroke-width="1.3"/></svg>
<div class="t" style="left:474.5px;top:31.9px;font-size:7.4px;color:#d0d0d0;font-weight:normal;">Stil:</div>
<div class="a" style="left:491.5px;top:27.5px;width:14px;height:14.5px;background:#e6e6e6;"></div>
<div class="a" style="left:506px;top:28px;width:11px;height:14px;background:#3e3e3e;"></div>
<svg class="a" style="left:507.5px;top:32px;" width="8" height="6" viewBox="0 0 8 6"><path d="M1,1.5 L4,4.5 L7,1.5" fill="none" stroke="#cfcfcf" stroke-width="1.3"/></svg>
<svg class="a" style="left:530px;top:29px;" width="12" height="12" viewBox="0 0 12 12"><circle cx="6" cy="6" r="5.5" fill="#9a9a9a"/><path d="M2,4 C4,2 6,5 8,3 C9,6 6,8 4,9 Z" fill="#d8d8d8"/><circle cx="6" cy="6" r="5.5" fill="none" stroke="#d0d0d0" stroke-width="0.8"/></svg>
<svg class="a" style="left:556px;top:29px;" width="12" height="12" viewBox="0 0 12 12"><rect x="1" y="1" width="10" height="10" fill="none" stroke="#cfcfcf" stroke-width="1" stroke-dasharray="1.5,1.5"/><rect x="4.5" y="4.5" width="3" height="3" fill="#cfcfcf"/></svg>
<svg class="a" style="left:568px;top:33px;" width="8" height="6" viewBox="0 0 8 6"><path d="M1,1.5 L4,4.5 L7,1.5" fill="none" stroke="#cfcfcf" stroke-width="1.3"/></svg>
<svg class="a" style="left:580px;top:28px;" width="12" height="14" viewBox="0 0 12 14"><rect x="1" y="0" width="1" height="14" fill="#bdbdbd"/><rect x="2" y="3" width="7" height="3" fill="#cfcfcf"/><rect x="2" y="8" width="9" height="3" fill="#cfcfcf"/></svg>
<svg class="a" style="left:603px;top:28px;" width="12" height="14" viewBox="0 0 12 14"><rect x="6" y="0" width="1" height="14" fill="#bdbdbd"/><rect x="2" y="3" width="7" height="3" fill="#cfcfcf"/><rect x="2" y="8" width="9" height="3" fill="#cfcfcf"/></svg>
<svg class="a" style="left:623px;top:28px;" width="12" height="14" viewBox="0 0 12 14"><rect x="10" y="0" width="1" height="14" fill="#bdbdbd"/><rect x="2" y="3" width="7" height="3" fill="#cfcfcf"/><rect x="2" y="8" width="9" height="3" fill="#cfcfcf"/></svg>
<svg class="a" style="left:643px;top:28px;" width="12" height="14" viewBox="0 0 12 14"><rect x="0" y="1" width="12" height="1" fill="#bdbdbd"/><rect x="2" y="2" width="3" height="9" fill="#cfcfcf"/><rect x="7" y="2" width="3" height="6" fill="#cfcfcf"/></svg>
<svg class="a" style="left:662px;top:28px;" width="12" height="14" viewBox="0 0 12 14"><rect x="0" y="7" width="12" height="1" fill="#bdbdbd"/><rect x="2" y="2" width="3" height="9" fill="#cfcfcf"/><rect x="7" y="2" width="3" height="6" fill="#cfcfcf"/></svg>
<svg class="a" style="left:681px;top:28px;" width="12" height="14" viewBox="0 0 12 14"><rect x="0" y="12" width="12" height="1" fill="#bdbdbd"/><rect x="2" y="2" width="3" height="9" fill="#cfcfcf"/><rect x="7" y="2" width="3" height="6" fill="#cfcfcf"/></svg>
<svg class="a" style="left:701px;top:28px;" width="12" height="14" viewBox="0 0 12 14"><rect x="0" y="2" width="12" height="1" fill="#bdbdbd"/><rect x="0" y="11" width="12" height="1" fill="#bdbdbd"/><rect x="2" y="4" width="8" height="2.5" fill="#cfcfcf"/><rect x="3" y="8" width="6" height="2.5" fill="#cfcfcf"/></svg>
<svg class="a" style="left:722px;top:28px;" width="12" height="14" viewBox="0 0 12 14"><rect x="0" y="2" width="12" height="1" fill="#bdbdbd"/><rect x="0" y="11" width="12" height="1" fill="#bdbdbd"/><rect x="2" y="4" width="8" height="2.5" fill="#cfcfcf"/><rect x="3" y="8" width="6" height="2.5" fill="#cfcfcf"/></svg>
<svg class="a" style="left:740px;top:28px;" width="12" height="14" viewBox="0 0 12 14"><rect x="0" y="2" width="12" height="1" fill="#bdbdbd"/><rect x="0" y="11" width="12" height="1" fill="#bdbdbd"/><rect x="2" y="4" width="8" height="2.5" fill="#cfcfcf"/><rect x="3" y="8" width="6" height="2.5" fill="#cfcfcf"/></svg>
<svg class="a" style="left:760px;top:28px;" width="12" height="14" viewBox="0 0 12 14"><rect x="1" y="1" width="1" height="12" fill="#bdbdbd"/><rect x="10" y="1" width="1" height="12" fill="#bdbdbd"/><rect x="3" y="3" width="2.5" height="8" fill="#cfcfcf"/><rect x="6.5" y="4" width="2.5" height="6" fill="#cfcfcf"/></svg>
<svg class="a" style="left:779px;top:28px;" width="12" height="14" viewBox="0 0 12 14"><rect x="1" y="1" width="1" height="12" fill="#bdbdbd"/><rect x="10" y="1" width="1" height="12" fill="#bdbdbd"/><rect x="3" y="3" width="2.5" height="8" fill="#cfcfcf"/><rect x="6.5" y="4" width="2.5" height="6" fill="#cfcfcf"/></svg>
<svg class="a" style="left:797px;top:28px;" width="12" height="14" viewBox="0 0 12 14"><rect x="1" y="1" width="1" height="12" fill="#bdbdbd"/><rect x="10" y="1" width="1" height="12" fill="#bdbdbd"/><rect x="3" y="3" width="2.5" height="8" fill="#cfcfcf"/><rect x="6.5" y="4" width="2.5" height="6" fill="#cfcfcf"/></svg>
<div class="t" style="left:822.0px;top:31.8px;font-size:7.6px;color:#dedede;font-weight:normal;">Transformieren</div>
<div class="a" style="left:822px;top:40px;width:46.5px;height:1px;background:#aaaaaa;opacity:.6"></div>
<svg class="a" style="left:874px;top:28px;" width="14" height="14" viewBox="0 0 14 14"><rect x="1" y="2" width="9" height="9" fill="none" stroke="#cfcfcf" stroke-width="1" stroke-dasharray="2,1"/><path d="M6,6 L13,9 L10,10 L12,13 L11,13.5 L9,11 L7,13 Z" fill="#cfcfcf"/></svg>
<svg class="a" style="left:890px;top:32px;" width="8" height="6" viewBox="0 0 8 6"><path d="M1,1.5 L4,4.5 L7,1.5" fill="none" stroke="#cfcfcf" stroke-width="1.3"/></svg>
<svg class="a" style="left:914px;top:29px;" width="12" height="12" viewBox="0 0 12 12"><rect x="1" y="1" width="4" height="4" fill="#cfcfcf"/><rect x="7" y="1" width="4" height="4" fill="#cfcfcf"/><rect x="1" y="7" width="4" height="4" fill="#cfcfcf"/><rect x="7" y="7" width="4" height="4" fill="#cfcfcf"/></svg>
<svg class="a" style="left:932px;top:28px;" width="13" height="14" viewBox="0 0 13 14"><rect x="1" y="1" width="3" height="3" fill="#cfcfcf"/><rect x="1" y="6" width="3" height="3" fill="#cfcfcf"/><rect x="1" y="11" width="3" height="3" fill="#cfcfcf"/><path d="M6,4 h3 a3,3 0 0 1 0,6 h-3" fill="none" stroke="#cfcfcf" stroke-width="1.3"/></svg>
<svg class="a" style="left:947.5px;top:32px;" width="8" height="6" viewBox="0 0 8 6"><path d="M1,1.5 L4,4.5 L7,1.5" fill="none" stroke="#6c6c6c" stroke-width="1.3"/></svg>
<svg class="a" style="left:966px;top:29px;" width="12" height="11" viewBox="0 0 12 11"><rect x="0" y="1" width="2" height="2" fill="#cfcfcf"/><rect x="3" y="1" width="9" height="1.4" fill="#cfcfcf"/><rect x="3" y="5" width="9" height="1.4" fill="#cfcfcf"/><rect x="3" y="9" width="9" height="1.4" fill="#cfcfcf"/><rect x="0" y="5" width="2" height="2" fill="#cfcfcf"/><rect x="0" y="9" width="2" height="2" fill="#cfcfcf"/></svg>
<div class="a" style="left:0px;top:45px;width:990px;height:1px;background:#3f3f3f;"></div>
<div class="a" style="left:2px;top:49px;width:1px;height:21px;background:#474747;"></div>
<div class="a" style="left:5px;top:49px;width:1px;height:21px;background:#474747;"></div>
<svg class="a" style="left:11.4px;top:49px" width="48.6" height="9" viewBox="0 0 48.6 9"><text x="0" y="7" font-family="Liberation Serif" font-weight="bold" font-size="7.6" fill="#cdcdcd" textLength="46.6" lengthAdjust="spacingAndGlyphs">Import/Export</text></svg>
<svg class="a" style="left:175.5px;top:49px" width="35" height="9" viewBox="0 0 35 9"><text x="0" y="7" font-family="Liberation Serif" font-weight="bold" font-size="7.6" fill="#cdcdcd" textLength="33" lengthAdjust="spacingAndGlyphs">Properties</text></svg>
<svg class="a" style="left:281px;top:49px" width="46" height="9" viewBox="0 0 46 9"><text x="0" y="7" font-family="Liberation Serif" font-weight="bold" font-size="7.6" fill="#cdcdcd" textLength="44" lengthAdjust="spacingAndGlyphs">Data Creation</text></svg>
<svg class="a" style="left:386px;top:49px" width="50" height="9" viewBox="0 0 50 9"><text x="0" y="7" font-family="Liberation Serif" font-weight="bold" font-size="7.6" fill="#cdcdcd" textLength="48" lengthAdjust="spacingAndGlyphs">Geoprocessing</text></svg>
<svg class="a" style="left:550.5px;top:49px" width="44.5" height="9" viewBox="0 0 44.5 9"><text x="0" y="7" font-family="Liberation Serif" font-weight="bold" font-size="7.6" fill="#cdcdcd" textLength="42.5" lengthAdjust="spacingAndGlyphs">Organization</text></svg>
<svg class="a" style="left:616.7px;top:49px" width="51.3" height="9" viewBox="0 0 51.3 9"><text x="0" y="7" font-family="Liberation Serif" font-weight="bold" font-size="7.6" fill="#cdcdcd" textLength="49.3" lengthAdjust="spacingAndGlyphs">Thematic Tools</text></svg>
<svg class="a" style="left:702px;top:49px" width="22" height="9" viewBox="0 0 22 9"><text x="0" y="7" font-family="Liberation Serif" font-weight="bold" font-size="7.6" fill="#cdcdcd" textLength="20" lengthAdjust="spacingAndGlyphs">Labels</text></svg>
<svg class="a" style="left:787.5px;top:49px" width="43.5" height="9" viewBox="0 0 43.5 9"><text x="0" y="7" font-family="Liberation Serif" font-weight="bold" font-size="7.6" fill="#cdcdcd" textLength="41.5" lengthAdjust="spacingAndGlyphs">Layout Tools</text></svg>
<svg class="a" style="left:15.5px;top:59px;" width="13" height="12" viewBox="0 0 13 12"><rect x="1" y="1" width="11" height="10" fill="none" stroke="#cfcfcf" stroke-width="1.2"/><path d="M6.5,3 v6 M3.5,6 h6" stroke="#e8e8e8" stroke-width="2"/></svg>
<svg class="a" style="left:33.9px;top:59px;" width="13" height="12" viewBox="0 0 13 12"><rect x="0.5" y="0.5" width="9" height="8" fill="none" stroke="#bfbfbf" stroke-width="1"/><rect x="3" y="3" width="9.5" height="8.5" fill="#535353" stroke="#cfcfcf" stroke-width="1.1"/><path d="M7.7,5 v5 M5.2,7.5 h5" stroke="#e0e0e0" stroke-width="1.5"/></svg>
<svg class="a" style="left:53.5px;top:59px;" width="13" height="12" viewBox="0 0 13 12"><rect x="0.5" y="1" width="7" height="9" fill="none" stroke="#bfbfbf"/><rect x="5" y="2" width="7.5" height="9.5" fill="none" stroke="#cfcfcf"/><path d="M3,6.5 h7 M8,4 l2.5,2.5 l-2.5,2.5" stroke="#e8e8e8" stroke-width="1.6" fill="none"/></svg>
<svg class="a" style="left:73.8px;top:59px;" width="13" height="12" viewBox="0 0 13 12"><rect x="1" y="1" width="11" height="10" fill="none" stroke="#bfbfbf" stroke-width="1.1"/><circle cx="6.5" cy="6" r="2.8" fill="none" stroke="#cfcfcf"/><path d="M4.8,6 h3.4" stroke="#cfcfcf"/></svg>
<svg class="a" style="left:94.0px;top:59px;" width="13" height="12" viewBox="0 0 13 12"><path d="M1,7 v4.5 h11 v-4.5" fill="none" stroke="#cfcfcf" stroke-width="1.2"/><path d="M6.5,9 v-8 M3.5,4 l3,-3 l3,3" fill="none" stroke="#e4e4e4" stroke-width="1.8"/></svg>
<svg class="a" style="left:114.2px;top:59px;" width="13" height="12" viewBox="0 0 13 12"><rect x="3" y="0.5" width="7" height="11" fill="none" stroke="#cfcfcf" stroke-width="1.2"/><path d="M6.5,3 v4" stroke="#cfcfcf" stroke-width="1.5"/></svg>
<svg class="a" style="left:132.5px;top:59px;" width="13" height="12" viewBox="0 0 13 12"><rect x="0.5" y="1.5" width="12" height="6" rx="1" fill="#cfcfcf"/><text x="6.5" y="6.6" font-size="5" font-family="Liberation Sans" font-weight="bold" fill="#535353" text-anchor="middle">WEB</text><path d="M4,8 l2.5,3.5 l2.5,-3.5" fill="#cfcfcf"/></svg>
<svg class="a" style="left:152.5px;top:59px;" width="13" height="12" viewBox="0 0 13 12"><path d="M8,0.5 L2,7 h4.5 L4,11.5 L11,5 h-4.5 Z" fill="none" stroke="#cfcfcf" stroke-width="1.1"/></svg>
<svg class="a" style="left:178.5px;top:59px;" width="13" height="12" viewBox="0 0 13 12"><circle cx="6.5" cy="6" r="5.5" fill="#bdbdbd"/><path d="M3,3 C5,2 6,4 5,6 C4,8 3,6 2,6 Z M7,2 C9,3 11,5 10,8 C8,9 8,7 7,5 Z" fill="#535353"/></svg>
<div class="a" style="left:195px;top:57px;width:18px;height:15px;background:#383838;"></div>
<svg class="a" style="left:198.0px;top:59px;" width="13" height="12" viewBox="0 0 13 12"><rect x="0.5" y="0.5" width="12" height="11" fill="#6a6a6a" stroke="#cfcfcf"/><path d="M0.5,3.5 h12 M0.5,6.5 h12 M0.5,9 h12 M4.5,0.5 v11 M8.5,0.5 v11" stroke="#cfcfcf" stroke-width="0.7"/></svg>
<svg class="a" style="left:217.5px;top:59px;" width="13" height="12" viewBox="0 0 13 12"><rect x="0.5" y="0.5" width="12" height="11" fill="none" stroke="#cfcfcf"/><path d="M0.5,3 h12" stroke="#cfcfcf"/><rect x="2.5" y="5" width="2" height="2" fill="#cfcfcf"/><rect x="2.5" y="8" width="2" height="2" fill="#cfcfcf"/><path d="M6,6 h5 M6,9 h5" stroke="#cfcfcf"/></svg>
<svg class="a" style="left:237.2px;top:59px;" width="13" height="12" viewBox="0 0 13 12"><rect x="0.5" y="0.5" width="12" height="11" fill="none" stroke="#cfcfcf"/><path d="M0.5,3 h12" stroke="#cfcfcf"/><rect x="2.5" y="5" width="3.5" height="4" fill="#cfcfcf"/><rect x="7" y="5" width="3.5" height="4" fill="#cfcfcf"/></svg>
<svg class="a" style="left:256.1px;top:59px;" width="13" height="12" viewBox="0 0 13 12"><rect x="0.5" y="0.5" width="12" height="11" fill="none" stroke="#cfcfcf"/><path d="M0.5,3 h12 M3,5 h7 M3,7.5 h7 M3,10 h7 M6.5,3 v8" stroke="#cfcfcf" stroke-width="0.8"/></svg>
<svg class="a" style="left:282.5px;top:59px;" width="13" height="12" viewBox="0 0 13 12"><path d="M4,1 v6 M1,4 h6" stroke="#e0e0e0" stroke-width="2"/><path d="M3,11 L7,8 L10,10 L12,6" fill="none" stroke="#cfcfcf" stroke-dasharray="1,1"/><rect x="9" y="2" width="3" height="2.5" fill="none" stroke="#cfcfcf" stroke-width="0.8"/></svg>
<svg class="a" style="left:302.5px;top:59px;" width="13" height="12" viewBox="0 0 13 12"><path d="M4,1 v6 M1,4 h6" stroke="#e0e0e0" stroke-width="2"/><rect x="8" y="5" width="2" height="2" fill="none" stroke="#cfcfcf" stroke-width="0.8"/><rect x="5" y="9" width="2" height="2" fill="none" stroke="#cfcfcf" stroke-width="0.8"/><rect x="10" y="9" width="2" height="2" fill="none" stroke="#cfcfcf" stroke-width="0.8"/></svg>
<svg class="a" style="left:323.5px;top:59px;" width="13" height="12" viewBox="0 0 13 12"><path d="M3.5,3 v6 M0.5,6 h6" stroke="#e0e0e0" stroke-width="2"/><path d="M9.5,12 C7,8 6.5,6.5 6.5,5 A3,3 0 0 1 12.5,5 C12.5,6.5 12,8 9.5,12 Z" fill="#cfcfcf"/><circle cx="9.5" cy="5" r="1.2" fill="#535353"/></svg>
<svg class="a" style="left:343.5px;top:59px;" width="13" height="12" viewBox="0 0 13 12"><path d="M3.5,1 v6 M0.5,4 h6" stroke="#e0e0e0" stroke-width="2"/><rect x="6.5" y="1.5" width="6" height="10" fill="none" stroke="#cfcfcf"/><path d="M6.5,4.5 h6 M6.5,7 h6 M6.5,9.5 h6 M9.5,1.5 v10" stroke="#cfcfcf" stroke-width="0.7"/></svg>
<svg class="a" style="left:362.2px;top:59px;" width="13" height="12" viewBox="0 0 13 12"><rect x="1" y="1" width="2.5" height="2.5" fill="#cfcfcf"/><rect x="9" y="1" width="2.5" height="2.5" fill="#cfcfcf"/><rect x="1" y="5" width="2.5" height="2.5" fill="#cfcfcf"/><rect x="9" y="5" width="2.5" height="2.5" fill="#cfcfcf"/><path d="M2,10 h9 M9,8.5 l2,1.5 l-2,1.5" fill="none" stroke="#cfcfcf"/></svg>
<svg class="a" style="left:389.5px;top:59px;" width="13" height="12" viewBox="0 0 13 12"><path d="M1.5,3 L8,5 L11,2" fill="none" stroke="#bdbdbd"/><circle cx="1.5" cy="3" r="1.3" fill="none" stroke="#cfcfcf"/><circle cx="8" cy="5" r="1.3" fill="none" stroke="#cfcfcf"/><circle cx="11" cy="2" r="1.3" fill="none" stroke="#cfcfcf"/><path d="M9,9 h3 M12,10 h0" stroke="#cfcfcf" stroke-width="0.8"/></svg>
<svg class="a" style="left:408.5px;top:59px;" width="13" height="12" viewBox="0 0 13 12"><path d="M1.5,10.5 L11,1.5" fill="none" stroke="#cfcfcf"/><rect x="0" y="9" width="3" height="3" fill="none" stroke="#cfcfcf" stroke-width="0.8"/><rect x="9.5" y="0" width="3" height="3" fill="none" stroke="#cfcfcf" stroke-width="0.8"/><path d="M2,2 h5" stroke="#cfcfcf" stroke-width="0.8"/></svg>
<svg class="a" style="left:429.1px;top:59px;" width="13" height="12" viewBox="0 0 13 12"><circle cx="4.5" cy="6" r="4.2" fill="none" stroke="#d8d8d8" stroke-width="1.2"/><circle cx="8.5" cy="6" r="4.2" fill="none" stroke="#d8d8d8" stroke-width="1.2"/><path d="M6.5,2.5 C8,4.5 8,7.5 6.5,9.5 C5,7.5 5,4.5 6.5,2.5Z" fill="#d8d8d8"/></svg>
<svg class="a" style="left:448.5px;top:59px;" width="13" height="12" viewBox="0 0 13 12"><rect x="0.5" y="0.5" width="10" height="10" fill="none" stroke="#cfcfcf"/><path d="M3,3 v5 h5" fill="none" stroke="#cfcfcf" stroke-width="1.2"/><path d="M11,11 h1.5" stroke="#cfcfcf"/></svg>
<svg class="a" style="left:467.0px;top:59px;" width="13" height="12" viewBox="0 0 13 12"><circle cx="6.5" cy="3.5" r="3" fill="none" stroke="#d8d8d8" stroke-width="1.1"/><circle cx="3.5" cy="8.5" r="3" fill="none" stroke="#d8d8d8" stroke-width="1.1"/><circle cx="9.5" cy="8.5" r="3" fill="none" stroke="#d8d8d8" stroke-width="1.1"/><circle cx="6.5" cy="6.5" r="1.2" fill="#d8d8d8"/></svg>
<svg class="a" style="left:485.9px;top:59px;" width="13" height="12" viewBox="0 0 13 12"><path d="M1,5 C2,1 9,0 11,4 M12,7 C11,11 4,12 2,8" fill="none" stroke="#d8d8d8" stroke-width="1.6"/><path d="M9,2 L12,5 L12,1 Z M4,10 L1,7 L1,11 Z" fill="#d8d8d8"/></svg>
<svg class="a" style="left:506.1px;top:59px;" width="13" height="12" viewBox="0 0 13 12"><circle cx="6.5" cy="4.5" r="3.5" fill="#d0d0d0"/><circle cx="6.5" cy="4.5" r="1.3" fill="#535353"/><path d="M1,10 h11" stroke="#cfcfcf"/><circle cx="1.5" cy="10" r="1.3" fill="none" stroke="#cfcfcf"/><circle cx="11.5" cy="10" r="1.3" fill="none" stroke="#cfcfcf"/></svg>
<svg class="a" style="left:526.3px;top:59px;" width="13" height="12" viewBox="0 0 13 12"><circle cx="5" cy="6" r="4" fill="#d0d0d0"/><circle cx="5" cy="6" r="1.4" fill="#535353"/><rect x="10" y="1" width="2.5" height="2.5" fill="#cfcfcf"/><rect x="10" y="5" width="2.5" height="2.5" fill="#cfcfcf"/><rect x="10" y="9" width="2.5" height="2.5" fill="#cfcfcf"/></svg>
<svg class="a" style="left:552.5px;top:59px;" width="13" height="12" viewBox="0 0 13 12"><rect x="0.5" y="0.5" width="12" height="11" fill="none" stroke="#bdbdbd" stroke-dasharray="1.5,1"/><rect x="2.5" y="2.5" width="8" height="7" fill="#6e6e6e" stroke="#cfcfcf"/><path d="M3,9 L6,6 L8,8 L10,5" fill="none" stroke="#d8d8d8"/></svg>
<svg class="a" style="left:573.0px;top:59px;" width="13" height="12" viewBox="0 0 13 12"><rect x="0.5" y="0.5" width="12" height="11" fill="none" stroke="#777"/><path d="M1,11 L5,7 M5,9.5 V7 H2.5 M12,11 L8,7 M8,9.5 V7 H10.5" fill="none" stroke="#aaa" stroke-width="1.3"/></svg>
<svg class="a" style="left:593.2px;top:59px;" width="13" height="12" viewBox="0 0 13 12"><rect x="0.5" y="0.5" width="12" height="11" fill="none" stroke="#777"/><path d="M5,7 L1,11 M1,8.5 V11 H3.5 M8,5 L12,1 M9.5,1 H12 V3.5" fill="none" stroke="#aaa" stroke-width="1.3"/></svg>
<div class="a" style="left:616px;top:57px;width:18px;height:15px;background:#383838;"></div>
<svg class="a" style="left:619.0px;top:59px;" width="13" height="12" viewBox="0 0 13 12"><path d="M1,1 h11 v4 h-4 v3 h-3 v-3 h-4 Z" fill="none" stroke="#e0e0e0" stroke-width="1.2"/><path d="M5.5,8 v3.5 h2 v-3.5" fill="#e0e0e0"/></svg>
<svg class="a" style="left:638.5px;top:59px;" width="13" height="12" viewBox="0 0 13 12"><ellipse cx="6.5" cy="6" rx="5.8" ry="4.5" fill="none" stroke="#aaaaaa" stroke-width="1"/></svg>
<svg class="a" style="left:658.9px;top:59px;" width="13" height="12" viewBox="0 0 13 12"><path d="M6.5,1 A5,5 0 1 1 2,8" fill="none" stroke="#d8d8d8" stroke-width="1.4"/><path d="M1,4 L3,1 L5,4 Z" fill="#d8d8d8"/><path d="M4,8 L9,4" stroke="#d8d8d8" stroke-width="1.3"/></svg>
<svg class="a" style="left:677.5px;top:59px;" width="13" height="12" viewBox="0 0 13 12"><rect x="0.5" y="0.5" width="12" height="11" fill="none" stroke="#999" stroke-dasharray="1.5,1"/><path d="M2,6 h9 M4,4 l-2,2 l2,2 M9,4 l2,2 l-2,2" fill="none" stroke="#e0e0e0" stroke-width="1.3"/></svg>
<svg class="a" style="left:705.1px;top:59px;" width="13" height="12" viewBox="0 0 13 12"><path d="M4,1 h8.5 v10 h-8.5 L0.5,6 Z" fill="none" stroke="#cfcfcf"/><text x="8" y="9.5" font-family="Liberation Serif" font-size="9" fill="#d8d8d8" text-anchor="middle">T</text><circle cx="3.5" cy="6" r="1" fill="#d8d8d8"/></svg>
<svg class="a" style="left:725.3px;top:59px;" width="13" height="12" viewBox="0 0 13 12"><path d="M4,1 h8.5 v10 h-8.5 L0.5,6 Z" fill="none" stroke="#cfcfcf"/><text x="8" y="9.5" font-family="Liberation Serif" font-size="9" fill="#d8d8d8" text-anchor="middle">T</text></svg>
<svg class="a" style="left:744.5px;top:59px;" width="13" height="12" viewBox="0 0 13 12"><path d="M4,1 h8.5 v10 h-8.5 L0.5,6 Z" fill="none" stroke="#cfcfcf"/><circle cx="7.5" cy="6" r="2.6" fill="#d0d0d0"/><circle cx="7.5" cy="6" r="1" fill="#535353"/></svg>
<svg class="a" style="left:764.3px;top:59px;" width="13" height="12" viewBox="0 0 13 12"><text x="6.5" y="10" font-family="Liberation Serif" font-size="11" fill="#d8d8d8" text-anchor="middle">T</text><path d="M0,6 h2 M11,6 h2" stroke="#cfcfcf"/></svg>
<svg class="a" style="left:790.3px;top:59px;" width="13" height="12" viewBox="0 0 13 12"><path d="M0.5,2.5 h12 M0.5,5.5 h12 M0.5,8.5 h12 M3,0.5 v11 M6.5,0.5 v11 M10,0.5 v11" stroke="#cfcfcf" stroke-width="0.9"/></svg>
<svg class="a" style="left:810.5px;top:59px;" width="13" height="12" viewBox="0 0 13 12"><rect x="0.5" y="0.5" width="12" height="11" fill="none" stroke="#cfcfcf"/><rect x="2" y="2" width="9" height="8" fill="none" stroke="#999"/><text x="6.5" y="9" font-family="Liberation Sans" font-size="6.5" fill="#d8d8d8" text-anchor="middle">A1</text></svg>
<svg class="a" style="left:830.2px;top:59px;" width="13" height="12" viewBox="0 0 13 12"><rect x="0.5" y="1" width="12" height="3" fill="#cfcfcf"/><rect x="0.5" y="6" width="12" height="2" fill="none" stroke="#cfcfcf" stroke-width="0.8"/><path d="M1,10.5 h3 M5,10.5 h3 M9,10.5 h3" stroke="#cfcfcf"/></svg>
<svg class="a" style="left:849.5px;top:59px;" width="13" height="12" viewBox="0 0 13 12"><path d="M0.5,11 h12 M1,11 V3 L3,6 L5,2 L7,7 L9,5 L12,8 V11" fill="none" stroke="#cfcfcf" stroke-width="0.9"/></svg>
<svg class="a" style="left:869.5px;top:59px;" width="13" height="12" viewBox="0 0 13 12"><circle cx="6.5" cy="6" r="5.3" fill="none" stroke="#d0d0d0" stroke-width="1.1"/><path d="M9.5,3 L5.5,7 L3.5,9 L7.5,5 Z" fill="#d0d0d0" stroke="#d0d0d0"/></svg>
<svg class="a" style="left:899px;top:56px;" width="12" height="10" viewBox="0 0 12 10"><rect x="0" y="0.5" width="2" height="1.4" fill="#cfcfcf"/><rect x="3" y="0.5" width="9" height="1.4" fill="#cfcfcf"/><rect x="0" y="4.2" width="2" height="1.4" fill="#cfcfcf"/><rect x="3" y="4.2" width="9" height="1.4" fill="#cfcfcf"/><rect x="0" y="8" width="2" height="1.4" fill="#cfcfcf"/><rect x="3" y="8" width="9" height="1.4" fill="#cfcfcf"/></svg>
<svg class="a" style="left:4px;top:75px;" width="8" height="5" viewBox="0 0 8 5"><path d="M3.5,0.5 L1,2.5 L3.5,4.5 M7,0.5 L4.5,2.5 L7,4.5" fill="none" stroke="#a8a8a8" stroke-width="1"/></svg>
<svg class="a" style="left:53px;top:75px;" width="8" height="5" viewBox="0 0 8 5"><path d="M1,0.5 L3.5,2.5 L1,4.5 M4.5,0.5 L7,2.5 L4.5,4.5" fill="none" stroke="#a8a8a8" stroke-width="1"/></svg>
<svg class="a" style="left:978px;top:75px;" width="8" height="5" viewBox="0 0 8 5"><path d="M1,0.5 L3.5,2.5 L1,4.5 M4.5,0.5 L7,2.5 L4.5,4.5" fill="none" stroke="#b8b8b8" stroke-width="1"/></svg>
<div class="a" style="left:18px;top:86px;width:12px;height:1px;background:#6a6a6a;"></div>
<div class="a" style="left:4px;top:96.5px;width:19px;height:15px;background:#383838;"></div>
<svg class="a" style="left:7.25px;top:97.25px;" width="13" height="14" viewBox="0 0 13 14"><path d="M2,1 L2,12 L5,9 L7.5,13 L9,12 L6.5,8.5 L10.5,8.5 Z" fill="none" stroke="#d6d6d6" stroke-width="1.1"/></svg>
<svg class="a" style="left:29.3px;top:97.25px;" width="13" height="14" viewBox="0 0 13 14"><path d="M2,1 L2,12 L5,9 L7.5,13 L9,12 L6.5,8.5 L10.5,8.5 Z" fill="#d6d6d6"/></svg>
<div class="a" style="left:21px;top:108px;width:2px;height:2px;background:#bdbdbd;"></div>
<div class="a" style="left:43px;top:108px;width:2px;height:2px;background:#bdbdbd;"></div>
<svg class="a" style="left:7.25px;top:114.15px;" width="13" height="14" viewBox="0 0 13 14"><path d="M1,12 L9,4" stroke="#d6d6d6" stroke-width="1.6"/><path d="M9,1 v2 M11,3 h-2 M10.5,1.5 l-1,1" stroke="#d6d6d6" stroke-width="0.9"/></svg>
<svg class="a" style="left:29.3px;top:114.15px;" width="13" height="14" viewBox="0 0 13 14"><ellipse cx="6" cy="4.5" rx="5" ry="3" fill="none" stroke="#d6d6d6" stroke-width="1.1"/><path d="M5,5 L5,13 L7,11 L9,13.5 L10,12.5 L8,10.5 L10.5,10 Z" fill="#d6d6d6"/></svg>
<div class="a" style="left:21px;top:125px;width:2px;height:2px;background:#bdbdbd;"></div>
<div class="a" style="left:43px;top:125px;width:2px;height:2px;background:#bdbdbd;"></div>
<svg class="a" style="left:7.25px;top:131.05px;" width="13" height="14" viewBox="0 0 13 14"><path d="M2,12 L4,6 L9,2 L12,5 L8,10 Z" fill="#d6d6d6"/></svg>
<svg class="a" style="left:29.3px;top:131.05px;" width="13" height="14" viewBox="0 0 13 14"><path d="M1,12 C0,8 4,10 3,6" fill="none" stroke="#d6d6d6"/><path d="M4,11 L6,6 L10,2 L12.5,4.5 L9,9 Z" fill="#d6d6d6"/></svg>
<div class="a" style="left:21px;top:142px;width:2px;height:2px;background:#bdbdbd;"></div>
<div class="a" style="left:43px;top:142px;width:2px;height:2px;background:#bdbdbd;"></div>
<svg class="a" style="left:7.25px;top:147.95px;" width="13" height="14" viewBox="0 0 13 14"><path d="M2,2 h9 M6.5,2 v10 M4.5,12 h4" stroke="#d6d6d6" stroke-width="1.6" fill="none"/></svg>
<svg class="a" style="left:29.3px;top:147.95px;" width="13" height="14" viewBox="0 0 13 14"><path d="M2,12 L11,2" stroke="#d6d6d6" stroke-width="1.2"/></svg>
<div class="a" style="left:21px;top:159px;width:2px;height:2px;background:#bdbdbd;"></div>
<div class="a" style="left:43px;top:159px;width:2px;height:2px;background:#bdbdbd;"></div>
<svg class="a" style="left:7.25px;top:164.85px;" width="13" height="14" viewBox="0 0 13 14"><rect x="1.5" y="2" width="10" height="10" fill="#777" stroke="#d6d6d6" stroke-width="1"/></svg>
<svg class="a" style="left:29.3px;top:164.85px;" width="13" height="14" viewBox="0 0 13 14"><path d="M11,1 L6,8 L4,8 C2,9 3,11 1,12 C4,12 6,11 7,9 Z" fill="#d6d6d6"/></svg>
<div class="a" style="left:21px;top:176px;width:2px;height:2px;background:#bdbdbd;"></div>
<div class="a" style="left:43px;top:176px;width:2px;height:2px;background:#bdbdbd;"></div>
<svg class="a" style="left:7.25px;top:181.75px;" width="13" height="14" viewBox="0 0 13 14"><circle cx="5" cy="7" r="4" fill="#6e6e6e" stroke="#d6d6d6"/><path d="M4,12 L12,3" stroke="#d6d6d6" stroke-width="1.8"/></svg>
<svg class="a" style="left:29.3px;top:181.75px;" width="13" height="14" viewBox="0 0 13 14"><path d="M2,9 L7,3 L12,7 L7,12 Z" fill="#d6d6d6"/></svg>
<div class="a" style="left:21px;top:193px;width:2px;height:2px;background:#bdbdbd;"></div>
<div class="a" style="left:43px;top:193px;width:2px;height:2px;background:#bdbdbd;"></div>
<svg class="a" style="left:7.25px;top:198.64999999999998px;" width="13" height="14" viewBox="0 0 13 14"><path d="M3,5 A5,5 0 1 1 4,11" fill="none" stroke="#d6d6d6" stroke-width="1.2"/><path d="M1,3 L4,6 L5,2" fill="#d6d6d6"/></svg>
<svg class="a" style="left:29.3px;top:198.64999999999998px;" width="13" height="14" viewBox="0 0 13 14"><rect x="1" y="6" width="6" height="6" fill="none" stroke="#d6d6d6"/><rect x="5" y="1" width="7" height="7" fill="none" stroke="#d6d6d6"/></svg>
<div class="a" style="left:21px;top:210px;width:2px;height:2px;background:#bdbdbd;"></div>
<div class="a" style="left:43px;top:210px;width:2px;height:2px;background:#bdbdbd;"></div>
<svg class="a" style="left:7.25px;top:215.54999999999998px;" width="13" height="14" viewBox="0 0 13 14"><path d="M1,9 C3,5 5,11 8,7 C10,4 11,8 12,6" fill="none" stroke="#d6d6d6" stroke-width="1.5"/></svg>
<svg class="a" style="left:29.3px;top:215.54999999999998px;" width="13" height="14" viewBox="0 0 13 14"><rect x="3" y="2" width="9" height="9" fill="none" stroke="#d6d6d6" stroke-dasharray="2,1"/><path d="M1,1 L1,10 L4,7 L7,7 Z" fill="#d6d6d6"/></svg>
<div class="a" style="left:21px;top:227px;width:2px;height:2px;background:#bdbdbd;"></div>
<div class="a" style="left:43px;top:227px;width:2px;height:2px;background:#bdbdbd;"></div>
<svg class="a" style="left:7.25px;top:232.45px;" width="13" height="14" viewBox="0 0 13 14"><ellipse cx="5.5" cy="6" rx="5" ry="4" fill="none" stroke="#d6d6d6"/><path d="M7,6 L7,13 L9,11 L11,13 Z" fill="#d6d6d6"/></svg>
<svg class="a" style="left:29.3px;top:232.45px;" width="13" height="14" viewBox="0 0 13 14"><path d="M1,12 L6,1 L12,12 Z M3,8 h7 M4,5 h5" fill="none" stroke="#d6d6d6"/></svg>
<div class="a" style="left:21px;top:243px;width:2px;height:2px;background:#bdbdbd;"></div>
<div class="a" style="left:43px;top:243px;width:2px;height:2px;background:#bdbdbd;"></div>
<svg class="a" style="left:7.25px;top:249.35px;" width="13" height="14" viewBox="0 0 13 14"><rect x="1" y="1" width="11" height="11" fill="none" stroke="#d6d6d6"/><path d="M1,5 C5,3 8,7 12,5 M1,9 C5,7 8,11 12,9 M5,1 C3,5 7,8 5,12 M9,1 C7,5 11,8 9,12" fill="none" stroke="#d6d6d6" stroke-width="0.8"/></svg>
<svg class="a" style="left:29.3px;top:249.35px;" width="13" height="14" viewBox="0 0 13 14"><rect x="1" y="1" width="11" height="11" fill="#999" stroke="#d6d6d6"/></svg>
<div class="a" style="left:21px;top:260px;width:2px;height:2px;background:#bdbdbd;"></div>
<div class="a" style="left:43px;top:260px;width:2px;height:2px;background:#bdbdbd;"></div>
<svg class="a" style="left:7.25px;top:266.25px;" width="13" height="14" viewBox="0 0 13 14"><path d="M1,12 L7,6 M6,4 L9,7 M8,3 L11,1 L12,2 L10,5" fill="none" stroke="#d6d6d6" stroke-width="1.5"/></svg>
<svg class="a" style="left:29.3px;top:266.25px;" width="13" height="14" viewBox="0 0 13 14"><rect x="1" y="1" width="6" height="6" fill="none" stroke="#d6d6d6"/><circle cx="8.5" cy="8.5" r="3.5" fill="none" stroke="#d6d6d6"/></svg>
<div class="a" style="left:21px;top:277px;width:2px;height:2px;background:#bdbdbd;"></div>
<div class="a" style="left:43px;top:277px;width:2px;height:2px;background:#bdbdbd;"></div>
<svg class="a" style="left:7.25px;top:283.15px;" width="13" height="14" viewBox="0 0 13 14"><rect x="4" y="4" width="7" height="8" rx="1" fill="none" stroke="#d6d6d6"/><circle cx="7.5" cy="8" r="1.5" fill="#d6d6d6"/><path d="M1,1 h1 M1,3 h1 M3,1 h1" stroke="#d6d6d6"/></svg>
<svg class="a" style="left:29.3px;top:283.15px;" width="13" height="14" viewBox="0 0 13 14"><path d="M1,12 h11 M2,11 v-6 M5,11 v-9 M8,11 v-5 M11,11 v-7" stroke="#d6d6d6" stroke-width="1.4"/></svg>
<div class="a" style="left:21px;top:294px;width:2px;height:2px;background:#bdbdbd;"></div>
<div class="a" style="left:43px;top:294px;width:2px;height:2px;background:#bdbdbd;"></div>
<svg class="a" style="left:7.25px;top:300.04999999999995px;" width="13" height="14" viewBox="0 0 13 14"><rect x="1" y="2" width="9" height="9" fill="none" stroke="#d6d6d6"/><path d="M9,8 v5 M6.5,10.5 h5" stroke="#d6d6d6" stroke-width="1.4"/></svg>
<svg class="a" style="left:29.3px;top:300.04999999999995px;" width="13" height="14" viewBox="0 0 13 14"><rect x="1" y="2" width="9" height="9" fill="none" stroke="#d6d6d6"/><path d="M4,1 v8 h8" fill="none" stroke="#d6d6d6" stroke-width="1.2"/></svg>
<div class="a" style="left:21px;top:311px;width:2px;height:2px;background:#bdbdbd;"></div>
<div class="a" style="left:43px;top:311px;width:2px;height:2px;background:#bdbdbd;"></div>
<svg class="a" style="left:7.25px;top:316.95px;" width="13" height="14" viewBox="0 0 13 14"><circle cx="2.5" cy="3" r="1.8" fill="none" stroke="#d6d6d6"/><circle cx="2.5" cy="9" r="1.8" fill="none" stroke="#d6d6d6"/><path d="M4,4 L12,8 M4,8 L12,4" stroke="#d6d6d6"/></svg>
<svg class="a" style="left:29.3px;top:316.95px;" width="13" height="14" viewBox="0 0 13 14"><rect x="1" y="4" width="11" height="6" fill="none" stroke="#d6d6d6"/><path d="M3,10 v-3 M5,10 v-2 M7,10 v-3 M9,10 v-2" stroke="#d6d6d6"/></svg>
<div class="a" style="left:21px;top:328px;width:2px;height:2px;background:#bdbdbd;"></div>
<div class="a" style="left:43px;top:328px;width:2px;height:2px;background:#bdbdbd;"></div>
<svg class="a" style="left:7.25px;top:333.84999999999997px;" width="13" height="14" viewBox="0 0 13 14"><path d="M3,1 L1,6 L4,12 h8 v-9 h-7" fill="none" stroke="#d6d6d6"/><text x="8" y="10" font-size="7" fill="#d6d6d6" font-family="Liberation Serif" text-anchor="middle">T</text></svg>
<svg class="a" style="left:29.3px;top:333.84999999999997px;" width="13" height="14" viewBox="0 0 13 14"><circle cx="3" cy="3" r="2.2" fill="#d6d6d6"/><circle cx="8" cy="8" r="3" fill="none" stroke="#d6d6d6" stroke-width="1.2"/><path d="M8,3.5 v9 M3.5,8 h9" stroke="#d6d6d6" stroke-width="0.8"/></svg>
<div class="a" style="left:21px;top:345px;width:2px;height:2px;background:#bdbdbd;"></div>
<div class="a" style="left:43px;top:345px;width:2px;height:2px;background:#bdbdbd;"></div>
<svg class="a" style="left:7.25px;top:350.75px;" width="13" height="14" viewBox="0 0 13 14"><path d="M3,0 v10 h10 M0,3 h10 v10" fill="none" stroke="#d6d6d6" stroke-width="1.1"/></svg>
<svg class="a" style="left:29.3px;top:350.75px;" width="13" height="14" viewBox="0 0 13 14"><path d="M1,12 L2,9 L10,1 L12,3 L4,11 Z" fill="none" stroke="#d6d6d6" stroke-width="1.2"/></svg>
<div class="a" style="left:21px;top:362px;width:2px;height:2px;background:#bdbdbd;"></div>
<div class="a" style="left:43px;top:362px;width:2px;height:2px;background:#bdbdbd;"></div>
<svg class="a" style="left:7.25px;top:367.65px;" width="13" height="14" viewBox="0 0 13 14"><path d="M3,12 L1,7 L2,6 L4,8 L4,2 L5.5,2 L5.5,6 L6,1 L7.5,1 L7.5,6 L8,2 L9.5,2 L9.5,7 L10.5,4 L12,4.5 L10,12 Z" fill="#d6d6d6"/></svg>
<svg class="a" style="left:29.3px;top:367.65px;" width="13" height="14" viewBox="0 0 13 14"><circle cx="5" cy="5" r="4" fill="none" stroke="#d6d6d6" stroke-width="1.3"/><path d="M8,8 L12,12" stroke="#d6d6d6" stroke-width="1.6"/></svg>
<div class="a" style="left:21px;top:379px;width:2px;height:2px;background:#bdbdbd;"></div>
<div class="a" style="left:43px;top:379px;width:2px;height:2px;background:#bdbdbd;"></div>
<svg class="a" style="left:3px;top:386px;" width="40" height="40" viewBox="0 0 40 40"><rect x="13.5" y="12.5" width="24" height="24" fill="none" stroke="#2f2f2f" stroke-width="1"/><rect x="16" y="15" width="19" height="19" fill="none" stroke="#4c4c4c" stroke-width="3.5"/><rect x="18.5" y="17.5" width="14" height="14" fill="none" stroke="#2f2f2f" stroke-width="1"/><rect x="0.5" y="0.5" width="25" height="25" fill="#4d4d4d" stroke="#2f2f2f"/><text x="13" y="17" font-size="10" font-family="Liberation Sans" fill="#dcdcdc" text-anchor="middle">?</text><text x="36" y="23" font-size="7" font-family="Liberation Sans" fill="#dcdcdc" text-anchor="middle">?</text><text x="18" y="38" font-size="7" font-family="Liberation Sans" fill="#dcdcdc" text-anchor="middle">?</text><text x="36" y="38" font-size="7" font-family="Liberation Sans" fill="#dcdcdc" text-anchor="middle">?</text><path d="M30,5 C33,4 35,6 35,8" fill="none" stroke="#777" stroke-width="1"/></svg>
<svg class="a" style="left:4px;top:416px;" width="9" height="9" viewBox="0 0 9 9"><rect x="0.5" y="0.5" width="5" height="5" fill="#e0e0e0" stroke="#333"/><rect x="3.5" y="3.5" width="5" height="5" fill="#222" stroke="#e0e0e0"/></svg>
<svg class="a" style="left:5px;top:430px;" width="10" height="10" viewBox="0 0 10 10"><rect x="0.5" y="0.5" width="9" height="9" fill="#f4f4f4" stroke="#333"/></svg>
<svg class="a" style="left:19px;top:430px;" width="10" height="10" viewBox="0 0 10 10"><defs><linearGradient id="gg"><stop offset="0" stop-color="#fff"/><stop offset="1" stop-color="#222"/></linearGradient></defs><rect x="0.5" y="0.5" width="9" height="9" fill="url(#gg)" stroke="#333"/></svg>
<svg class="a" style="left:32px;top:429px;" width="12" height="12" viewBox="0 0 12 12"><rect x="0.5" y="0.5" width="11" height="11" fill="#383838"/><rect x="2" y="2" width="8" height="8" fill="#f4f4f4"/><path d="M2,10 L10,2" stroke="#e02020" stroke-width="1.6"/></svg>
<div class="a" style="left:4px;top:445px;width:12px;height:13px;background:#3a3a3a;"></div>
<svg class="a" style="left:5px;top:447px;" width="10" height="9" viewBox="0 0 10 9"><circle cx="4" cy="4" r="3.2" fill="none" stroke="#d0d0d0"/><circle cx="6" cy="5.5" r="3.2" fill="#bbb" stroke="#d0d0d0"/></svg>
<svg class="a" style="left:19px;top:447px;" width="10" height="9" viewBox="0 0 10 9"><circle cx="4" cy="4" r="3.2" fill="none" stroke="#c0c0c0"/><circle cx="6" cy="5.5" r="3.2" fill="#999" stroke="#c0c0c0"/></svg>
<svg class="a" style="left:33px;top:447px;" width="10" height="9" viewBox="0 0 10 9"><circle cx="5" cy="5" r="3.3" fill="none" stroke="#6a6a6a"/></svg>
<svg class="a" style="left:16px;top:465px;" width="17" height="12" viewBox="0 0 17 12"><rect x="5" y="0.5" width="11" height="8" fill="#777" stroke="#d0d0d0"/><rect x="0.5" y="3.5" width="11" height="8" fill="#888" stroke="#d0d0d0"/></svg>
<svg class="a" style="left:17px;top:491px;" width="14" height="4" viewBox="0 0 14 4"><circle cx="2" cy="2" r="1.3" fill="#d8d8d8"/><circle cx="7" cy="2" r="1.3" fill="#d8d8d8"/><circle cx="12" cy="2" r="1.3" fill="#d8d8d8"/></svg>
<div class="a" style="left:0px;top:503px;width:48px;height:1px;background:#4a4a4a;"></div>
<div class="a" style="left:50px;top:111px;width:27px;height:1px;background:#3f3f3f;"></div>
<div class="a" style="left:58px;top:86px;width:11px;height:1px;background:#6a6a6a;"></div>
<svg class="a" style="left:56.5px;top:91.5px;" width="14" height="14" viewBox="0 0 14 14"><rect x="1" y="5" width="5" height="5" fill="none" stroke="#d6d6d6"/><rect x="3" y="7" width="5" height="5" fill="none" stroke="#d6d6d6"/><text x="10" y="8" font-size="10" font-family="Liberation Sans" fill="#d6d6d6" text-anchor="middle">A</text></svg>
<div class="a" style="left:50px;top:139px;width:27px;height:1px;background:#3f3f3f;"></div>
<div class="a" style="left:58px;top:116px;width:11px;height:1px;background:#6a6a6a;"></div>
<svg class="a" style="left:56.5px;top:120.5px;" width="14" height="14" viewBox="0 0 14 14"><rect x="4" y="1" width="9" height="9" fill="none" stroke="#d6d6d6"/><rect x="1" y="6" width="5" height="5" fill="#535353" stroke="#d6d6d6"/></svg>
<div class="a" style="left:50px;top:168px;width:27px;height:1px;background:#3f3f3f;"></div>
<div class="a" style="left:58px;top:144px;width:11px;height:1px;background:#6a6a6a;"></div>
<svg class="a" style="left:56.5px;top:149.0px;" width="14" height="14" viewBox="0 0 14 14"><rect x="1" y="1" width="7" height="7" fill="#bdbdbd"/><rect x="5" y="5" width="7" height="7" fill="#e0e0e0" stroke="#535353"/></svg>
<div class="a" style="left:50px;top:196px;width:27px;height:1px;background:#3f3f3f;"></div>
<div class="a" style="left:58px;top:173px;width:11px;height:1px;background:#6a6a6a;"></div>
<svg class="a" style="left:56.5px;top:177.5px;" width="14" height="14" viewBox="0 0 14 14"><circle cx="7" cy="4" r="2.8" fill="#d6d6d6"/><circle cx="4" cy="7.5" r="2.8" fill="#d6d6d6"/><circle cx="10" cy="7.5" r="2.8" fill="#d6d6d6"/><path d="M7,7 v5 M5,12 h4" stroke="#d6d6d6" stroke-width="1.4"/></svg>
<div class="a" style="left:50px;top:225px;width:27px;height:1px;background:#3f3f3f;"></div>
<div class="a" style="left:58px;top:201px;width:11px;height:1px;background:#6a6a6a;"></div>
<svg class="a" style="left:56.5px;top:206.0px;" width="14" height="14" viewBox="0 0 14 14"><circle cx="7" cy="7" r="4.5" fill="#e0e0e0"/><circle cx="7" cy="7" r="6" fill="none" stroke="#aaa" stroke-dasharray="1,1"/></svg>
<div class="t" style="left:86.0px;top:81.0px;font-size:7.4px;color:#ececec;font-weight:bold;">Berlin_15k_Basic_2.2.ai* bei 300 % (CMYK/CPU-Vorschau)</div>
<svg class="a" style="left:302px;top:80px;" width="8" height="8" viewBox="0 0 8 8"><path d="M1,1 L7,7 M7,1 L1,7" stroke="#cfcfcf" stroke-width="1.2"/></svg>
<div class="a" style="left:88px;top:95px;width:1px;height:5px;background:#585858;"></div>
<div class="t" style="left:90.0px;top:94.7px;font-size:4.5px;color:#6e6e6e;font-weight:normal;">275</div>
<div class="a" style="left:125px;top:95px;width:1px;height:5px;background:#585858;"></div>
<div class="t" style="left:127.0px;top:94.7px;font-size:4.5px;color:#6e6e6e;font-weight:normal;">280</div>
<div class="a" style="left:162px;top:95px;width:1px;height:5px;background:#585858;"></div>
<div class="t" style="left:164.0px;top:94.7px;font-size:4.5px;color:#6e6e6e;font-weight:normal;">285</div>
<div class="a" style="left:199px;top:95px;width:1px;height:5px;background:#585858;"></div>
<div class="t" style="left:201.0px;top:94.7px;font-size:4.5px;color:#6e6e6e;font-weight:normal;">290</div>
<div class="a" style="left:236px;top:95px;width:1px;height:5px;background:#585858;"></div>
<div class="t" style="left:238.0px;top:94.7px;font-size:4.5px;color:#6e6e6e;font-weight:normal;">295</div>
<div class="a" style="left:273px;top:95px;width:1px;height:5px;background:#585858;"></div>
<div class="t" style="left:275.0px;top:94.7px;font-size:4.5px;color:#6e6e6e;font-weight:normal;">300</div>
<div class="a" style="left:310px;top:95px;width:1px;height:5px;background:#585858;"></div>
<div class="t" style="left:312.0px;top:94.7px;font-size:4.5px;color:#6e6e6e;font-weight:normal;">305</div>
<div class="a" style="left:347px;top:95px;width:1px;height:5px;background:#585858;"></div>
<div class="t" style="left:349.0px;top:94.7px;font-size:4.5px;color:#6e6e6e;font-weight:normal;">310</div>
<div class="a" style="left:384px;top:95px;width:1px;height:5px;background:#585858;"></div>
<div class="t" style="left:386.0px;top:94.7px;font-size:4.5px;color:#6e6e6e;font-weight:normal;">315</div>
<div class="a" style="left:421px;top:95px;width:1px;height:5px;background:#585858;"></div>
<div class="t" style="left:423.0px;top:94.7px;font-size:4.5px;color:#6e6e6e;font-weight:normal;">320</div>
<div class="a" style="left:458px;top:95px;width:1px;height:5px;background:#585858;"></div>
<div class="t" style="left:460.0px;top:94.7px;font-size:4.5px;color:#6e6e6e;font-weight:normal;">325</div>
<div class="a" style="left:495px;top:95px;width:1px;height:5px;background:#585858;"></div>
<div class="t" style="left:497.0px;top:94.7px;font-size:4.5px;color:#6e6e6e;font-weight:normal;">330</div>
<div class="a" style="left:532px;top:95px;width:1px;height:5px;background:#585858;"></div>
<div class="t" style="left:534.0px;top:94.7px;font-size:4.5px;color:#6e6e6e;font-weight:normal;">335</div>
<div class="a" style="left:569px;top:95px;width:1px;height:5px;background:#585858;"></div>
<div class="t" style="left:571.0px;top:94.7px;font-size:4.5px;color:#6e6e6e;font-weight:normal;">340</div>
<div class="a" style="left:606px;top:95px;width:1px;height:5px;background:#585858;"></div>
<div class="t" style="left:608.0px;top:94.7px;font-size:4.5px;color:#6e6e6e;font-weight:normal;">345</div>
<div class="a" style="left:643px;top:95px;width:1px;height:5px;background:#585858;"></div>
<div class="t" style="left:645.0px;top:94.7px;font-size:4.5px;color:#6e6e6e;font-weight:normal;">350</div>
<div class="a" style="left:80px;top:112px;width:4px;height:1px;background:#585858;"></div>
<div class="a" style="left:80px;top:149px;width:4px;height:1px;background:#585858;"></div>
<div class="a" style="left:80px;top:186px;width:4px;height:1px;background:#585858;"></div>
<div class="a" style="left:80px;top:223px;width:4px;height:1px;background:#585858;"></div>
<div class="a" style="left:80px;top:260px;width:4px;height:1px;background:#585858;"></div>
<div class="a" style="left:80px;top:297px;width:4px;height:1px;background:#585858;"></div>
<div class="a" style="left:80px;top:334px;width:4px;height:1px;background:#585858;"></div>
<div class="a" style="left:80px;top:371px;width:4px;height:1px;background:#585858;"></div>
<div class="a" style="left:80px;top:408px;width:4px;height:1px;background:#585858;"></div>
<div class="a" style="left:80px;top:445px;width:4px;height:1px;background:#585858;"></div>
<div class="a" style="left:80px;top:482px;width:4px;height:1px;background:#585858;"></div>
<div class="a" style="left:80px;top:519px;width:4px;height:1px;background:#585858;"></div>
<div class="a" style="left:80px;top:556px;width:4px;height:1px;background:#585858;"></div>
<div class="a" style="left:80px;top:593px;width:4px;height:1px;background:#585858;"></div>
<div class="a" style="left:80px;top:630px;width:4px;height:1px;background:#585858;"></div>
<div class="a" style="left:80px;top:667px;width:4px;height:1px;background:#585858;"></div>
<div class="a" style="left:80px;top:704px;width:4px;height:1px;background:#585858;"></div>
<div class="a" style="left:80px;top:741px;width:4px;height:1px;background:#585858;"></div>
<div class="a" style="left:80px;top:778px;width:4px;height:1px;background:#585858;"></div>
<div class="t" style="left:82.0px;top:791.1px;font-size:7.6px;color:#d0d0d0;font-weight:normal;">300%</div>
<svg class="a" style="left:117px;top:791px;" width="8" height="6" viewBox="0 0 8 6"><path d="M1,1.5 L4,4.5 L7,1.5" fill="none" stroke="#cfcfcf" stroke-width="1.3"/></svg>
<svg class="a" style="left:135px;top:790px;" width="20" height="8" viewBox="0 0 20 8"><path d="M1,1 v6 M6,1 L3,4 L6,7 M12,1 L9,4 L12,7" fill="none" stroke="#7a7a7a" stroke-width="1.1"/></svg>
<div class="a" style="left:157px;top:789px;width:39px;height:11px;background:#3b3b3b;"></div>
<div class="t" style="left:162.0px;top:791.6px;font-size:7.6px;color:#d0d0d0;font-weight:normal;">1</div>
<svg class="a" style="left:188px;top:791px;" width="8" height="6" viewBox="0 0 8 6"><path d="M1,1.5 L4,4.5 L7,1.5" fill="none" stroke="#cfcfcf" stroke-width="1.3"/></svg>
<svg class="a" style="left:204px;top:790px;" width="22" height="8" viewBox="0 0 22 8"><path d="M2,1 L6,4 L2,7 Z M12,1 L16,4 L12,7 Z" fill="#cfcfcf"/><rect x="17" y="1" width="1.3" height="6" fill="#cfcfcf"/></svg>
<div class="t" style="left:262.0px;top:791.7px;font-size:7.2px;color:#c6c6c6;font-weight:normal;">Auswahl größer/kleiner</div>
<svg class="a" style="left:372px;top:790px;" width="6" height="8" viewBox="0 0 6 8"><path d="M1,1 L5,4 L1,7 Z" fill="#cfcfcf"/></svg>
<div class="a" style="left:382px;top:789px;width:291px;height:11px;background:#3a3a3a;"></div>
<svg class="a" style="left:385px;top:790px;" width="6" height="8" viewBox="0 0 6 8"><path d="M4,1 L1.5,4 L4,7" fill="none" stroke="#9a9a9a"/></svg>
<div class="a" style="left:515px;top:789px;width:22px;height:10px;background:#5a5a5a;border-radius:5px"></div>
<svg class="a" style="left:663px;top:790px;" width="6" height="8" viewBox="0 0 6 8"><path d="M2,1 L4.5,4 L2,7" fill="none" stroke="#9a9a9a"/></svg>
<svg class="a" style="left:674px;top:778px;" width="9" height="6" viewBox="0 0 9 6"><path d="M1,1 L4.5,4.5 L8,1" fill="none" stroke="#8a8a8a"/></svg>
<svg class="a" style="left:674px;top:96px;" width="9" height="6" viewBox="0 0 9 6"><path d="M1,5 L4.5,1.5 L8,5" fill="none" stroke="#8a8a8a"/></svg>
<div class="a" style="left:687px;top:82px;width:303px;height:19px;background:#3f3f3f;"></div>
<div class="a" style="left:687px;top:82px;width:50px;height:19px;background:#474747;"></div>
<div class="t" style="left:693.0px;top:88.2px;font-size:7.4px;color:#9c9c9c;font-weight:bold;">MAP Views</div>
<div class="a" style="left:738px;top:82px;width:57px;height:19px;background:#535353;"></div>
<div class="t" style="left:745.0px;top:88.2px;font-size:7.4px;color:#f0f0f0;font-weight:bold;">MAP Themes</div>
<svg class="a" style="left:976px;top:87px;" width="11" height="8" viewBox="0 0 11 8"><rect y="0" width="11" height="1.3" fill="#bdbdbd"/><rect y="3" width="11" height="1.3" fill="#bdbdbd"/><rect y="6" width="11" height="1.3" fill="#bdbdbd"/></svg>
<div class="a" style="left:687px;top:101px;width:303px;height:339px;background:#535353;"></div>
<div class="a" style="left:690px;top:104px;width:294px;height:319px;background:#505050;border:1px solid #5d5d5d"></div>
<div class="a" style="left:691px;top:106px;width:292px;height:1px;background:#5d5d5d;"></div>
<div class="a" style="left:691px;top:107px;width:292px;height:12px;background:#505050;"></div>
<svg class="a" style="left:694px;top:108.4px;" width="10" height="10" viewBox="0 0 10 10"><path d="M5,0.5 L8,2 L8,4.5 L9.5,5.5 L9.5,8 L6.5,9.5 L3.5,9.5 L0.5,8 L0.5,5.5 L2,4.5 L2,2 Z" fill="#e8323c"/><circle cx="5" cy="3" r="1.1" fill="#fff" opacity=".6"/><circle cx="3" cy="6.5" r="1.1" fill="#fff" opacity=".5"/><circle cx="7" cy="6.5" r="1.1" fill="#fff" opacity=".4"/></svg>
<div class="t" style="left:707.4px;top:109.5px;font-size:7.4px;color:#e6e6e6;font-weight:normal;">Gebäude</div>
<div class="a" style="left:691px;top:120px;width:292px;height:1px;background:#5d5d5d;"></div>
<div class="a" style="left:691px;top:121px;width:292px;height:12px;background:#505050;"></div>
<svg class="a" style="left:694px;top:121.60000000000001px;" width="10" height="10" viewBox="0 0 10 10"><path d="M5,0.5 L8,2 L8,4.5 L9.5,5.5 L9.5,8 L6.5,9.5 L3.5,9.5 L0.5,8 L0.5,5.5 L2,4.5 L2,2 Z" fill="#3a9bf0"/><circle cx="5" cy="3" r="1.1" fill="#fff" opacity=".6"/><circle cx="3" cy="6.5" r="1.1" fill="#fff" opacity=".5"/><circle cx="7" cy="6.5" r="1.1" fill="#fff" opacity=".4"/></svg>
<div class="t" style="left:707.4px;top:122.7px;font-size:7.4px;color:#e6e6e6;font-weight:normal;">Gewässerlinien</div>
<div class="a" style="left:691px;top:133px;width:292px;height:1px;background:#5d5d5d;"></div>
<div class="a" style="left:691px;top:134px;width:292px;height:12px;background:#505050;"></div>
<svg class="a" style="left:694px;top:134.8px;" width="10" height="10" viewBox="0 0 10 10"><path d="M5,0.5 L8,2 L8,4.5 L9.5,5.5 L9.5,8 L6.5,9.5 L3.5,9.5 L0.5,8 L0.5,5.5 L2,4.5 L2,2 Z" fill="#e8323c"/><circle cx="5" cy="3" r="1.1" fill="#fff" opacity=".6"/><circle cx="3" cy="6.5" r="1.1" fill="#fff" opacity=".5"/><circle cx="7" cy="6.5" r="1.1" fill="#fff" opacity=".4"/></svg>
<div class="t" style="left:707.4px;top:135.9px;font-size:7.4px;color:#e6e6e6;font-weight:normal;">Grenzen</div>
<div class="a" style="left:691px;top:146px;width:292px;height:1px;background:#5d5d5d;"></div>
<div class="a" style="left:691px;top:147px;width:292px;height:12px;background:#505050;"></div>
<svg class="a" style="left:694px;top:148.0px;" width="10" height="10" viewBox="0 0 10 10"><path d="M5,0.5 L8,2 L8,4.5 L9.5,5.5 L9.5,8 L6.5,9.5 L3.5,9.5 L0.5,8 L0.5,5.5 L2,4.5 L2,2 Z" fill="#e8323c"/><circle cx="5" cy="3" r="1.1" fill="#fff" opacity=".6"/><circle cx="3" cy="6.5" r="1.1" fill="#fff" opacity=".5"/><circle cx="7" cy="6.5" r="1.1" fill="#fff" opacity=".4"/></svg>
<div class="t" style="left:707.4px;top:149.1px;font-size:7.4px;color:#e6e6e6;font-weight:normal;">Landnutzung &amp; Gewässer</div>
<div class="a" style="left:691px;top:159px;width:292px;height:1px;background:#5d5d5d;"></div>
<div class="a" style="left:691px;top:160px;width:292px;height:12px;background:#505050;"></div>
<svg class="a" style="left:694px;top:161.2px;" width="10" height="10" viewBox="0 0 10 10"><path d="M5,0.5 L8,2 L8,4.5 L9.5,5.5 L9.5,8 L6.5,9.5 L3.5,9.5 L0.5,8 L0.5,5.5 L2,4.5 L2,2 Z" fill="#3a9bf0"/><circle cx="5" cy="3" r="1.1" fill="#fff" opacity=".6"/><circle cx="3" cy="6.5" r="1.1" fill="#fff" opacity=".5"/><circle cx="7" cy="6.5" r="1.1" fill="#fff" opacity=".4"/></svg>
<div class="t" style="left:707.4px;top:162.3px;font-size:7.4px;color:#e6e6e6;font-weight:normal;">Natur &amp; Relief</div>
<div class="a" style="left:691px;top:172px;width:292px;height:1px;background:#5d5d5d;"></div>
<div class="a" style="left:691px;top:173px;width:292px;height:12px;background:#505050;"></div>
<svg class="a" style="left:694px;top:174.4px;" width="10" height="10" viewBox="0 0 10 10"><path d="M5,0.5 L8,2 L8,4.5 L9.5,5.5 L9.5,8 L6.5,9.5 L3.5,9.5 L0.5,8 L0.5,5.5 L2,4.5 L2,2 Z" fill="#e8b030"/><circle cx="5" cy="3" r="1.1" fill="#fff" opacity=".6"/><circle cx="3" cy="6.5" r="1.1" fill="#fff" opacity=".5"/><circle cx="7" cy="6.5" r="1.1" fill="#fff" opacity=".4"/></svg>
<div class="t" style="left:707.4px;top:175.5px;font-size:7.4px;color:#e6e6e6;font-weight:normal;">Symbole</div>
<div class="a" style="left:691px;top:186px;width:292px;height:1px;background:#5d5d5d;"></div>
<div class="a" style="left:691px;top:187px;width:292px;height:12px;background:#505050;"></div>
<svg class="a" style="left:694px;top:187.6px;" width="10" height="10" viewBox="0 0 10 10"><path d="M5,0.5 L8,2 L8,4.5 L9.5,5.5 L9.5,8 L6.5,9.5 L3.5,9.5 L0.5,8 L0.5,5.5 L2,4.5 L2,2 Z" fill="#3a9bf0"/><circle cx="5" cy="3" r="1.1" fill="#fff" opacity=".6"/><circle cx="3" cy="6.5" r="1.1" fill="#fff" opacity=".5"/><circle cx="7" cy="6.5" r="1.1" fill="#fff" opacity=".4"/></svg>
<div class="t" style="left:707.4px;top:188.7px;font-size:7.4px;color:#e6e6e6;font-weight:normal;">Verkehr</div>
<div class="a" style="left:691px;top:199px;width:292px;height:1px;background:#5a5a5a;"></div>
<svg class="a" style="left:904px;top:426px;" width="13" height="11" viewBox="0 0 13 11"><rect x="0" y="1" width="2" height="1.4" fill="#8a8a8a"/><rect x="3" y="1" width="10" height="1.4" fill="#8a8a8a"/><rect x="0" y="5" width="2" height="1.4" fill="#8a8a8a"/><rect x="3" y="5" width="10" height="1.4" fill="#8a8a8a"/><rect x="0" y="9" width="2" height="1.4" fill="#8a8a8a"/><rect x="3" y="9" width="10" height="1.4" fill="#8a8a8a"/></svg>
<svg class="a" style="left:922px;top:426px;" width="12" height="11" viewBox="0 0 12 11"><path d="M1,5 L4.5,9 L11,1.5" fill="none" stroke="#a0a0a0" stroke-width="1.6"/></svg>
<svg class="a" style="left:940px;top:426px;" width="12" height="12" viewBox="0 0 12 12"><path d="M6,1 v10 M1,6 h10" stroke="#e6e6e6" stroke-width="3"/></svg>
<svg class="a" style="left:959px;top:426px;" width="10" height="12" viewBox="0 0 10 12"><rect x="1" y="2" width="8" height="1.3" fill="#777"/><rect x="3.5" y="0.5" width="3" height="1.5" fill="#777"/><rect x="1.8" y="4" width="6.4" height="7.5" fill="none" stroke="#777" stroke-width="1.1"/></svg>
<div class="a" style="left:687px;top:440px;width:303px;height:19px;background:#424242;"></div>
<svg class="a" style="left:975px;top:446px;" width="11" height="8" viewBox="0 0 11 8"><rect y="0" width="11" height="1.3" fill="#bdbdbd"/><rect y="3" width="11" height="1.3" fill="#bdbdbd"/><rect y="6" width="11" height="1.3" fill="#bdbdbd"/></svg>
<div class="a" style="left:687px;top:459px;width:303px;height:341px;background:#535353;"></div>
<div class="a" style="left:687px;top:477px;width:289px;height:1px;background:#4b4b4b;"></div>
<div class="a" style="left:946px;top:464px;width:1px;height:15px;background:#4b4b4b;"></div>
<svg class="a" style="left:953.5px;top:466.5px;" width="9" height="9" viewBox="0 0 9 9"><circle cx="4.5" cy="4.5" r="2.9" fill="none" stroke="#d6d6d6" stroke-width="1"/></svg>
<div class="a" style="left:687px;top:492px;width:289px;height:1px;background:#4b4b4b;"></div>
<div class="a" style="left:946px;top:478px;width:1px;height:15px;background:#4b4b4b;"></div>
<svg class="a" style="left:953.5px;top:481.25px;" width="9" height="9" viewBox="0 0 9 9"><circle cx="4.5" cy="4.5" r="2.9" fill="none" stroke="#d6d6d6" stroke-width="1"/></svg>
<div class="a" style="left:687px;top:493px;width:289px;height:15px;background:#4d6585;"></div>
<div class="a" style="left:687px;top:507px;width:289px;height:1px;background:#4b4b4b;"></div>
<div class="a" style="left:946px;top:493px;width:1px;height:15px;background:#4b4b4b;"></div>
<svg class="a" style="left:953.5px;top:496.0px;" width="9" height="9" viewBox="0 0 9 9"><circle cx="4.5" cy="4.5" r="2.9" fill="none" stroke="#d6d6d6" stroke-width="1"/></svg>
<div class="a" style="left:687px;top:522px;width:289px;height:1px;background:#4b4b4b;"></div>
<div class="a" style="left:946px;top:508px;width:1px;height:15px;background:#4b4b4b;"></div>
<svg class="a" style="left:953.5px;top:510.75px;" width="9" height="9" viewBox="0 0 9 9"><circle cx="4.5" cy="4.5" r="2.9" fill="none" stroke="#d6d6d6" stroke-width="1"/></svg>
<div class="a" style="left:687px;top:536px;width:289px;height:1px;background:#4b4b4b;"></div>
<div class="a" style="left:946px;top:523px;width:1px;height:15px;background:#4b4b4b;"></div>
<svg class="a" style="left:953.5px;top:525.5px;" width="9" height="9" viewBox="0 0 9 9"><circle cx="4.5" cy="4.5" r="2.9" fill="none" stroke="#d6d6d6" stroke-width="1"/><circle cx="4.5" cy="4.5" r="2" fill="#bbb"/></svg>
<div class="a" style="left:687px;top:551px;width:289px;height:1px;background:#4b4b4b;"></div>
<div class="a" style="left:946px;top:537px;width:1px;height:15px;background:#4b4b4b;"></div>
<svg class="a" style="left:953.5px;top:540.25px;" width="9" height="9" viewBox="0 0 9 9"><circle cx="4.5" cy="4.5" r="2.9" fill="none" stroke="#d6d6d6" stroke-width="1"/></svg>
<div class="a" style="left:687px;top:566px;width:289px;height:1px;background:#4b4b4b;"></div>
<div class="a" style="left:946px;top:552px;width:1px;height:15px;background:#4b4b4b;"></div>
<svg class="a" style="left:953.5px;top:555.0px;" width="9" height="9" viewBox="0 0 9 9"><circle cx="4.5" cy="4.5" r="2.9" fill="none" stroke="#d6d6d6" stroke-width="1"/></svg>
<div class="a" style="left:687px;top:581px;width:289px;height:1px;background:#4b4b4b;"></div>
<div class="a" style="left:946px;top:567px;width:1px;height:15px;background:#4b4b4b;"></div>
<svg class="a" style="left:953.5px;top:569.75px;" width="9" height="9" viewBox="0 0 9 9"><circle cx="4.5" cy="4.5" r="2.9" fill="none" stroke="#d6d6d6" stroke-width="1"/></svg>
<div class="a" style="left:687px;top:595px;width:289px;height:1px;background:#4b4b4b;"></div>
<div class="a" style="left:946px;top:582px;width:1px;height:15px;background:#4b4b4b;"></div>
<svg class="a" style="left:953.5px;top:584.5px;" width="9" height="9" viewBox="0 0 9 9"><circle cx="4.5" cy="4.5" r="2.9" fill="none" stroke="#d6d6d6" stroke-width="1"/></svg>
<div class="a" style="left:687px;top:610px;width:289px;height:1px;background:#4b4b4b;"></div>
<div class="a" style="left:946px;top:596px;width:1px;height:15px;background:#4b4b4b;"></div>
<svg class="a" style="left:953.5px;top:599.25px;" width="9" height="9" viewBox="0 0 9 9"><circle cx="4.5" cy="4.5" r="2.9" fill="none" stroke="#d6d6d6" stroke-width="1"/></svg>
<svg class="a" style="left:964.5px;top:599.75px;" width="8" height="8" viewBox="0 0 8 8"><rect x="0.5" y="0.5" width="7" height="7" fill="#b01020" stroke="#2a2a2a" stroke-width="1"/></svg>
<div class="a" style="left:687px;top:625px;width:289px;height:1px;background:#4b4b4b;"></div>
<div class="a" style="left:946px;top:611px;width:1px;height:15px;background:#4b4b4b;"></div>
<svg class="a" style="left:953.5px;top:614.0px;" width="9" height="9" viewBox="0 0 9 9"><circle cx="4.5" cy="4.5" r="2.9" fill="none" stroke="#d6d6d6" stroke-width="1"/></svg>
<svg class="a" style="left:964.5px;top:614.5px;" width="8" height="8" viewBox="0 0 8 8"><rect x="0.5" y="0.5" width="7" height="7" fill="#c05020" stroke="#2a2a2a" stroke-width="1"/></svg>
<div class="a" style="left:687px;top:640px;width:289px;height:1px;background:#4b4b4b;"></div>
<div class="a" style="left:946px;top:626px;width:1px;height:15px;background:#4b4b4b;"></div>
<svg class="a" style="left:953.5px;top:628.75px;" width="9" height="9" viewBox="0 0 9 9"><circle cx="4.5" cy="4.5" r="2.9" fill="none" stroke="#d6d6d6" stroke-width="1"/></svg>
<svg class="a" style="left:964.5px;top:629.25px;" width="8" height="8" viewBox="0 0 8 8"><rect x="0.5" y="0.5" width="7" height="7" fill="#e848e8" stroke="#2a2a2a" stroke-width="1"/></svg>
<svg class="a" style="left:692px;top:629.75px;" width="11" height="7" viewBox="0 0 11 7"><path d="M0.5,3.5 C3,0 8,0 10.5,3.5 C8,7 3,7 0.5,3.5 Z" fill="#d6d6d6"/><circle cx="5.5" cy="3.5" r="1.6" fill="#535353"/></svg>
<div class="a" style="left:705px;top:626px;width:1px;height:15px;background:#4b4b4b;"></div>
<div class="a" style="left:720px;top:627px;width:3px;height:12px;background:#e040e0;"></div>
<svg class="a" style="left:760px;top:629.25px;" width="5" height="8" viewBox="0 0 5 8"><path d="M1,1 L4,4 L1,7" fill="none" stroke="#d6d6d6" stroke-width="1.1"/></svg>
<div class="a" style="left:773px;top:627px;width:13px;height:13px;background:#262626;"></div>
<div class="a" style="left:774px;top:628px;width:11px;height:11px;background:#ffffff;"></div>
<div class="t" style="left:789.8px;top:629.7px;font-size:7.25px;color:#dcdcdc;font-weight:normal;">Verkehr - Strassen - Autobahn</div>
<div class="a" style="left:687px;top:654px;width:289px;height:1px;background:#4b4b4b;"></div>
<div class="a" style="left:946px;top:641px;width:1px;height:15px;background:#4b4b4b;"></div>
<svg class="a" style="left:953.5px;top:643.5px;" width="9" height="9" viewBox="0 0 9 9"><circle cx="4.5" cy="4.5" r="2.9" fill="none" stroke="#d6d6d6" stroke-width="1"/></svg>
<svg class="a" style="left:964.5px;top:644.0px;" width="8" height="8" viewBox="0 0 8 8"><rect x="0.5" y="0.5" width="7" height="7" fill="#4848d8" stroke="#2a2a2a" stroke-width="1"/></svg>
<svg class="a" style="left:692px;top:644.5px;" width="11" height="7" viewBox="0 0 11 7"><path d="M0.5,3.5 C3,0 8,0 10.5,3.5 C8,7 3,7 0.5,3.5 Z" fill="#d6d6d6"/><circle cx="5.5" cy="3.5" r="1.6" fill="#535353"/></svg>
<div class="a" style="left:705px;top:641px;width:1px;height:15px;background:#4b4b4b;"></div>
<div class="a" style="left:720px;top:642px;width:3px;height:12px;background:#5050c8;"></div>
<svg class="a" style="left:760px;top:644.0px;" width="5" height="8" viewBox="0 0 5 8"><path d="M1,1 L4,4 L1,7" fill="none" stroke="#d6d6d6" stroke-width="1.1"/></svg>
<div class="a" style="left:773px;top:642px;width:13px;height:13px;background:#262626;"></div>
<div class="a" style="left:774px;top:642px;width:11px;height:11px;background:#ffffff;"></div>
<div class="t" style="left:789.8px;top:644.5px;font-size:7.25px;color:#dcdcdc;font-weight:normal;">Verkehr - Strassen - Bundesstrasse, Schnel...</div>
<div class="a" style="left:687px;top:669px;width:289px;height:1px;background:#4b4b4b;"></div>
<div class="a" style="left:946px;top:655px;width:1px;height:15px;background:#4b4b4b;"></div>
<svg class="a" style="left:953.5px;top:658.25px;" width="9" height="9" viewBox="0 0 9 9"><circle cx="4.5" cy="4.5" r="2.9" fill="none" stroke="#d6d6d6" stroke-width="1"/></svg>
<svg class="a" style="left:964.5px;top:658.75px;" width="8" height="8" viewBox="0 0 8 8"><rect x="0.5" y="0.5" width="7" height="7" fill="#38d048" stroke="#2a2a2a" stroke-width="1"/></svg>
<svg class="a" style="left:692px;top:659.25px;" width="11" height="7" viewBox="0 0 11 7"><path d="M0.5,3.5 C3,0 8,0 10.5,3.5 C8,7 3,7 0.5,3.5 Z" fill="#d6d6d6"/><circle cx="5.5" cy="3.5" r="1.6" fill="#535353"/></svg>
<div class="a" style="left:705px;top:655px;width:1px;height:15px;background:#4b4b4b;"></div>
<div class="a" style="left:720px;top:657px;width:3px;height:12px;background:#50d050;"></div>
<svg class="a" style="left:760px;top:658.75px;" width="5" height="8" viewBox="0 0 5 8"><path d="M1,1 L4,4 L1,7" fill="none" stroke="#d6d6d6" stroke-width="1.1"/></svg>
<div class="a" style="left:773px;top:656px;width:13px;height:13px;background:#262626;"></div>
<div class="a" style="left:774px;top:657px;width:11px;height:11px;background:#f4f0c8;"></div>
<div class="t" style="left:789.8px;top:659.2px;font-size:7.25px;color:#dcdcdc;font-weight:normal;">Verkehr - Strassen - Hauptstrasse</div>
<div class="a" style="left:687px;top:684px;width:289px;height:1px;background:#4b4b4b;"></div>
<div class="a" style="left:946px;top:670px;width:1px;height:15px;background:#4b4b4b;"></div>
<svg class="a" style="left:953.5px;top:673.0px;" width="9" height="9" viewBox="0 0 9 9"><circle cx="4.5" cy="4.5" r="2.9" fill="none" stroke="#d6d6d6" stroke-width="1"/></svg>
<svg class="a" style="left:964.5px;top:673.5px;" width="8" height="8" viewBox="0 0 8 8"><rect x="0.5" y="0.5" width="7" height="7" fill="#f06060" stroke="#2a2a2a" stroke-width="1"/></svg>
<svg class="a" style="left:692px;top:674.0px;" width="11" height="7" viewBox="0 0 11 7"><path d="M0.5,3.5 C3,0 8,0 10.5,3.5 C8,7 3,7 0.5,3.5 Z" fill="#d6d6d6"/><circle cx="5.5" cy="3.5" r="1.6" fill="#535353"/></svg>
<div class="a" style="left:705px;top:670px;width:1px;height:15px;background:#4b4b4b;"></div>
<div class="a" style="left:720px;top:672px;width:3px;height:12px;background:#e05050;"></div>
<svg class="a" style="left:760px;top:673.5px;" width="5" height="8" viewBox="0 0 5 8"><path d="M1,1 L4,4 L1,7" fill="none" stroke="#d6d6d6" stroke-width="1.1"/></svg>
<div class="a" style="left:773px;top:671px;width:13px;height:13px;background:#262626;"></div>
<div class="a" style="left:774px;top:672px;width:11px;height:11px;background:#ffffff;"></div>
<div class="t" style="left:789.8px;top:674.0px;font-size:7.25px;color:#dcdcdc;font-weight:normal;">Verkehr - Strassen - Nebenstrasse</div>
<div class="a" style="left:687px;top:699px;width:289px;height:1px;background:#4b4b4b;"></div>
<div class="a" style="left:946px;top:685px;width:1px;height:15px;background:#4b4b4b;"></div>
<svg class="a" style="left:953.5px;top:687.75px;" width="9" height="9" viewBox="0 0 9 9"><circle cx="4.5" cy="4.5" r="2.9" fill="none" stroke="#d6d6d6" stroke-width="1"/></svg>
<svg class="a" style="left:964.5px;top:688.25px;" width="8" height="8" viewBox="0 0 8 8"><rect x="0.5" y="0.5" width="7" height="7" fill="#5090f0" stroke="#2a2a2a" stroke-width="1"/></svg>
<svg class="a" style="left:692px;top:688.75px;" width="11" height="7" viewBox="0 0 11 7"><path d="M0.5,3.5 C3,0 8,0 10.5,3.5 C8,7 3,7 0.5,3.5 Z" fill="#d6d6d6"/><circle cx="5.5" cy="3.5" r="1.6" fill="#535353"/></svg>
<div class="a" style="left:705px;top:685px;width:1px;height:15px;background:#4b4b4b;"></div>
<div class="a" style="left:720px;top:686px;width:3px;height:12px;background:#5080e0;"></div>
<svg class="a" style="left:760px;top:688.25px;" width="5" height="8" viewBox="0 0 5 8"><path d="M1,1 L4,4 L1,7" fill="none" stroke="#d6d6d6" stroke-width="1.1"/></svg>
<div class="a" style="left:773px;top:686px;width:13px;height:13px;background:#262626;"></div>
<div class="a" style="left:774px;top:687px;width:11px;height:11px;background:#ffffff;"></div>
<div class="t" style="left:789.8px;top:688.7px;font-size:7.25px;color:#dcdcdc;font-weight:normal;">Verkehr - Strassen - Fussgaengerzone (Fla...</div>
<div class="a" style="left:687px;top:713px;width:289px;height:1px;background:#4b4b4b;"></div>
<div class="a" style="left:946px;top:700px;width:1px;height:15px;background:#4b4b4b;"></div>
<svg class="a" style="left:953.5px;top:702.5px;" width="9" height="9" viewBox="0 0 9 9"><circle cx="4.5" cy="4.5" r="2.9" fill="none" stroke="#d6d6d6" stroke-width="1"/></svg>
<svg class="a" style="left:964.5px;top:703.0px;" width="8" height="8" viewBox="0 0 8 8"><rect x="0.5" y="0.5" width="7" height="7" fill="#e0e0e0" stroke="#2a2a2a" stroke-width="1"/></svg>
<svg class="a" style="left:692px;top:703.5px;" width="11" height="7" viewBox="0 0 11 7"><path d="M0.5,3.5 C3,0 8,0 10.5,3.5 C8,7 3,7 0.5,3.5 Z" fill="#d6d6d6"/><circle cx="5.5" cy="3.5" r="1.6" fill="#535353"/></svg>
<div class="a" style="left:705px;top:700px;width:1px;height:15px;background:#4b4b4b;"></div>
<div class="a" style="left:720px;top:701px;width:3px;height:12px;background:#d0d0d0;"></div>
<svg class="a" style="left:760px;top:703.0px;" width="5" height="8" viewBox="0 0 5 8"><path d="M1,1 L4,4 L1,7" fill="none" stroke="#d6d6d6" stroke-width="1.1"/></svg>
<div class="a" style="left:773px;top:700px;width:13px;height:13px;background:#262626;"></div>
<div class="a" style="left:774px;top:702px;width:11px;height:11px;background:#ffffff;"></div>
<div class="t" style="left:789.8px;top:703.5px;font-size:7.25px;color:#dcdcdc;font-weight:normal;">Verkehr - Strassen - Fussgaengerzone</div>
<div class="a" style="left:687px;top:728px;width:289px;height:1px;background:#4b4b4b;"></div>
<div class="a" style="left:946px;top:714px;width:1px;height:15px;background:#4b4b4b;"></div>
<svg class="a" style="left:953.5px;top:717.25px;" width="9" height="9" viewBox="0 0 9 9"><circle cx="4.5" cy="4.5" r="2.9" fill="none" stroke="#d6d6d6" stroke-width="1"/></svg>
<svg class="a" style="left:964.5px;top:717.75px;" width="8" height="8" viewBox="0 0 8 8"><rect x="0.5" y="0.5" width="7" height="7" fill="#7a1a8a" stroke="#2a2a2a" stroke-width="1"/></svg>
<svg class="a" style="left:692px;top:718.25px;" width="11" height="7" viewBox="0 0 11 7"><path d="M0.5,3.5 C3,0 8,0 10.5,3.5 C8,7 3,7 0.5,3.5 Z" fill="#d6d6d6"/><circle cx="5.5" cy="3.5" r="1.6" fill="#535353"/></svg>
<div class="a" style="left:705px;top:714px;width:1px;height:15px;background:#4b4b4b;"></div>
<div class="a" style="left:720px;top:716px;width:3px;height:12px;background:#6a1a7a;"></div>
<svg class="a" style="left:760px;top:717.75px;" width="5" height="8" viewBox="0 0 5 8"><path d="M1,1 L4,4 L1,7" fill="none" stroke="#d6d6d6" stroke-width="1.1"/></svg>
<div class="a" style="left:773px;top:715px;width:13px;height:13px;background:#262626;"></div>
<div class="a" style="left:774px;top:716px;width:11px;height:11px;background:#ffffff;"></div>
<div class="t" style="left:789.8px;top:718.2px;font-size:7.25px;color:#dcdcdc;font-weight:normal;">Verkehr - Strassen - Siedlungsstrasse</div>
<div class="a" style="left:687px;top:743px;width:289px;height:1px;background:#4b4b4b;"></div>
<div class="a" style="left:946px;top:729px;width:1px;height:15px;background:#4b4b4b;"></div>
<svg class="a" style="left:953.5px;top:732.0px;" width="9" height="9" viewBox="0 0 9 9"><circle cx="4.5" cy="4.5" r="2.9" fill="none" stroke="#d6d6d6" stroke-width="1"/></svg>
<svg class="a" style="left:964.5px;top:732.5px;" width="8" height="8" viewBox="0 0 8 8"><rect x="0.5" y="0.5" width="7" height="7" fill="#c08020" stroke="#2a2a2a" stroke-width="1"/></svg>
<svg class="a" style="left:692px;top:733.0px;" width="11" height="7" viewBox="0 0 11 7"><path d="M0.5,3.5 C3,0 8,0 10.5,3.5 C8,7 3,7 0.5,3.5 Z" fill="#d6d6d6"/><circle cx="5.5" cy="3.5" r="1.6" fill="#535353"/></svg>
<div class="a" style="left:705px;top:729px;width:1px;height:15px;background:#4b4b4b;"></div>
<div class="a" style="left:720px;top:730px;width:3px;height:12px;background:#a07020;"></div>
<svg class="a" style="left:760px;top:732.5px;" width="5" height="8" viewBox="0 0 5 8"><path d="M1,1 L4,4 L1,7" fill="none" stroke="#d6d6d6" stroke-width="1.1"/></svg>
<div class="a" style="left:773px;top:730px;width:13px;height:13px;background:#262626;"></div>
<div class="a" style="left:774px;top:731px;width:11px;height:11px;background:#ffffff;"></div>
<div class="t" style="left:789.8px;top:733.0px;font-size:7.25px;color:#dcdcdc;font-weight:normal;">Verkehr - Strassen - Bundesstrasse, Schnel...</div>
<div class="a" style="left:687px;top:758px;width:289px;height:1px;background:#4b4b4b;"></div>
<div class="a" style="left:946px;top:744px;width:1px;height:15px;background:#4b4b4b;"></div>
<svg class="a" style="left:953.5px;top:746.75px;" width="9" height="9" viewBox="0 0 9 9"><circle cx="4.5" cy="4.5" r="2.9" fill="none" stroke="#d6d6d6" stroke-width="1"/></svg>
<svg class="a" style="left:964.5px;top:747.25px;" width="8" height="8" viewBox="0 0 8 8"><rect x="0.5" y="0.5" width="7" height="7" fill="#c0d820" stroke="#2a2a2a" stroke-width="1"/></svg>
<svg class="a" style="left:692px;top:747.75px;" width="11" height="7" viewBox="0 0 11 7"><path d="M0.5,3.5 C3,0 8,0 10.5,3.5 C8,7 3,7 0.5,3.5 Z" fill="#d6d6d6"/><circle cx="5.5" cy="3.5" r="1.6" fill="#535353"/></svg>
<div class="a" style="left:705px;top:744px;width:1px;height:15px;background:#4b4b4b;"></div>
<div class="a" style="left:720px;top:745px;width:3px;height:12px;background:#b0d020;"></div>
<svg class="a" style="left:760px;top:747.25px;" width="5" height="8" viewBox="0 0 5 8"><path d="M1,1 L4,4 L1,7" fill="none" stroke="#d6d6d6" stroke-width="1.1"/></svg>
<div class="a" style="left:773px;top:745px;width:13px;height:13px;background:#262626;"></div>
<div class="a" style="left:774px;top:746px;width:11px;height:11px;background:#f4f0c8;"></div>
<div class="t" style="left:789.8px;top:747.7px;font-size:7.25px;color:#dcdcdc;font-weight:normal;">Verkehr - Strassen - Autobahn - Zubringer</div>
<div class="a" style="left:687px;top:772px;width:289px;height:1px;background:#4b4b4b;"></div>
<div class="a" style="left:946px;top:759px;width:1px;height:15px;background:#4b4b4b;"></div>
<svg class="a" style="left:953.5px;top:761.5px;" width="9" height="9" viewBox="0 0 9 9"><circle cx="4.5" cy="4.5" r="2.9" fill="none" stroke="#d6d6d6" stroke-width="1"/></svg>
<svg class="a" style="left:964.5px;top:762.0px;" width="8" height="8" viewBox="0 0 8 8"><rect x="0.5" y="0.5" width="7" height="7" fill="#c01040" stroke="#2a2a2a" stroke-width="1"/></svg>
<svg class="a" style="left:692px;top:762.5px;" width="11" height="7" viewBox="0 0 11 7"><path d="M0.5,3.5 C3,0 8,0 10.5,3.5 C8,7 3,7 0.5,3.5 Z" fill="#d6d6d6"/><circle cx="5.5" cy="3.5" r="1.6" fill="#535353"/></svg>
<div class="a" style="left:705px;top:759px;width:1px;height:15px;background:#4b4b4b;"></div>
<div class="a" style="left:720px;top:760px;width:3px;height:12px;background:#a01040;"></div>
<svg class="a" style="left:760px;top:762.0px;" width="5" height="8" viewBox="0 0 5 8"><path d="M1,1 L4,4 L1,7" fill="none" stroke="#d6d6d6" stroke-width="1.1"/></svg>
<div class="a" style="left:773px;top:760px;width:13px;height:13px;background:#262626;"></div>
<div class="a" style="left:774px;top:760px;width:11px;height:11px;background:#ffffff;"></div>
<div class="t" style="left:789.8px;top:762.5px;font-size:7.25px;color:#dcdcdc;font-weight:normal;">Verkehr - Strassen - Hauptstrasse - Zubrin...</div>
<div class="a" style="left:687px;top:787px;width:289px;height:1px;background:#4b4b4b;"></div>
<div class="a" style="left:946px;top:773px;width:1px;height:15px;background:#4b4b4b;"></div>
<svg class="a" style="left:953.5px;top:776.25px;" width="9" height="9" viewBox="0 0 9 9"><circle cx="4.5" cy="4.5" r="2.9" fill="none" stroke="#d6d6d6" stroke-width="1"/></svg>
<svg class="a" style="left:964.5px;top:776.75px;" width="8" height="8" viewBox="0 0 8 8"><rect x="0.5" y="0.5" width="7" height="7" fill="#f0a8a8" stroke="#2a2a2a" stroke-width="1"/></svg>
<svg class="a" style="left:692px;top:777.25px;" width="11" height="7" viewBox="0 0 11 7"><path d="M0.5,3.5 C3,0 8,0 10.5,3.5 C8,7 3,7 0.5,3.5 Z" fill="#d6d6d6"/><circle cx="5.5" cy="3.5" r="1.6" fill="#535353"/></svg>
<div class="a" style="left:705px;top:773px;width:1px;height:15px;background:#4b4b4b;"></div>
<div class="a" style="left:720px;top:775px;width:3px;height:12px;background:#f0a0a0;"></div>
<svg class="a" style="left:760px;top:776.75px;" width="5" height="8" viewBox="0 0 5 8"><path d="M1,1 L4,4 L1,7" fill="none" stroke="#d6d6d6" stroke-width="1.1"/></svg>
<div class="a" style="left:773px;top:774px;width:13px;height:13px;background:#262626;"></div>
<div class="a" style="left:774px;top:775px;width:11px;height:11px;background:#ffffff;"></div>
<div class="t" style="left:789.8px;top:777.2px;font-size:7.25px;color:#dcdcdc;font-weight:normal;">Verkehr - Strassen - Nebenstrasse - Zubri...</div>
<div class="a" style="left:976px;top:459px;width:10px;height:326px;background:#4f4f4f;"></div>
<svg class="a" style="left:976px;top:464px;" width="10" height="6" viewBox="0 0 10 6"><path d="M1.5,4.5 L5,1.5 L8.5,4.5" fill="none" stroke="#9a9a9a" stroke-width="1"/></svg>
<div class="a" style="left:977px;top:472px;width:8px;height:300px;background:#5a5a5a;border-radius:4px"></div>
<svg class="a" style="left:976px;top:776px;" width="10" height="6" viewBox="0 0 10 6"><path d="M1.5,1.5 L5,4.5 L8.5,1.5" fill="none" stroke="#9a9a9a" stroke-width="1"/></svg>
<div class="a" style="left:687px;top:785px;width:303px;height:15px;background:#535353;"></div>
<div class="t" style="left:690.0px;top:788.8px;font-size:7.3px;color:#cfcfcf;font-weight:normal;">14 Ebenen</div>
<svg class="a" style="left:867.8px;top:785px;" width="12" height="12" viewBox="0 0 12 12"><path d="M1,3 v8 h8 v-3" fill="none" stroke="#c8c8c8" stroke-width="1.2"/><path d="M5,7 L11,1 M7,1 h4 v4" fill="none" stroke="#c8c8c8" stroke-width="1.2"/></svg>
<svg class="a" style="left:886px;top:785px;" width="12" height="12" viewBox="0 0 12 12"><circle cx="5" cy="5" r="3.6" fill="none" stroke="#c8c8c8" stroke-width="1.2"/><path d="M7.5,7.5 L11,11" stroke="#c8c8c8" stroke-width="1.5"/></svg>
<svg class="a" style="left:904px;top:785px;" width="12" height="12" viewBox="0 0 12 12"><rect x="1" y="1" width="9" height="9" fill="none" stroke="#b0b0b0"/><rect x="3" y="3" width="5" height="5" fill="#c8c8c8"/></svg>
<svg class="a" style="left:922.4px;top:785px;" width="12" height="12" viewBox="0 0 12 12"><path d="M1,1 v3 h2" fill="none" stroke="#c8c8c8"/><rect x="4" y="2" width="8" height="8" fill="none" stroke="#c8c8c8"/><path d="M8,4 v4 M6,6 h4" stroke="#c8c8c8"/></svg>
<svg class="a" style="left:941.5px;top:785px;" width="12" height="12" viewBox="0 0 12 12"><rect x="1.5" y="1.5" width="9" height="9" fill="none" stroke="#c8c8c8"/><path d="M6,4 v4 M4,6 h4" stroke="#c8c8c8"/></svg>
<svg class="a" style="left:959.3px;top:785px;" width="12" height="12" viewBox="0 0 12 12"><rect x="1" y="2" width="9" height="1.3" fill="#a8a8a8"/><rect x="1.8" y="4" width="7.4" height="7.5" fill="#8a8a8a"/></svg>
<div class="a" style="left:390px;top:227px;width:442px;height:422px;background:#2e2e2e;"></div>
<div class="a" style="left:391px;top:228px;width:440px;height:420px;background:#535353;"></div>
<div class="a" style="left:391px;top:228px;width:440px;height:9px;background:#3d3d3d;"></div>
<div class="a" style="left:391px;top:237px;width:440px;height:19px;background:#454545;"></div>
<div class="a" style="left:391px;top:237px;width:65px;height:19px;background:#535353;"></div>
<div class="t" style="left:399.0px;top:243.3px;font-size:7.3px;color:#f0f0f0;font-weight:bold;">MAP Attributes</div>
<svg class="a" style="left:809px;top:230px;" width="8" height="6" viewBox="0 0 8 6"><path d="M3.5,0.5 L1,3 L3.5,5.5 M7,0.5 L4.5,3 L7,5.5" fill="none" stroke="#bdbdbd" stroke-width="1"/></svg>
<svg class="a" style="left:821px;top:229px;" width="8" height="8" viewBox="0 0 8 8"><path d="M1,1 L7,7 M7,1 L1,7" stroke="#d0d0d0" stroke-width="1.3"/></svg>
<svg class="a" style="left:817px;top:242px;" width="11" height="8" viewBox="0 0 11 8"><rect y="0" width="11" height="1.3" fill="#c8c8c8"/><rect y="3" width="11" height="1.3" fill="#c8c8c8"/><rect y="6" width="11" height="1.3" fill="#c8c8c8"/></svg>
<div class="t" style="left:398.3px;top:265.4px;font-size:7.8px;color:#bdbdbd;font-weight:normal;">Layer:</div>
<div class="a" style="left:427px;top:261.5px;width:357px;height:12.5px;background:#4b4b4b;"></div>
<svg class="a" style="left:432.5px;top:264px;" width="9" height="8" viewBox="0 0 9 8"><rect width="9" height="8" rx="1" fill="#4ea3f5"/><path d="M2,3 h5 M2,5.5 h5" stroke="#fff" stroke-width="0.9"/></svg>
<div class="t" style="left:445.0px;top:265.6px;font-size:7.6px;color:#dcdcdc;font-weight:normal;">Verkehr - Strassen - Siedlungsstrasse (2.924 selected)</div>
<svg class="a" style="left:772px;top:265px;" width="9" height="6" viewBox="0 0 9 6"><path d="M1,1 L4.5,4.5 L8,1" fill="none" stroke="#e0e0e0" stroke-width="1.4"/></svg>
<svg class="a" style="left:791px;top:263px;" width="14" height="10" viewBox="0 0 14 10"><path d="M1,5 h5 M6,1.5 v7 L12,5 Z" fill="#c8c8c8" stroke="#c8c8c8" stroke-width="1.4"/><rect x="12" y="1" width="1.5" height="8" fill="#c8c8c8"/></svg>
<svg class="a" style="left:811px;top:262px;" width="14" height="12" viewBox="0 0 14 12"><rect x="1" y="4" width="10" height="7" fill="none" stroke="#c8c8c8" stroke-width="1.1"/><path d="M1,6.5 h10 M4,4 v7 M7.5,4 v7" stroke="#c8c8c8" stroke-width="0.7"/><path d="M8,4 L12.5,0.5 M10,0.5 h3 v3" fill="none" stroke="#d8d8d8" stroke-width="1.2"/></svg>
<div class="a" style="left:397px;top:279px;width:24px;height:16px;background:#5d5d5d;"></div>
<div class="a" style="left:398px;top:280px;width:22px;height:14px;background:#4e4e4e;"></div>
<div class="a" style="left:421px;top:279px;width:70px;height:16px;background:#5d5d5d;"></div>
<div class="a" style="left:422px;top:280px;width:68px;height:14px;background:#4e4e4e;"></div>
<svg class="a" style="left:428px;top:283px;" width="8.5" height="8" viewBox="0 0 8.5 8"><rect width="8.5" height="8" rx="1" fill="#f0883a"/><path d="M2,2.5 h2 v3 h-2 M5,2.5 h2 M6,2.5 v3" fill="none" stroke="#ffd9b0" stroke-width="0.8"/></svg>
<div class="t" style="left:439.5px;top:284.1px;font-size:7.6px;color:#d8d8d8;font-weight:normal;">name</div>
<div class="a" style="left:491px;top:279px;width:70px;height:16px;background:#5d5d5d;"></div>
<div class="a" style="left:492px;top:280px;width:68px;height:14px;background:#4e4e4e;"></div>
<svg class="a" style="left:498px;top:283px;" width="8.5" height="8" viewBox="0 0 8.5 8"><rect width="8.5" height="8" rx="1" fill="#f0883a"/><path d="M2,2.5 h2 v3 h-2 M5,2.5 h2 M6,2.5 v3" fill="none" stroke="#ffd9b0" stroke-width="0.8"/></svg>
<div class="t" style="left:509.5px;top:284.1px;font-size:7.6px;color:#d8d8d8;font-weight:normal;">osm_key</div>
<div class="a" style="left:561px;top:279px;width:70px;height:16px;background:#5d5d5d;"></div>
<div class="a" style="left:562px;top:280px;width:68px;height:14px;background:#4e4e4e;"></div>
<svg class="a" style="left:568px;top:283px;" width="8.5" height="8" viewBox="0 0 8.5 8"><rect width="8.5" height="8" rx="1" fill="#f0883a"/><path d="M2,2.5 h2 v3 h-2 M5,2.5 h2 M6,2.5 v3" fill="none" stroke="#ffd9b0" stroke-width="0.8"/></svg>
<div class="t" style="left:579.5px;top:284.1px;font-size:7.6px;color:#d8d8d8;font-weight:normal;">osm_value</div>
<div class="a" style="left:631px;top:279px;width:70px;height:16px;background:#5d5d5d;"></div>
<div class="a" style="left:632px;top:280px;width:68px;height:14px;background:#4e4e4e;"></div>
<svg class="a" style="left:638px;top:283px;" width="8.5" height="8" viewBox="0 0 8.5 8"><rect width="8.5" height="8" rx="1" fill="#f0883a"/><path d="M2,2.5 h2 v3 h-2 M5,2.5 h2 M6,2.5 v3" fill="none" stroke="#ffd9b0" stroke-width="0.8"/></svg>
<div class="t" style="left:649.5px;top:284.1px;font-size:7.6px;color:#d8d8d8;font-weight:normal;">ref</div>
<div class="a" style="left:701px;top:279px;width:70px;height:16px;background:#5d5d5d;"></div>
<div class="a" style="left:702px;top:280px;width:68px;height:14px;background:#4e4e4e;"></div>
<svg class="a" style="left:708px;top:283px;" width="8.5" height="8" viewBox="0 0 8.5 8"><rect width="8.5" height="8" rx="1" fill="#f0883a"/><path d="M2,2.5 h2 v3 h-2 M5,2.5 h2 M6,2.5 v3" fill="none" stroke="#ffd9b0" stroke-width="0.8"/></svg>
<div class="t" style="left:719.5px;top:284.1px;font-size:7.6px;color:#d8d8d8;font-weight:normal;">type</div>
<div class="a" style="left:397px;top:295px;width:24px;height:14px;background:#5b5b5b;"></div>
<div class="a" style="left:398px;top:296px;width:22px;height:12px;background:#4c4c4c;"></div>
<div class="a" style="left:421px;top:296px;width:350px;height:12px;background:#505050;"></div>
<div class="a" style="left:491px;top:296px;width:1px;height:12px;background:#555555;"></div>
<div class="a" style="left:561px;top:296px;width:1px;height:12px;background:#555555;"></div>
<div class="a" style="left:631px;top:296px;width:1px;height:12px;background:#555555;"></div>
<div class="a" style="left:701px;top:296px;width:1px;height:12px;background:#555555;"></div>
<div class="t" style="left:399.5px;top:298.4px;font-size:7.6px;color:#d6d6d6;font-weight:normal;">1</div>
<div class="t" style="left:422.5px;top:298.4px;font-size:7.55px;color:#e0e0e0;font-weight:normal;">Ruppiner Str.</div>
<div class="t" style="left:492.8px;top:298.4px;font-size:7.55px;color:#e0e0e0;font-weight:normal;">highway</div>
<div class="t" style="left:562.5px;top:298.4px;font-size:7.55px;color:#e0e0e0;font-weight:normal;">residential</div>
<div class="t" style="left:703.4px;top:298.6px;font-size:7.35px;color:#e0e0e0;font-weight:normal;">Siedlungsstrasse</div>
<div class="a" style="left:397px;top:308px;width:24px;height:14px;background:#5b5b5b;"></div>
<div class="a" style="left:398px;top:309px;width:22px;height:12px;background:#4c4c4c;"></div>
<div class="a" style="left:421px;top:309px;width:350px;height:12px;background:#4b4b4b;"></div>
<div class="a" style="left:491px;top:309px;width:1px;height:12px;background:#555555;"></div>
<div class="a" style="left:561px;top:309px;width:1px;height:12px;background:#555555;"></div>
<div class="a" style="left:631px;top:309px;width:1px;height:12px;background:#555555;"></div>
<div class="a" style="left:701px;top:309px;width:1px;height:12px;background:#555555;"></div>
<div class="t" style="left:399.5px;top:311.0px;font-size:7.6px;color:#d6d6d6;font-weight:normal;">2</div>
<div class="t" style="left:492.8px;top:311.1px;font-size:7.55px;color:#e0e0e0;font-weight:normal;">highway</div>
<div class="t" style="left:703.4px;top:311.2px;font-size:7.35px;color:#e0e0e0;font-weight:normal;">Siedlungsstrasse</div>
<div class="a" style="left:397px;top:320px;width:24px;height:14px;background:#5b5b5b;"></div>
<div class="a" style="left:398px;top:321px;width:22px;height:12px;background:#4c4c4c;"></div>
<div class="a" style="left:421px;top:321px;width:350px;height:12px;background:#505050;"></div>
<div class="a" style="left:491px;top:321px;width:1px;height:12px;background:#555555;"></div>
<div class="a" style="left:561px;top:321px;width:1px;height:12px;background:#555555;"></div>
<div class="a" style="left:631px;top:321px;width:1px;height:12px;background:#555555;"></div>
<div class="a" style="left:701px;top:321px;width:1px;height:12px;background:#555555;"></div>
<div class="t" style="left:399.5px;top:323.7px;font-size:7.6px;color:#d6d6d6;font-weight:normal;">3</div>
<div class="t" style="left:492.8px;top:323.7px;font-size:7.55px;color:#e0e0e0;font-weight:normal;">highway</div>
<div class="t" style="left:562.5px;top:323.7px;font-size:7.55px;color:#e0e0e0;font-weight:normal;">residential</div>
<div class="t" style="left:703.4px;top:323.9px;font-size:7.35px;color:#e0e0e0;font-weight:normal;">Siedlungsstrasse</div>
<div class="a" style="left:397px;top:333px;width:24px;height:14px;background:#5b5b5b;"></div>
<div class="a" style="left:398px;top:334px;width:22px;height:12px;background:#4c4c4c;"></div>
<div class="a" style="left:421px;top:334px;width:350px;height:12px;background:#4b4b4b;"></div>
<div class="a" style="left:491px;top:334px;width:1px;height:12px;background:#555555;"></div>
<div class="a" style="left:561px;top:334px;width:1px;height:12px;background:#555555;"></div>
<div class="a" style="left:631px;top:334px;width:1px;height:12px;background:#555555;"></div>
<div class="a" style="left:701px;top:334px;width:1px;height:12px;background:#555555;"></div>
<div class="t" style="left:399.5px;top:336.3px;font-size:7.6px;color:#d6d6d6;font-weight:normal;">4</div>
<div class="t" style="left:492.8px;top:336.4px;font-size:7.55px;color:#e0e0e0;font-weight:normal;">highway</div>
<div class="t" style="left:562.5px;top:336.4px;font-size:7.55px;color:#e0e0e0;font-weight:normal;">residential</div>
<div class="t" style="left:703.4px;top:336.6px;font-size:7.35px;color:#e0e0e0;font-weight:normal;">Siedlungsstrasse</div>
<div class="a" style="left:397px;top:346px;width:24px;height:14px;background:#5b5b5b;"></div>
<div class="a" style="left:398px;top:347px;width:22px;height:12px;background:#4c4c4c;"></div>
<div class="a" style="left:421px;top:347px;width:350px;height:12px;background:#505050;"></div>
<div class="a" style="left:491px;top:347px;width:1px;height:12px;background:#555555;"></div>
<div class="a" style="left:561px;top:347px;width:1px;height:12px;background:#555555;"></div>
<div class="a" style="left:631px;top:347px;width:1px;height:12px;background:#555555;"></div>
<div class="a" style="left:701px;top:347px;width:1px;height:12px;background:#555555;"></div>
<div class="t" style="left:399.5px;top:349.0px;font-size:7.6px;color:#d6d6d6;font-weight:normal;">5</div>
<div class="t" style="left:422.5px;top:349.0px;font-size:7.55px;color:#e0e0e0;font-weight:normal;">Rudolf-Mosse-Str.</div>
<div class="t" style="left:492.8px;top:349.0px;font-size:7.55px;color:#e0e0e0;font-weight:normal;">highway</div>
<div class="t" style="left:562.5px;top:349.0px;font-size:7.55px;color:#e0e0e0;font-weight:normal;">residential</div>
<div class="t" style="left:703.4px;top:349.2px;font-size:7.35px;color:#e0e0e0;font-weight:normal;">Siedlungsstrasse</div>
<div class="a" style="left:397px;top:358px;width:24px;height:14px;background:#5b5b5b;"></div>
<div class="a" style="left:398px;top:359px;width:22px;height:12px;background:#4c4c4c;"></div>
<div class="a" style="left:421px;top:359px;width:350px;height:12px;background:#4b4b4b;"></div>
<div class="a" style="left:491px;top:359px;width:1px;height:12px;background:#555555;"></div>
<div class="a" style="left:561px;top:359px;width:1px;height:12px;background:#555555;"></div>
<div class="a" style="left:631px;top:359px;width:1px;height:12px;background:#555555;"></div>
<div class="a" style="left:701px;top:359px;width:1px;height:12px;background:#555555;"></div>
<div class="t" style="left:399.5px;top:361.7px;font-size:7.6px;color:#d6d6d6;font-weight:normal;">6</div>
<div class="t" style="left:492.8px;top:361.7px;font-size:7.55px;color:#e0e0e0;font-weight:normal;">highway</div>
<div class="t" style="left:562.5px;top:361.7px;font-size:7.55px;color:#e0e0e0;font-weight:normal;">living_street</div>
<div class="t" style="left:703.4px;top:361.9px;font-size:7.35px;color:#e0e0e0;font-weight:normal;">Siedlungsstrasse</div>
<div class="a" style="left:397px;top:371px;width:24px;height:14px;background:#5b5b5b;"></div>
<div class="a" style="left:398px;top:372px;width:22px;height:12px;background:#4c4c4c;"></div>
<div class="a" style="left:421px;top:372px;width:350px;height:12px;background:#505050;"></div>
<div class="a" style="left:491px;top:372px;width:1px;height:12px;background:#555555;"></div>
<div class="a" style="left:561px;top:372px;width:1px;height:12px;background:#555555;"></div>
<div class="a" style="left:631px;top:372px;width:1px;height:12px;background:#555555;"></div>
<div class="a" style="left:701px;top:372px;width:1px;height:12px;background:#555555;"></div>
<div class="t" style="left:399.5px;top:374.3px;font-size:7.6px;color:#d6d6d6;font-weight:normal;">7</div>
<div class="t" style="left:492.8px;top:374.4px;font-size:7.55px;color:#e0e0e0;font-weight:normal;">highway</div>
<div class="t" style="left:703.4px;top:374.5px;font-size:7.35px;color:#e0e0e0;font-weight:normal;">Siedlungsstrasse</div>
<div class="a" style="left:397px;top:384px;width:24px;height:14px;background:#5b5b5b;"></div>
<div class="a" style="left:398px;top:385px;width:22px;height:12px;background:#4c4c4c;"></div>
<div class="a" style="left:421px;top:385px;width:350px;height:12px;background:#4b4b4b;"></div>
<div class="a" style="left:491px;top:385px;width:1px;height:12px;background:#555555;"></div>
<div class="a" style="left:561px;top:385px;width:1px;height:12px;background:#555555;"></div>
<div class="a" style="left:631px;top:385px;width:1px;height:12px;background:#555555;"></div>
<div class="a" style="left:701px;top:385px;width:1px;height:12px;background:#555555;"></div>
<div class="t" style="left:399.5px;top:387.0px;font-size:7.6px;color:#d6d6d6;font-weight:normal;">8</div>
<div class="t" style="left:492.8px;top:387.0px;font-size:7.55px;color:#e0e0e0;font-weight:normal;">highway</div>
<div class="t" style="left:703.4px;top:387.2px;font-size:7.35px;color:#e0e0e0;font-weight:normal;">Siedlungsstrasse</div>
<div class="a" style="left:397px;top:396px;width:24px;height:14px;background:#5b5b5b;"></div>
<div class="a" style="left:398px;top:397px;width:22px;height:12px;background:#4c4c4c;"></div>
<div class="a" style="left:421px;top:397px;width:350px;height:12px;background:#505050;"></div>
<div class="a" style="left:491px;top:397px;width:1px;height:12px;background:#555555;"></div>
<div class="a" style="left:561px;top:397px;width:1px;height:12px;background:#555555;"></div>
<div class="a" style="left:631px;top:397px;width:1px;height:12px;background:#555555;"></div>
<div class="a" style="left:701px;top:397px;width:1px;height:12px;background:#555555;"></div>
<div class="t" style="left:399.5px;top:399.6px;font-size:7.6px;color:#d6d6d6;font-weight:normal;">9</div>
<div class="t" style="left:422.5px;top:399.7px;font-size:7.55px;color:#e0e0e0;font-weight:normal;">Nackenheimer W...</div>
<div class="t" style="left:492.8px;top:399.7px;font-size:7.55px;color:#e0e0e0;font-weight:normal;">highway</div>
<div class="t" style="left:562.5px;top:399.7px;font-size:7.55px;color:#e0e0e0;font-weight:normal;">residential</div>
<div class="t" style="left:703.4px;top:399.9px;font-size:7.35px;color:#e0e0e0;font-weight:normal;">Siedlungsstrasse</div>
<div class="a" style="left:397px;top:409px;width:24px;height:14px;background:#5b5b5b;"></div>
<div class="a" style="left:398px;top:410px;width:22px;height:12px;background:#4c4c4c;"></div>
<div class="a" style="left:421px;top:410px;width:350px;height:12px;background:#4b4b4b;"></div>
<div class="a" style="left:491px;top:410px;width:1px;height:12px;background:#555555;"></div>
<div class="a" style="left:561px;top:410px;width:1px;height:12px;background:#555555;"></div>
<div class="a" style="left:631px;top:410px;width:1px;height:12px;background:#555555;"></div>
<div class="a" style="left:701px;top:410px;width:1px;height:12px;background:#555555;"></div>
<div class="t" style="left:399.5px;top:412.3px;font-size:7.6px;color:#d6d6d6;font-weight:normal;">10</div>
<div class="t" style="left:422.5px;top:412.3px;font-size:7.55px;color:#e0e0e0;font-weight:normal;">Jollenseglerstr.</div>
<div class="t" style="left:492.8px;top:412.3px;font-size:7.55px;color:#e0e0e0;font-weight:normal;">highway</div>
<div class="t" style="left:562.5px;top:412.3px;font-size:7.55px;color:#e0e0e0;font-weight:normal;">residential</div>
<div class="t" style="left:703.4px;top:412.5px;font-size:7.35px;color:#e0e0e0;font-weight:normal;">Siedlungsstrasse</div>
<div class="a" style="left:397px;top:422px;width:24px;height:14px;background:#5b5b5b;"></div>
<div class="a" style="left:398px;top:423px;width:22px;height:12px;background:#4c4c4c;"></div>
<div class="a" style="left:421px;top:423px;width:350px;height:12px;background:#505050;"></div>
<div class="a" style="left:491px;top:423px;width:1px;height:12px;background:#555555;"></div>
<div class="a" style="left:561px;top:423px;width:1px;height:12px;background:#555555;"></div>
<div class="a" style="left:631px;top:423px;width:1px;height:12px;background:#555555;"></div>
<div class="a" style="left:701px;top:423px;width:1px;height:12px;background:#555555;"></div>
<div class="t" style="left:399.5px;top:425.0px;font-size:7.6px;color:#d6d6d6;font-weight:normal;">11</div>
<div class="t" style="left:492.8px;top:425.0px;font-size:7.55px;color:#e0e0e0;font-weight:normal;">highway</div>
<div class="t" style="left:562.5px;top:425.0px;font-size:7.55px;color:#e0e0e0;font-weight:normal;">residential</div>
<div class="t" style="left:703.4px;top:425.2px;font-size:7.35px;color:#e0e0e0;font-weight:normal;">Siedlungsstrasse</div>
<div class="a" style="left:397px;top:434px;width:24px;height:14px;background:#5b5b5b;"></div>
<div class="a" style="left:398px;top:435px;width:22px;height:12px;background:#4c4c4c;"></div>
<div class="a" style="left:421px;top:435px;width:350px;height:12px;background:#4b4b4b;"></div>
<div class="a" style="left:491px;top:435px;width:1px;height:12px;background:#555555;"></div>
<div class="a" style="left:561px;top:435px;width:1px;height:12px;background:#555555;"></div>
<div class="a" style="left:631px;top:435px;width:1px;height:12px;background:#555555;"></div>
<div class="a" style="left:701px;top:435px;width:1px;height:12px;background:#555555;"></div>
<div class="t" style="left:399.5px;top:437.6px;font-size:7.6px;color:#d6d6d6;font-weight:normal;">12</div>
<div class="t" style="left:422.5px;top:437.7px;font-size:7.55px;color:#e0e0e0;font-weight:normal;">Chopinstr.</div>
<div class="t" style="left:492.8px;top:437.7px;font-size:7.55px;color:#e0e0e0;font-weight:normal;">highway</div>
<div class="t" style="left:562.5px;top:437.7px;font-size:7.55px;color:#e0e0e0;font-weight:normal;">residential</div>
<div class="t" style="left:703.4px;top:437.8px;font-size:7.35px;color:#e0e0e0;font-weight:normal;">Siedlungsstrasse</div>
<div class="a" style="left:397px;top:447px;width:24px;height:14px;background:#5b5b5b;"></div>
<div class="a" style="left:398px;top:448px;width:22px;height:12px;background:#4c4c4c;"></div>
<div class="a" style="left:421px;top:448px;width:350px;height:12px;background:#505050;"></div>
<div class="a" style="left:491px;top:448px;width:1px;height:12px;background:#555555;"></div>
<div class="a" style="left:561px;top:448px;width:1px;height:12px;background:#555555;"></div>
<div class="a" style="left:631px;top:448px;width:1px;height:12px;background:#555555;"></div>
<div class="a" style="left:701px;top:448px;width:1px;height:12px;background:#555555;"></div>
<div class="t" style="left:399.5px;top:450.3px;font-size:7.6px;color:#d6d6d6;font-weight:normal;">13</div>
<div class="t" style="left:422.5px;top:450.3px;font-size:7.55px;color:#e0e0e0;font-weight:normal;">Marie-Luise-Str.</div>
<div class="t" style="left:492.8px;top:450.3px;font-size:7.55px;color:#e0e0e0;font-weight:normal;">highway</div>
<div class="t" style="left:562.5px;top:450.3px;font-size:7.55px;color:#e0e0e0;font-weight:normal;">residential</div>
<div class="t" style="left:703.4px;top:450.5px;font-size:7.35px;color:#e0e0e0;font-weight:normal;">Siedlungsstrasse</div>
<div class="a" style="left:397px;top:460px;width:24px;height:14px;background:#5b5b5b;"></div>
<div class="a" style="left:398px;top:461px;width:22px;height:12px;background:#4c4c4c;"></div>
<div class="a" style="left:421px;top:461px;width:350px;height:12px;background:#4b4b4b;"></div>
<div class="a" style="left:491px;top:461px;width:1px;height:12px;background:#555555;"></div>
<div class="a" style="left:561px;top:461px;width:1px;height:12px;background:#555555;"></div>
<div class="a" style="left:631px;top:461px;width:1px;height:12px;background:#555555;"></div>
<div class="a" style="left:701px;top:461px;width:1px;height:12px;background:#555555;"></div>
<div class="t" style="left:399.5px;top:462.9px;font-size:7.6px;color:#d6d6d6;font-weight:normal;">14</div>
<div class="t" style="left:422.5px;top:463.0px;font-size:7.55px;color:#e0e0e0;font-weight:normal;">Solferinostr.</div>
<div class="t" style="left:492.8px;top:463.0px;font-size:7.55px;color:#e0e0e0;font-weight:normal;">highway</div>
<div class="t" style="left:562.5px;top:463.0px;font-size:7.55px;color:#e0e0e0;font-weight:normal;">residential</div>
<div class="t" style="left:703.4px;top:463.2px;font-size:7.35px;color:#e0e0e0;font-weight:normal;">Siedlungsstrasse</div>
<div class="a" style="left:397px;top:472px;width:24px;height:14px;background:#5b5b5b;"></div>
<div class="a" style="left:398px;top:473px;width:22px;height:12px;background:#4c4c4c;"></div>
<div class="a" style="left:421px;top:473px;width:350px;height:12px;background:#505050;"></div>
<div class="a" style="left:491px;top:473px;width:1px;height:12px;background:#555555;"></div>
<div class="a" style="left:561px;top:473px;width:1px;height:12px;background:#555555;"></div>
<div class="a" style="left:631px;top:473px;width:1px;height:12px;background:#555555;"></div>
<div class="a" style="left:701px;top:473px;width:1px;height:12px;background:#555555;"></div>
<div class="t" style="left:399.5px;top:475.6px;font-size:7.6px;color:#d6d6d6;font-weight:normal;">15</div>
<div class="t" style="left:422.5px;top:475.6px;font-size:7.55px;color:#e0e0e0;font-weight:normal;">Frischlingsteig</div>
<div class="t" style="left:492.8px;top:475.6px;font-size:7.55px;color:#e0e0e0;font-weight:normal;">highway</div>
<div class="t" style="left:562.5px;top:475.6px;font-size:7.55px;color:#e0e0e0;font-weight:normal;">residential</div>
<div class="t" style="left:703.4px;top:475.8px;font-size:7.35px;color:#e0e0e0;font-weight:normal;">Siedlungsstrasse</div>
<div class="a" style="left:397px;top:485px;width:24px;height:14px;background:#5b5b5b;"></div>
<div class="a" style="left:398px;top:486px;width:22px;height:12px;background:#4c4c4c;"></div>
<div class="a" style="left:421px;top:486px;width:350px;height:12px;background:#4b4b4b;"></div>
<div class="a" style="left:491px;top:486px;width:1px;height:12px;background:#555555;"></div>
<div class="a" style="left:561px;top:486px;width:1px;height:12px;background:#555555;"></div>
<div class="a" style="left:631px;top:486px;width:1px;height:12px;background:#555555;"></div>
<div class="a" style="left:701px;top:486px;width:1px;height:12px;background:#555555;"></div>
<div class="t" style="left:399.5px;top:488.3px;font-size:7.6px;color:#d6d6d6;font-weight:normal;">16</div>
<div class="t" style="left:492.8px;top:488.3px;font-size:7.55px;color:#e0e0e0;font-weight:normal;">highway</div>
<div class="t" style="left:562.5px;top:488.3px;font-size:7.55px;color:#e0e0e0;font-weight:normal;">residential</div>
<div class="t" style="left:703.4px;top:488.5px;font-size:7.35px;color:#e0e0e0;font-weight:normal;">Siedlungsstrasse</div>
<div class="a" style="left:397px;top:498px;width:24px;height:14px;background:#5b5b5b;"></div>
<div class="a" style="left:398px;top:499px;width:22px;height:12px;background:#4c4c4c;"></div>
<div class="a" style="left:421px;top:499px;width:350px;height:12px;background:#505050;"></div>
<div class="a" style="left:491px;top:499px;width:1px;height:12px;background:#555555;"></div>
<div class="a" style="left:561px;top:499px;width:1px;height:12px;background:#555555;"></div>
<div class="a" style="left:631px;top:499px;width:1px;height:12px;background:#555555;"></div>
<div class="a" style="left:701px;top:499px;width:1px;height:12px;background:#555555;"></div>
<div class="t" style="left:399.5px;top:500.9px;font-size:7.6px;color:#d6d6d6;font-weight:normal;">17</div>
<div class="t" style="left:422.5px;top:501.0px;font-size:7.55px;color:#e0e0e0;font-weight:normal;">Pücklerstr.</div>
<div class="t" style="left:492.8px;top:501.0px;font-size:7.55px;color:#e0e0e0;font-weight:normal;">highway</div>
<div class="t" style="left:562.5px;top:501.0px;font-size:7.55px;color:#e0e0e0;font-weight:normal;">residential</div>
<div class="t" style="left:703.4px;top:501.1px;font-size:7.35px;color:#e0e0e0;font-weight:normal;">Siedlungsstrasse</div>
<div class="a" style="left:397px;top:510px;width:24px;height:14px;background:#5b5b5b;"></div>
<div class="a" style="left:398px;top:511px;width:22px;height:12px;background:#4c4c4c;"></div>
<div class="a" style="left:421px;top:511px;width:350px;height:12px;background:#4b4b4b;"></div>
<div class="a" style="left:491px;top:511px;width:1px;height:12px;background:#555555;"></div>
<div class="a" style="left:561px;top:511px;width:1px;height:12px;background:#555555;"></div>
<div class="a" style="left:631px;top:511px;width:1px;height:12px;background:#555555;"></div>
<div class="a" style="left:701px;top:511px;width:1px;height:12px;background:#555555;"></div>
<div class="t" style="left:399.5px;top:513.6px;font-size:7.6px;color:#d6d6d6;font-weight:normal;">18</div>
<div class="t" style="left:492.8px;top:513.6px;font-size:7.55px;color:#e0e0e0;font-weight:normal;">highway</div>
<div class="t" style="left:562.5px;top:513.6px;font-size:7.55px;color:#e0e0e0;font-weight:normal;">residential</div>
<div class="t" style="left:703.4px;top:513.8px;font-size:7.35px;color:#e0e0e0;font-weight:normal;">Siedlungsstrasse</div>
<div class="a" style="left:397px;top:523px;width:24px;height:14px;background:#5b5b5b;"></div>
<div class="a" style="left:398px;top:524px;width:22px;height:12px;background:#4c4c4c;"></div>
<div class="a" style="left:421px;top:524px;width:350px;height:12px;background:#505050;"></div>
<div class="a" style="left:491px;top:524px;width:1px;height:12px;background:#555555;"></div>
<div class="a" style="left:561px;top:524px;width:1px;height:12px;background:#555555;"></div>
<div class="a" style="left:631px;top:524px;width:1px;height:12px;background:#555555;"></div>
<div class="a" style="left:701px;top:524px;width:1px;height:12px;background:#555555;"></div>
<div class="t" style="left:399.5px;top:526.2px;font-size:7.6px;color:#d6d6d6;font-weight:normal;">19</div>
<div class="t" style="left:492.8px;top:526.3px;font-size:7.55px;color:#e0e0e0;font-weight:normal;">highway</div>
<div class="t" style="left:703.4px;top:526.5px;font-size:7.35px;color:#e0e0e0;font-weight:normal;">Siedlungsstrasse</div>
<div class="a" style="left:397px;top:536px;width:24px;height:14px;background:#5b5b5b;"></div>
<div class="a" style="left:398px;top:537px;width:22px;height:12px;background:#4c4c4c;"></div>
<div class="a" style="left:421px;top:537px;width:350px;height:12px;background:#4b4b4b;"></div>
<div class="a" style="left:491px;top:537px;width:1px;height:12px;background:#555555;"></div>
<div class="a" style="left:561px;top:537px;width:1px;height:12px;background:#555555;"></div>
<div class="a" style="left:631px;top:537px;width:1px;height:12px;background:#555555;"></div>
<div class="a" style="left:701px;top:537px;width:1px;height:12px;background:#555555;"></div>
<div class="t" style="left:399.5px;top:538.9px;font-size:7.6px;color:#d6d6d6;font-weight:normal;">20</div>
<div class="t" style="left:422.5px;top:538.9px;font-size:7.55px;color:#e0e0e0;font-weight:normal;">Stubnitzstr.</div>
<div class="t" style="left:492.8px;top:538.9px;font-size:7.55px;color:#e0e0e0;font-weight:normal;">highway</div>
<div class="t" style="left:562.5px;top:538.9px;font-size:7.55px;color:#e0e0e0;font-weight:normal;">residential</div>
<div class="t" style="left:703.4px;top:539.1px;font-size:7.35px;color:#e0e0e0;font-weight:normal;">Siedlungsstrasse</div>
<div class="a" style="left:397px;top:548px;width:24px;height:14px;background:#5b5b5b;"></div>
<div class="a" style="left:398px;top:549px;width:22px;height:12px;background:#4c4c4c;"></div>
<div class="a" style="left:421px;top:549px;width:350px;height:12px;background:#505050;"></div>
<div class="a" style="left:491px;top:549px;width:1px;height:12px;background:#555555;"></div>
<div class="a" style="left:561px;top:549px;width:1px;height:12px;background:#555555;"></div>
<div class="a" style="left:631px;top:549px;width:1px;height:12px;background:#555555;"></div>
<div class="a" style="left:701px;top:549px;width:1px;height:12px;background:#555555;"></div>
<div class="t" style="left:399.5px;top:551.6px;font-size:7.6px;color:#d6d6d6;font-weight:normal;">21</div>
<div class="t" style="left:422.5px;top:551.6px;font-size:7.55px;color:#e0e0e0;font-weight:normal;">Goethestr.</div>
<div class="t" style="left:492.8px;top:551.6px;font-size:7.55px;color:#e0e0e0;font-weight:normal;">highway</div>
<div class="t" style="left:562.5px;top:551.6px;font-size:7.55px;color:#e0e0e0;font-weight:normal;">residential</div>
<div class="t" style="left:703.4px;top:551.8px;font-size:7.35px;color:#e0e0e0;font-weight:normal;">Siedlungsstrasse</div>
<div class="a" style="left:397px;top:561px;width:24px;height:14px;background:#5b5b5b;"></div>
<div class="a" style="left:398px;top:562px;width:22px;height:12px;background:#4c4c4c;"></div>
<div class="a" style="left:421px;top:562px;width:350px;height:12px;background:#4b4b4b;"></div>
<div class="a" style="left:491px;top:562px;width:1px;height:12px;background:#555555;"></div>
<div class="a" style="left:561px;top:562px;width:1px;height:12px;background:#555555;"></div>
<div class="a" style="left:631px;top:562px;width:1px;height:12px;background:#555555;"></div>
<div class="a" style="left:701px;top:562px;width:1px;height:12px;background:#555555;"></div>
<div class="t" style="left:399.5px;top:564.2px;font-size:7.6px;color:#d6d6d6;font-weight:normal;">22</div>
<div class="t" style="left:422.5px;top:564.3px;font-size:7.55px;color:#e0e0e0;font-weight:normal;">Brauhausstr.</div>
<div class="t" style="left:492.8px;top:564.3px;font-size:7.55px;color:#e0e0e0;font-weight:normal;">highway</div>
<div class="t" style="left:562.5px;top:564.3px;font-size:7.55px;color:#e0e0e0;font-weight:normal;">residential</div>
<div class="t" style="left:703.4px;top:564.4px;font-size:7.35px;color:#e0e0e0;font-weight:normal;">Siedlungsstrasse</div>
<div class="a" style="left:397px;top:574px;width:24px;height:14px;background:#5b5b5b;"></div>
<div class="a" style="left:398px;top:575px;width:22px;height:12px;background:#4c4c4c;"></div>
<div class="a" style="left:421px;top:575px;width:350px;height:12px;background:#505050;"></div>
<div class="a" style="left:491px;top:575px;width:1px;height:12px;background:#555555;"></div>
<div class="a" style="left:561px;top:575px;width:1px;height:12px;background:#555555;"></div>
<div class="a" style="left:631px;top:575px;width:1px;height:12px;background:#555555;"></div>
<div class="a" style="left:701px;top:575px;width:1px;height:12px;background:#555555;"></div>
<div class="t" style="left:399.5px;top:576.9px;font-size:7.6px;color:#d6d6d6;font-weight:normal;">23</div>
<div class="t" style="left:422.5px;top:576.9px;font-size:7.55px;color:#e0e0e0;font-weight:normal;">Blumenthalstr.</div>
<div class="t" style="left:492.8px;top:576.9px;font-size:7.55px;color:#e0e0e0;font-weight:normal;">highway</div>
<div class="t" style="left:562.5px;top:576.9px;font-size:7.55px;color:#e0e0e0;font-weight:normal;">residential</div>
<div class="t" style="left:703.4px;top:577.1px;font-size:7.35px;color:#e0e0e0;font-weight:normal;">Siedlungsstrasse</div>
<div class="a" style="left:397px;top:586px;width:24px;height:14px;background:#5b5b5b;"></div>
<div class="a" style="left:398px;top:587px;width:22px;height:12px;background:#4c4c4c;"></div>
<div class="a" style="left:421px;top:587px;width:350px;height:12px;background:#4b4b4b;"></div>
<div class="a" style="left:491px;top:587px;width:1px;height:12px;background:#555555;"></div>
<div class="a" style="left:561px;top:587px;width:1px;height:12px;background:#555555;"></div>
<div class="a" style="left:631px;top:587px;width:1px;height:12px;background:#555555;"></div>
<div class="a" style="left:701px;top:587px;width:1px;height:12px;background:#555555;"></div>
<div class="t" style="left:399.5px;top:589.5px;font-size:7.6px;color:#d6d6d6;font-weight:normal;">24</div>
<div class="t" style="left:492.8px;top:589.6px;font-size:7.55px;color:#e0e0e0;font-weight:normal;">highway</div>
<div class="t" style="left:562.5px;top:589.6px;font-size:7.55px;color:#e0e0e0;font-weight:normal;">residential</div>
<div class="t" style="left:703.4px;top:589.8px;font-size:7.35px;color:#e0e0e0;font-weight:normal;">Siedlungsstrasse</div>
<div class="a" style="left:397px;top:599px;width:24px;height:14px;background:#5b5b5b;"></div>
<div class="a" style="left:398px;top:600px;width:22px;height:12px;background:#4c4c4c;"></div>
<div class="a" style="left:421px;top:600px;width:350px;height:12px;background:#505050;"></div>
<div class="a" style="left:491px;top:600px;width:1px;height:12px;background:#555555;"></div>
<div class="a" style="left:561px;top:600px;width:1px;height:12px;background:#555555;"></div>
<div class="a" style="left:631px;top:600px;width:1px;height:12px;background:#555555;"></div>
<div class="a" style="left:701px;top:600px;width:1px;height:12px;background:#555555;"></div>
<div class="t" style="left:399.5px;top:602.2px;font-size:7.6px;color:#d6d6d6;font-weight:normal;">25</div>
<div class="t" style="left:422.5px;top:602.2px;font-size:7.55px;color:#e0e0e0;font-weight:normal;">Jochemplatz</div>
<div class="t" style="left:492.8px;top:602.2px;font-size:7.55px;color:#e0e0e0;font-weight:normal;">highway</div>
<div class="t" style="left:562.5px;top:602.2px;font-size:7.55px;color:#e0e0e0;font-weight:normal;">residential</div>
<div class="t" style="left:703.4px;top:602.4px;font-size:7.35px;color:#e0e0e0;font-weight:normal;">Siedlungsstrasse</div>
<div class="a" style="left:397px;top:611px;width:24px;height:14px;background:#5b5b5b;"></div>
<div class="a" style="left:398px;top:612px;width:22px;height:12px;background:#4c4c4c;"></div>
<div class="a" style="left:421px;top:612px;width:350px;height:12px;background:#4b4b4b;"></div>
<div class="a" style="left:491px;top:612px;width:1px;height:12px;background:#555555;"></div>
<div class="a" style="left:561px;top:612px;width:1px;height:12px;background:#555555;"></div>
<div class="a" style="left:631px;top:612px;width:1px;height:12px;background:#555555;"></div>
<div class="a" style="left:701px;top:612px;width:1px;height:12px;background:#555555;"></div>
<div class="t" style="left:399.5px;top:614.9px;font-size:7.6px;color:#d6d6d6;font-weight:normal;">26</div>
<div class="t" style="left:422.5px;top:614.9px;font-size:7.55px;color:#e0e0e0;font-weight:normal;">Benfelder Str.</div>
<div class="t" style="left:492.8px;top:614.9px;font-size:7.55px;color:#e0e0e0;font-weight:normal;">highway</div>
<div class="t" style="left:562.5px;top:614.9px;font-size:7.55px;color:#e0e0e0;font-weight:normal;">residential</div>
<div class="t" style="left:703.4px;top:615.1px;font-size:7.35px;color:#e0e0e0;font-weight:normal;">Siedlungsstrasse</div>
<div class="a" style="left:818px;top:279px;width:9px;height:346px;background:#4a4a4a;"></div>
<svg class="a" style="left:818px;top:280px;" width="9" height="6" viewBox="0 0 9 6"><path d="M1.5,4.5 L4.5,1.5 L7.5,4.5" fill="none" stroke="#8a8a8a" stroke-width="1"/></svg>
<div class="a" style="left:819px;top:287px;width:7px;height:8px;background:#6a6a6a;border-radius:4px"></div>
<svg class="a" style="left:818px;top:618px;" width="9" height="6" viewBox="0 0 9 6"><path d="M1.5,1.5 L4.5,4.5 L7.5,1.5" fill="none" stroke="#8a8a8a" stroke-width="1"/></svg>
<div class="a" style="left:391px;top:627px;width:440px;height:1px;background:#4a4a4a;"></div>
<div class="t" style="left:397.7px;top:631.9px;font-size:7.5px;color:#b8b8b8;font-weight:normal;">2.924 line(s) selected</div>
<svg class="a" style="left:710.7px;top:628px;" width="14" height="12" viewBox="0 0 14 12"><rect x="1" y="1" width="2" height="10" fill="#b0b0b0"/><rect x="4.5" y="1" width="2" height="10" fill="#b0b0b0"/><path d="M8,8 L10,11 L12,8" fill="none" stroke="#b0b0b0"/></svg>
<svg class="a" style="left:726.2px;top:628px;" width="14" height="12" viewBox="0 0 14 12"><path d="M1,1 L4,4 M11,1 L8,4 M1,11 L4,8 M11,11 L8,8" stroke="#8e8e8e" stroke-width="1.3"/></svg>
<svg class="a" style="left:745px;top:628px;" width="14" height="12" viewBox="0 0 14 12"><rect x="1" y="2" width="9" height="8" fill="none" stroke="#c0c0c0"/><path d="M3,4.5 h5 M3,7 h3" stroke="#c0c0c0"/><path d="M6,11 L11,5 L12.5,6.5 L7.5,12 Z" fill="#d0d0d0"/></svg>
<svg class="a" style="left:764px;top:628px;" width="14" height="12" viewBox="0 0 14 12"><rect x="0" y="0" width="14" height="12" fill="#4a4a4a"/><circle cx="6" cy="5.5" r="3.5" fill="none" stroke="#c8c8c8" stroke-width="1.2"/><path d="M8.5,8 L11.5,11" stroke="#c8c8c8" stroke-width="1.5"/></svg>
<svg class="a" style="left:781.8px;top:628px;" width="14" height="12" viewBox="0 0 14 12"><path d="M10,1.5 H2 L6,6 L2,10.5 H10" fill="none" stroke="#d0d0d0" stroke-width="1.4"/></svg>
<svg class="a" style="left:799.5px;top:628px;" width="14" height="12" viewBox="0 0 14 12"><rect x="1" y="4" width="5" height="8" fill="none" stroke="#b8b8b8"/><rect x="7" y="2" width="5" height="10" fill="none" stroke="#b8b8b8"/><path d="M2,6 h3 M8,4 h3" stroke="#b8b8b8"/></svg>
<div class="a" style="left:391px;top:642px;width:440px;height:6px;background:#474747;"></div>
<div class="a" style="left:603px;top:644px;width:16px;height:2px;background:#6a6a6a;"></div>
</body></html>
